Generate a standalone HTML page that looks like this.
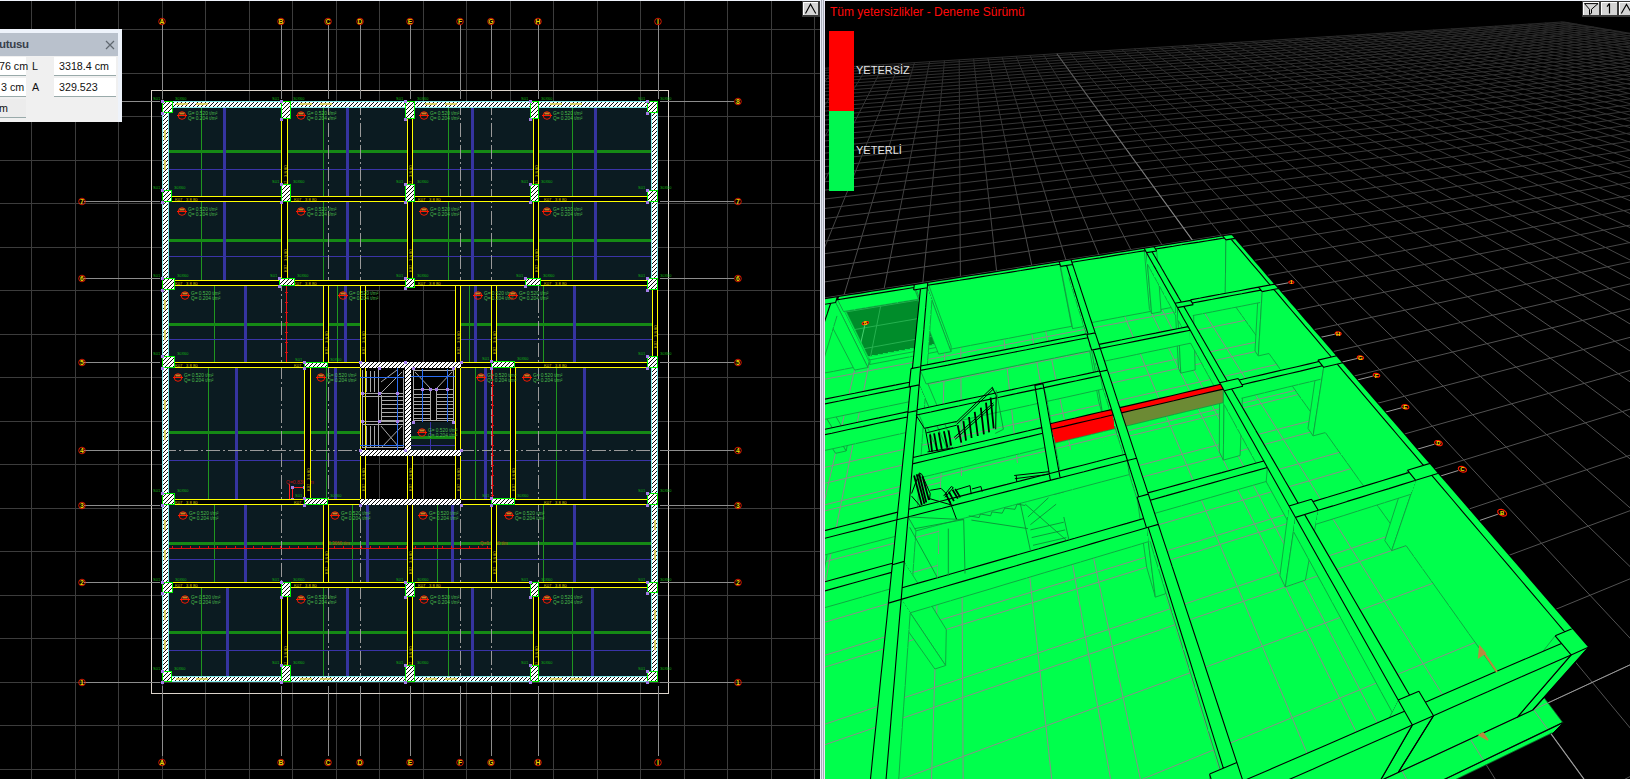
<!DOCTYPE html>
<html><head><meta charset="utf-8"><style>
html,body{margin:0;padding:0;width:1630px;height:779px;overflow:hidden;background:#000;font-family:"Liberation Sans",sans-serif}
#topline{position:absolute;left:0;top:0;width:1630px;height:1px;background:#eef2fa}
#sep{position:absolute;left:820px;top:0;width:5px;height:779px;background:linear-gradient(90deg,#e8ecf7 0,#e8ecf7 1px,#a8acb8 1px,#a8acb8 2px,#e4e8f2 2px,#e4e8f2 3px,#a8acb8 3px,#a8acb8 4px,#ece8f6 4px)}
</style></head><body>
<div id="topline"></div>
<svg width="820" height="778" viewBox="0 1 820 778" style="position:absolute;left:0;top:1px" shape-rendering="crispEdges"><defs>
<pattern id="hat" patternUnits="userSpaceOnUse" width="4" height="4">
<rect width="4" height="4" fill="#fff"/>
<path d="M-1,1 l2,-2 M0,4 l4,-4 M3,5 l2,-2" stroke="#000" stroke-width="0.95" shape-rendering="auto"/>
</pattern></defs><path d="M31.5,1V779M75.5,1V779M118.5,1V779M162.5,1V779M205.5,1V779M249.5,1V779M292.5,1V779M336.5,1V779M379.5,1V779M423.5,1V779M466.5,1V779M510.5,1V779M553.5,1V779M597.5,1V779M640.5,1V779M684.5,1V779M727.5,1V779M771.5,1V779M814.5,1V779M0,29.5H820M0,73.5H820M0,116.5H820M0,160.5H820M0,203.5H820M0,247.5H820M0,290.5H820M0,334.5H820M0,377.5H820M0,421.5H820M0,464.5H820M0,508.5H820M0,551.5H820M0,595.5H820M0,638.5H820M0,682.5H820M0,725.5H820M0,769.5H820" stroke="#3c3c3c" stroke-width="1" fill="none"/><rect x="151.5" y="90.5" width="517" height="603" fill="none" stroke="#dcd4cb" stroke-width="1"/><path d="M162.5,25V99M162.5,686V756M281.5,25V99M281.5,686V756M328.5,25V99M328.5,686V756M360.5,25V99M360.5,686V756M410.5,25V99M410.5,686V756M460.5,25V99M460.5,686V756M491.5,25V99M491.5,686V756M538.5,25V99M538.5,686V756M658.5,25V99M658.5,686V756M84,101.5H160M660,101.5H734M84,201.5H160M660,201.5H734M84,278.5H160M660,278.5H734M84,362.5H160M660,362.5H734M84,450.5H160M660,450.5H734M84,505.5H160M660,505.5H734M84,582.5H160M660,582.5H734M84,682.5H160M660,682.5H734" stroke="#8c8c8c" stroke-width="1" fill="none"/><rect x="162" y="101" width="496" height="581" fill="#0b1b21" /><g><rect x="365" y="286" width="90" height="76" fill="#000" /><rect x="365" y="456" width="42" height="43" fill="#000" /><rect x="413" y="456" width="42" height="43" fill="#000" /><path d="M379.5,286V362M379.5,456V499M423.5,286V362M423.5,456V499M365,290.5H455M365,334.5H455M365,464.5H455" stroke="#3c3c3c" stroke-width="1" fill="none"/></g><rect x="360" y="368" width="45" height="82" fill="#000" /><rect x="411" y="368" width="44" height="54" fill="#000" /><path d="M201.5,107V196M323.5,107V196M448.5,107V196M572.5,107V196M201.5,202V280M323.5,202V280M448.5,202V280M572.5,202V280M214.5,286V362M337.5,286V362M469.5,286V362M543.5,286V362M208.5,368V499M326.5,368V499M475.5,368V499M556.5,368V499M214.5,505V582M352.5,505V582M437.5,505V582M543.5,505V582M201.5,588V677M323.5,588V677M448.5,588V677M572.5,588V677" stroke="#1f961f" stroke-width="1" fill="none"/><path d="M168,169.5H281M288,169.5H407M413,169.5H533M539,169.5H652M168,256.5H281M288,256.5H407M413,256.5H533M539,256.5H652M168,339.5H323M329,339.5H360M461,339.5H491M497,339.5H652M168,460.5H304M311,460.5H360M461,460.5H510M516,460.5H652M168,559.5H323M329,559.5H407M413,559.5H491M497,559.5H652M168,650.5H281M288,650.5H407M413,650.5H533M539,650.5H652" stroke="#3a34a8" stroke-width="1" fill="none"/><path d="M168,151.5H281M288,151.5H407M413,151.5H533M539,151.5H652M168,240.5H281M288,240.5H407M413,240.5H533M539,240.5H652M168,324.5H323M329,324.5H360M461,324.5H491M497,324.5H652M168,432.5H304M311,432.5H360M461,432.5H510M516,432.5H652M168,543.5H323M329,543.5H407M413,543.5H491M497,543.5H652M168,632.5H281M288,632.5H407M413,632.5H533M539,632.5H652" stroke="#158a15" stroke-width="3" fill="none"/><path d="M224.5,107V196M347.5,107V196M472.5,107V196M595.5,107V196M224.5,202V280M347.5,202V280M472.5,202V280M595.5,202V280M245.5,286V362M345.5,286V362M475.5,286V362M574.5,286V362M236.5,368V499M335.5,368V499M485.5,368V499M584.5,368V499M245.5,505V582M367.5,505V582M452.5,505V582M574.5,505V582M227.5,588V677M347.5,588V677M472.5,588V677M592.5,588V677" stroke="#3634a0" stroke-width="3" fill="none"/><rect x="411" y="422" width="44" height="28" fill="#0b1b21" /><path d="M411,445.5H455M430.5,422V450" stroke="#3a34a8" stroke-width="1" fill="none"/><path d="M411,437.5H455" stroke="#158a15" stroke-width="3" fill="none"/><path d="M281.5,101V682M328.5,101V682M360.5,101V682M460.5,101V682M491.5,101V682M538.5,101V682" stroke="#9a9a9a" stroke-width="1" fill="none" stroke-dasharray="14,3,2,3"/><path d="M162,450.5H360M460,450.5H658" stroke="#9a9a9a" stroke-width="1" fill="none" stroke-dasharray="14,3,2,3"/><path d="M168,548.5H323M329,548.5H491" stroke="#e01010" stroke-width="1" fill="none"/><path d="M286.5,286V362M492.5,368V499" stroke="#ee1010" stroke-width="1.2" fill="none"/><path d="M172.5,546V548M181.5,546V548M190.5,546V548M199.5,546V548M208.5,546V548M217.5,546V548M226.5,546V548M235.5,546V548M244.5,546V548M253.5,546V548M262.5,546V548M271.5,546V548M280.5,546V548M289.5,546V548M298.5,546V548M307.5,546V548M316.5,546V548M325.5,546V548M334.5,546V548M343.5,546V548M352.5,546V548M361.5,546V548M370.5,546V548M379.5,546V548M388.5,546V548M397.5,546V548M406.5,546V548M415.5,546V548M424.5,546V548M433.5,546V548M442.5,546V548M451.5,546V548M460.5,546V548M469.5,546V548M478.5,546V548M487.5,546V548M285,292.5H288M285,302.5H288M285,312.5H288M285,322.5H288M285,332.5H288M285,342.5H288M285,352.5H288M491,375.5H494M491,385.5H494M491,395.5H494M491,405.5H494M491,415.5H494M491,425.5H494M491,435.5H494M491,445.5H494M491,455.5H494M491,465.5H494M491,475.5H494M491,485.5H494M491,495.5H494" stroke="#e01010" stroke-width="1" fill="none"/><path d="M292,487.5H304M292.5,487V500M289.5,484V503" stroke="#ff2020" stroke-width="1.2" fill="none"/><path d="M291,486h3v3h-3ZM303,486h3v3h-3ZM291,498h3v3h-3Z" fill="#a37ee8"/><text x="286" y="484" font-size="5" fill="#c01010" font-family="Liberation Sans">Q=0.830 t/m</text><text x="322" y="545" font-size="4.5" fill="#c04010" font-family="Liberation Sans">Q=0.3060 t/m</text><text x="480" y="545" font-size="4.5" fill="#c04010" font-family="Liberation Sans">Q=0.3060 t/m</text><path d="M168,196H652V202H168ZM168,280H652V286H168ZM168,362H360V368H168ZM460,362H652V368H460ZM168,499H360V505H168ZM460,499H652V505H460ZM168,582H652V588H168ZM281,107H288V196H281ZM281,202H288V280H281ZM281,588H288V677H281ZM407,107H413V196H407ZM407,202H413V280H407ZM407,588H413V677H407ZM533,107H539V196H533ZM533,202H539V280H533ZM533,588H539V677H533ZM407,505H413V582H407ZM407,456H413V499H407ZM652,290H658V356H652ZM323,286H329V362H323ZM323,505H329V582H323ZM491,286H497V362H491ZM491,505H497V582H491ZM360,286H366V362H360ZM455,286H461V362H455ZM304,368H311V499H304ZM360,368H366V499H360ZM455,368H461V499H455ZM510,368H516V499H510Z" fill="#000"/><path d="M168,196.5H652M168,201.5H652M168,280.5H652M168,285.5H652M168,362.5H360M168,367.5H360M460,362.5H652M460,367.5H652M168,499.5H360M168,504.5H360M460,499.5H652M460,504.5H652M168,582.5H652M168,587.5H652M281.5,107V196M287.5,107V196M281.5,202V280M287.5,202V280M281.5,588V677M287.5,588V677M407.5,107V196M412.5,107V196M407.5,202V280M412.5,202V280M407.5,588V677M412.5,588V677M533.5,107V196M538.5,107V196M533.5,202V280M538.5,202V280M533.5,588V677M538.5,588V677M407.5,505V582M412.5,505V582M407.5,456V499M412.5,456V499M652.5,290V356M657.5,290V356M323.5,286V362M328.5,286V362M323.5,505V582M328.5,505V582M491.5,286V362M496.5,286V362M491.5,505V582M496.5,505V582M360.5,286V362M365.5,286V362M455.5,286V362M460.5,286V362M304.5,368V499M310.5,368V499M360.5,368V499M365.5,368V499M455.5,368V499M460.5,368V499M510.5,368V499M515.5,368V499" stroke="#ffff00" stroke-width="1" fill="none"/><text x="175" y="201" font-size="4.2" fill="#d8c000" font-family="Liberation Sans">K07&#160;&#160;&#160;3 8 80</text><text x="294" y="201" font-size="4.2" fill="#d8c000" font-family="Liberation Sans">K07&#160;&#160;&#160;3 8 80</text><text x="418" y="201" font-size="4.2" fill="#d8c000" font-family="Liberation Sans">K07&#160;&#160;&#160;3 8 80</text><text x="544" y="201" font-size="4.2" fill="#d8c000" font-family="Liberation Sans">K07&#160;&#160;&#160;3 8 80</text><text x="175" y="285" font-size="4.2" fill="#d8c000" font-family="Liberation Sans">K07&#160;&#160;&#160;3 8 80</text><text x="294" y="285" font-size="4.2" fill="#d8c000" font-family="Liberation Sans">K07&#160;&#160;&#160;3 8 80</text><text x="418" y="285" font-size="4.2" fill="#d8c000" font-family="Liberation Sans">K07&#160;&#160;&#160;3 8 80</text><text x="544" y="285" font-size="4.2" fill="#d8c000" font-family="Liberation Sans">K07&#160;&#160;&#160;3 8 80</text><text x="175" y="367" font-size="4.2" fill="#d8c000" font-family="Liberation Sans">K07&#160;&#160;&#160;3 8 80</text><text x="294" y="367" font-size="4.2" fill="#d8c000" font-family="Liberation Sans">K07&#160;&#160;&#160;3 8 80</text><text x="544" y="367" font-size="4.2" fill="#d8c000" font-family="Liberation Sans">K07&#160;&#160;&#160;3 8 80</text><text x="175" y="504" font-size="4.2" fill="#d8c000" font-family="Liberation Sans">K07&#160;&#160;&#160;3 8 80</text><text x="294" y="504" font-size="4.2" fill="#d8c000" font-family="Liberation Sans">K07&#160;&#160;&#160;3 8 80</text><text x="544" y="504" font-size="4.2" fill="#d8c000" font-family="Liberation Sans">K07&#160;&#160;&#160;3 8 80</text><text x="175" y="587" font-size="4.2" fill="#d8c000" font-family="Liberation Sans">K07&#160;&#160;&#160;3 8 80</text><text x="294" y="587" font-size="4.2" fill="#d8c000" font-family="Liberation Sans">K07&#160;&#160;&#160;3 8 80</text><text x="418" y="587" font-size="4.2" fill="#d8c000" font-family="Liberation Sans">K07&#160;&#160;&#160;3 8 80</text><text x="544" y="587" font-size="4.2" fill="#d8c000" font-family="Liberation Sans">K07&#160;&#160;&#160;3 8 80</text><text transform="translate(287,188) rotate(-90)" font-size="4.2" fill="#d8c000" font-family="Liberation Sans">K07&#160;&#160;&#160;3 8 80</text><text transform="translate(287,272) rotate(-90)" font-size="4.2" fill="#d8c000" font-family="Liberation Sans">K07&#160;&#160;&#160;3 8 80</text><text transform="translate(287,669) rotate(-90)" font-size="4.2" fill="#d8c000" font-family="Liberation Sans">K07&#160;&#160;&#160;3 8 80</text><text transform="translate(412,188) rotate(-90)" font-size="4.2" fill="#d8c000" font-family="Liberation Sans">K07&#160;&#160;&#160;3 8 80</text><text transform="translate(412,272) rotate(-90)" font-size="4.2" fill="#d8c000" font-family="Liberation Sans">K07&#160;&#160;&#160;3 8 80</text><text transform="translate(412,669) rotate(-90)" font-size="4.2" fill="#d8c000" font-family="Liberation Sans">K07&#160;&#160;&#160;3 8 80</text><text transform="translate(538,188) rotate(-90)" font-size="4.2" fill="#d8c000" font-family="Liberation Sans">K07&#160;&#160;&#160;3 8 80</text><text transform="translate(538,272) rotate(-90)" font-size="4.2" fill="#d8c000" font-family="Liberation Sans">K07&#160;&#160;&#160;3 8 80</text><text transform="translate(538,669) rotate(-90)" font-size="4.2" fill="#d8c000" font-family="Liberation Sans">K07&#160;&#160;&#160;3 8 80</text><text transform="translate(412,574) rotate(-90)" font-size="4.2" fill="#d8c000" font-family="Liberation Sans">K07&#160;&#160;&#160;3 8 80</text><text transform="translate(412,491) rotate(-90)" font-size="4.2" fill="#d8c000" font-family="Liberation Sans">K07&#160;&#160;&#160;3 8 80</text><text transform="translate(657,348) rotate(-90)" font-size="4.2" fill="#d8c000" font-family="Liberation Sans">K07&#160;&#160;&#160;3 8 80</text><text transform="translate(328,354) rotate(-90)" font-size="4.2" fill="#d8c000" font-family="Liberation Sans">K07&#160;&#160;&#160;3 8 80</text><text transform="translate(328,574) rotate(-90)" font-size="4.2" fill="#d8c000" font-family="Liberation Sans">K07&#160;&#160;&#160;3 8 80</text><text transform="translate(496,354) rotate(-90)" font-size="4.2" fill="#d8c000" font-family="Liberation Sans">K07&#160;&#160;&#160;3 8 80</text><text transform="translate(496,574) rotate(-90)" font-size="4.2" fill="#d8c000" font-family="Liberation Sans">K07&#160;&#160;&#160;3 8 80</text><text transform="translate(365,354) rotate(-90)" font-size="4.2" fill="#d8c000" font-family="Liberation Sans">K07&#160;&#160;&#160;3 8 80</text><text transform="translate(460,354) rotate(-90)" font-size="4.2" fill="#d8c000" font-family="Liberation Sans">K07&#160;&#160;&#160;3 8 80</text><text transform="translate(310,491) rotate(-90)" font-size="4.2" fill="#d8c000" font-family="Liberation Sans">K07&#160;&#160;&#160;3 8 80</text><text transform="translate(365,491) rotate(-90)" font-size="4.2" fill="#d8c000" font-family="Liberation Sans">K07&#160;&#160;&#160;3 8 80</text><text transform="translate(460,491) rotate(-90)" font-size="4.2" fill="#d8c000" font-family="Liberation Sans">K07&#160;&#160;&#160;3 8 80</text><text transform="translate(515,491) rotate(-90)" font-size="4.2" fill="#d8c000" font-family="Liberation Sans">K07&#160;&#160;&#160;3 8 80</text><rect x="162" y="101" width="496" height="6" fill="url(#hat)"/><rect x="162" y="677" width="496" height="5" fill="url(#hat)"/><rect x="162" y="101" width="6" height="581" fill="url(#hat)"/><rect x="652" y="101" width="6" height="189" fill="url(#hat)"/><rect x="652" y="356" width="6" height="326" fill="url(#hat)"/><rect x="360" y="362" width="101" height="6" fill="url(#hat)"/><rect x="360" y="450" width="101" height="6" fill="url(#hat)"/><rect x="360" y="499" width="101" height="6" fill="url(#hat)"/><rect x="405" y="368" width="6" height="82" fill="url(#hat)"/><path d="M168.5,107V677M651.5,107V290M651.5,356V677M168,107.5H652M168,676.5H652M162.5,101V682M657.5,101V290M657.5,356V682M162,101.5H658M162,681.5H658" stroke="#7fe8e8" stroke-width="1" fill="none"/><path d="M176,104h12M196,104h12M300,104h12M320,104h12M425,104h12M445,104h12M550,104h12M570,104h12M176,679h12M196,679h12M300,679h12M320,679h12M425,679h12M445,679h12M550,679h12M570,679h12M165,130v10M165,160v10M165,300v10M165,330v10M165,400v10M165,430v10M165,520v10M165,550v10M165,610v10M165,640v10M655,520v10M655,550v10M655,610v10M655,640v10" stroke="#e0d040" stroke-width="1.5" fill="none" opacity="0.7"/><rect x="162.5" y="101.5" width="10" height="11" fill="url(#hat)" stroke="#00f000" stroke-width="1"/><rect x="281.5" y="101.5" width="9" height="17" fill="url(#hat)" stroke="#00f000" stroke-width="1"/><rect x="405.5" y="101.5" width="9" height="17" fill="url(#hat)" stroke="#00f000" stroke-width="1"/><rect x="530.5" y="101.5" width="8" height="17" fill="url(#hat)" stroke="#00f000" stroke-width="1"/><rect x="647.5" y="101.5" width="10" height="11" fill="url(#hat)" stroke="#00f000" stroke-width="1"/><rect x="162.5" y="190.5" width="9" height="11" fill="url(#hat)" stroke="#00f000" stroke-width="1"/><rect x="281.5" y="184.5" width="9" height="17" fill="url(#hat)" stroke="#00f000" stroke-width="1"/><rect x="405.5" y="184.5" width="9" height="17" fill="url(#hat)" stroke="#00f000" stroke-width="1"/><rect x="530.5" y="184.5" width="8" height="17" fill="url(#hat)" stroke="#00f000" stroke-width="1"/><rect x="647.5" y="190.5" width="10" height="11" fill="url(#hat)" stroke="#00f000" stroke-width="1"/><rect x="162.5" y="278.5" width="12" height="11" fill="url(#hat)" stroke="#00f000" stroke-width="1"/><rect x="279.5" y="278.5" width="15" height="7" fill="url(#hat)" stroke="#00f000" stroke-width="1"/><rect x="405.5" y="278.5" width="9" height="9" fill="url(#hat)" stroke="#00f000" stroke-width="1"/><rect x="525.5" y="278.5" width="15" height="7" fill="url(#hat)" stroke="#00f000" stroke-width="1"/><rect x="647.5" y="278.5" width="10" height="11" fill="url(#hat)" stroke="#00f000" stroke-width="1"/><rect x="162.5" y="356.5" width="12" height="11" fill="url(#hat)" stroke="#00f000" stroke-width="1"/><rect x="304.5" y="362.5" width="23" height="5" fill="url(#hat)" stroke="#00f000" stroke-width="1"/><rect x="491.5" y="361.5" width="23" height="6" fill="url(#hat)" stroke="#00f000" stroke-width="1"/><rect x="647.5" y="356.5" width="10" height="11" fill="url(#hat)" stroke="#00f000" stroke-width="1"/><rect x="162.5" y="493.5" width="12" height="11" fill="url(#hat)" stroke="#00f000" stroke-width="1"/><rect x="304.5" y="498.5" width="23" height="6" fill="url(#hat)" stroke="#00f000" stroke-width="1"/><rect x="491.5" y="498.5" width="23" height="6" fill="url(#hat)" stroke="#00f000" stroke-width="1"/><rect x="647.5" y="493.5" width="10" height="11" fill="url(#hat)" stroke="#00f000" stroke-width="1"/><rect x="162.5" y="582.5" width="10" height="10" fill="url(#hat)" stroke="#00f000" stroke-width="1"/><rect x="281.5" y="582.5" width="9" height="14" fill="url(#hat)" stroke="#00f000" stroke-width="1"/><rect x="405.5" y="582.5" width="9" height="14" fill="url(#hat)" stroke="#00f000" stroke-width="1"/><rect x="530.5" y="582.5" width="8" height="14" fill="url(#hat)" stroke="#00f000" stroke-width="1"/><rect x="647.5" y="582.5" width="10" height="10" fill="url(#hat)" stroke="#00f000" stroke-width="1"/><rect x="162.5" y="671.5" width="9" height="10" fill="url(#hat)" stroke="#00f000" stroke-width="1"/><rect x="281.5" y="665.5" width="9" height="16" fill="url(#hat)" stroke="#00f000" stroke-width="1"/><rect x="405.5" y="665.5" width="9" height="16" fill="url(#hat)" stroke="#00f000" stroke-width="1"/><rect x="530.5" y="665.5" width="8" height="16" fill="url(#hat)" stroke="#00f000" stroke-width="1"/><rect x="647.5" y="671.5" width="10" height="10" fill="url(#hat)" stroke="#00f000" stroke-width="1"/><path d="M362.5,370V448M378.5,370V448M381.5,395V421M403.5,370V448M362,393.5H404M362,396.5H404M362,421.5H404M362,424.5H404M362,447.5H404M381,400.5H404M381,404.5H404M381,408.5H404M381,412.5H404M381,416.5H404M381,420.5H404M366.5,371V392M370.5,371V392M374.5,371V392M366.5,426V447M370.5,426V447M374.5,426V447M381,393L402,372M381,382L397,370M381,448L402,426M381,426L398,446M413.5,370V421M453.5,370V421M430.5,389V421M436.5,389V421M413,370.5H454M413,389.5H454M413,420.5H454M414,394.5H430M437,394.5H453M414,397.5H430M437,397.5H453M414,401.5H430M437,401.5H453M414,404.5H430M437,404.5H453M414,408.5H430M437,408.5H453M414,411.5H430M437,411.5H453M414,414.5H430M437,414.5H453M414,418.5H430M437,418.5H453M415,372L430,388M452,372L437,388" stroke="#a8a8a8" stroke-width="1" fill="none" shape-rendering="auto"/><path d="M397.5,368V450M422.5,369V422M447.5,369V422M360,377.5H404M411,376.5H455M360,445.5H404" stroke="#2a6cf0" stroke-width="1" fill="none"/><path d="M161,100h3v3h-3ZM161,112h3v3h-3ZM280,100h3v3h-3ZM280,118h3v3h-3ZM404,100h3v3h-3ZM404,118h3v3h-3ZM529,100h3v3h-3ZM529,118h3v3h-3ZM646,100h3v3h-3ZM646,112h3v3h-3ZM161,189h3v3h-3ZM161,201h3v3h-3ZM280,183h3v3h-3ZM280,201h3v3h-3ZM404,183h3v3h-3ZM404,201h3v3h-3ZM529,183h3v3h-3ZM529,201h3v3h-3ZM646,189h3v3h-3ZM646,201h3v3h-3ZM161,277h3v3h-3ZM161,289h3v3h-3ZM278,277h3v3h-3ZM278,285h3v3h-3ZM404,277h3v3h-3ZM404,287h3v3h-3ZM524,277h3v3h-3ZM524,285h3v3h-3ZM646,277h3v3h-3ZM646,289h3v3h-3ZM161,355h3v3h-3ZM161,367h3v3h-3ZM303,361h3v3h-3ZM303,367h3v3h-3ZM490,360h3v3h-3ZM490,367h3v3h-3ZM646,355h3v3h-3ZM646,367h3v3h-3ZM161,492h3v3h-3ZM161,504h3v3h-3ZM303,497h3v3h-3ZM303,504h3v3h-3ZM490,497h3v3h-3ZM490,504h3v3h-3ZM646,492h3v3h-3ZM646,504h3v3h-3ZM161,581h3v3h-3ZM161,592h3v3h-3ZM280,581h3v3h-3ZM280,596h3v3h-3ZM404,581h3v3h-3ZM404,596h3v3h-3ZM529,581h3v3h-3ZM529,596h3v3h-3ZM646,581h3v3h-3ZM646,592h3v3h-3ZM161,670h3v3h-3ZM161,681h3v3h-3ZM280,664h3v3h-3ZM280,681h3v3h-3ZM404,664h3v3h-3ZM404,681h3v3h-3ZM529,664h3v3h-3ZM529,681h3v3h-3ZM646,670h3v3h-3ZM646,681h3v3h-3ZM359,361h3v3h-3ZM404,361h3v3h-3ZM460,361h3v3h-3ZM359,449h3v3h-3ZM404,449h3v3h-3ZM460,449h3v3h-3ZM359,504h3v3h-3ZM460,504h3v3h-3ZM378,367h3v3h-3ZM378,392h3v3h-3ZM378,420h3v3h-3ZM396,392h3v3h-3ZM396,420h3v3h-3ZM421,388h3v3h-3ZM446,388h3v3h-3ZM429,388h3v3h-3ZM435,388h3v3h-3ZM412,421h3v3h-3ZM452,421h3v3h-3ZM361,420h3v3h-3ZM361,392h3v3h-3ZM412,367h3v3h-3ZM452,367h3v3h-3Z" fill="#a37ee8"/><g shape-rendering="auto"><circle cx="182" cy="115.5" r="3.8" fill="none" stroke="#ff1a00" stroke-width="0.9"/><path d="M177,115.5h10" stroke="#ff1a00" stroke-width="1.1"/><rect x="179.5" y="112.5" width="5" height="2" fill="#d08020"/></g><text x="188" y="115" font-size="4.8" fill="#4cbc4c" font-family="Liberation Sans">G= 0.520 t/m²</text><text x="188" y="120" font-size="4.8" fill="#4cbc4c" font-family="Liberation Sans">Q= 0.204 t/m²</text><g shape-rendering="auto"><circle cx="301" cy="115.5" r="3.8" fill="none" stroke="#ff1a00" stroke-width="0.9"/><path d="M296,115.5h10" stroke="#ff1a00" stroke-width="1.1"/><rect x="298.5" y="112.5" width="5" height="2" fill="#d08020"/></g><text x="307" y="115" font-size="4.8" fill="#4cbc4c" font-family="Liberation Sans">G= 0.520 t/m²</text><text x="307" y="120" font-size="4.8" fill="#4cbc4c" font-family="Liberation Sans">Q= 0.204 t/m²</text><g shape-rendering="auto"><circle cx="424" cy="115.5" r="3.8" fill="none" stroke="#ff1a00" stroke-width="0.9"/><path d="M419,115.5h10" stroke="#ff1a00" stroke-width="1.1"/><rect x="421.5" y="112.5" width="5" height="2" fill="#d08020"/></g><text x="430" y="115" font-size="4.8" fill="#4cbc4c" font-family="Liberation Sans">G= 0.520 t/m²</text><text x="430" y="120" font-size="4.8" fill="#4cbc4c" font-family="Liberation Sans">Q= 0.204 t/m²</text><g shape-rendering="auto"><circle cx="547" cy="115.5" r="3.8" fill="none" stroke="#ff1a00" stroke-width="0.9"/><path d="M542,115.5h10" stroke="#ff1a00" stroke-width="1.1"/><rect x="544.5" y="112.5" width="5" height="2" fill="#d08020"/></g><text x="553" y="115" font-size="4.8" fill="#4cbc4c" font-family="Liberation Sans">G= 0.520 t/m²</text><text x="553" y="120" font-size="4.8" fill="#4cbc4c" font-family="Liberation Sans">Q= 0.204 t/m²</text><g shape-rendering="auto"><circle cx="182" cy="211.5" r="3.8" fill="none" stroke="#ff1a00" stroke-width="0.9"/><path d="M177,211.5h10" stroke="#ff1a00" stroke-width="1.1"/><rect x="179.5" y="208.5" width="5" height="2" fill="#d08020"/></g><text x="188" y="211" font-size="4.8" fill="#4cbc4c" font-family="Liberation Sans">G= 0.520 t/m²</text><text x="188" y="216" font-size="4.8" fill="#4cbc4c" font-family="Liberation Sans">Q= 0.204 t/m²</text><g shape-rendering="auto"><circle cx="301" cy="211.5" r="3.8" fill="none" stroke="#ff1a00" stroke-width="0.9"/><path d="M296,211.5h10" stroke="#ff1a00" stroke-width="1.1"/><rect x="298.5" y="208.5" width="5" height="2" fill="#d08020"/></g><text x="307" y="211" font-size="4.8" fill="#4cbc4c" font-family="Liberation Sans">G= 0.520 t/m²</text><text x="307" y="216" font-size="4.8" fill="#4cbc4c" font-family="Liberation Sans">Q= 0.204 t/m²</text><g shape-rendering="auto"><circle cx="424" cy="211.5" r="3.8" fill="none" stroke="#ff1a00" stroke-width="0.9"/><path d="M419,211.5h10" stroke="#ff1a00" stroke-width="1.1"/><rect x="421.5" y="208.5" width="5" height="2" fill="#d08020"/></g><text x="430" y="211" font-size="4.8" fill="#4cbc4c" font-family="Liberation Sans">G= 0.520 t/m²</text><text x="430" y="216" font-size="4.8" fill="#4cbc4c" font-family="Liberation Sans">Q= 0.204 t/m²</text><g shape-rendering="auto"><circle cx="547" cy="211.5" r="3.8" fill="none" stroke="#ff1a00" stroke-width="0.9"/><path d="M542,211.5h10" stroke="#ff1a00" stroke-width="1.1"/><rect x="544.5" y="208.5" width="5" height="2" fill="#d08020"/></g><text x="553" y="211" font-size="4.8" fill="#4cbc4c" font-family="Liberation Sans">G= 0.520 t/m²</text><text x="553" y="216" font-size="4.8" fill="#4cbc4c" font-family="Liberation Sans">Q= 0.204 t/m²</text><g shape-rendering="auto"><circle cx="185" cy="295.5" r="3.8" fill="none" stroke="#ff1a00" stroke-width="0.9"/><path d="M180,295.5h10" stroke="#ff1a00" stroke-width="1.1"/><rect x="182.5" y="292.5" width="5" height="2" fill="#d08020"/></g><text x="191" y="295" font-size="4.8" fill="#4cbc4c" font-family="Liberation Sans">G= 0.520 t/m²</text><text x="191" y="300" font-size="4.8" fill="#4cbc4c" font-family="Liberation Sans">Q= 0.204 t/m²</text><g shape-rendering="auto"><circle cx="343" cy="295.5" r="3.8" fill="none" stroke="#ff1a00" stroke-width="0.9"/><path d="M338,295.5h10" stroke="#ff1a00" stroke-width="1.1"/><rect x="340.5" y="292.5" width="5" height="2" fill="#d08020"/></g><text x="349" y="295" font-size="4.8" fill="#4cbc4c" font-family="Liberation Sans">G= 0.520 t/m²</text><text x="349" y="300" font-size="4.8" fill="#4cbc4c" font-family="Liberation Sans">Q= 0.204 t/m²</text><g shape-rendering="auto"><circle cx="478" cy="295.5" r="3.8" fill="none" stroke="#ff1a00" stroke-width="0.9"/><path d="M473,295.5h10" stroke="#ff1a00" stroke-width="1.1"/><rect x="475.5" y="292.5" width="5" height="2" fill="#d08020"/></g><text x="484" y="295" font-size="4.8" fill="#4cbc4c" font-family="Liberation Sans">G= 0.520 t/m²</text><text x="484" y="300" font-size="4.8" fill="#4cbc4c" font-family="Liberation Sans">Q= 0.204 t/m²</text><g shape-rendering="auto"><circle cx="513" cy="295.5" r="3.8" fill="none" stroke="#ff1a00" stroke-width="0.9"/><path d="M508,295.5h10" stroke="#ff1a00" stroke-width="1.1"/><rect x="510.5" y="292.5" width="5" height="2" fill="#d08020"/></g><text x="519" y="295" font-size="4.8" fill="#4cbc4c" font-family="Liberation Sans">G= 0.520 t/m²</text><text x="519" y="300" font-size="4.8" fill="#4cbc4c" font-family="Liberation Sans">Q= 0.204 t/m²</text><g shape-rendering="auto"><circle cx="178" cy="377.5" r="3.8" fill="none" stroke="#ff1a00" stroke-width="0.9"/><path d="M173,377.5h10" stroke="#ff1a00" stroke-width="1.1"/><rect x="175.5" y="374.5" width="5" height="2" fill="#d08020"/></g><text x="184" y="377" font-size="4.8" fill="#4cbc4c" font-family="Liberation Sans">G= 0.520 t/m²</text><text x="184" y="382" font-size="4.8" fill="#4cbc4c" font-family="Liberation Sans">Q= 0.204 t/m²</text><g shape-rendering="auto"><circle cx="321" cy="377.5" r="3.8" fill="none" stroke="#ff1a00" stroke-width="0.9"/><path d="M316,377.5h10" stroke="#ff1a00" stroke-width="1.1"/><rect x="318.5" y="374.5" width="5" height="2" fill="#d08020"/></g><text x="327" y="377" font-size="4.8" fill="#4cbc4c" font-family="Liberation Sans">G= 0.520 t/m²</text><text x="327" y="382" font-size="4.8" fill="#4cbc4c" font-family="Liberation Sans">Q= 0.204 t/m²</text><g shape-rendering="auto"><circle cx="481" cy="377.5" r="3.8" fill="none" stroke="#ff1a00" stroke-width="0.9"/><path d="M476,377.5h10" stroke="#ff1a00" stroke-width="1.1"/><rect x="478.5" y="374.5" width="5" height="2" fill="#d08020"/></g><text x="487" y="377" font-size="4.8" fill="#4cbc4c" font-family="Liberation Sans">G= 0.520 t/m²</text><text x="487" y="382" font-size="4.8" fill="#4cbc4c" font-family="Liberation Sans">Q= 0.204 t/m²</text><g shape-rendering="auto"><circle cx="527" cy="377.5" r="3.8" fill="none" stroke="#ff1a00" stroke-width="0.9"/><path d="M522,377.5h10" stroke="#ff1a00" stroke-width="1.1"/><rect x="524.5" y="374.5" width="5" height="2" fill="#d08020"/></g><text x="533" y="377" font-size="4.8" fill="#4cbc4c" font-family="Liberation Sans">G= 0.520 t/m²</text><text x="533" y="382" font-size="4.8" fill="#4cbc4c" font-family="Liberation Sans">Q= 0.204 t/m²</text><g shape-rendering="auto"><circle cx="422" cy="432.5" r="3.8" fill="none" stroke="#ff1a00" stroke-width="0.9"/><path d="M417,432.5h10" stroke="#ff1a00" stroke-width="1.1"/><rect x="419.5" y="429.5" width="5" height="2" fill="#d08020"/></g><text x="428" y="432" font-size="4.8" fill="#4cbc4c" font-family="Liberation Sans">G= 0.520 t/m²</text><text x="428" y="437" font-size="4.8" fill="#4cbc4c" font-family="Liberation Sans">Q= 0.204 t/m²</text><g shape-rendering="auto"><circle cx="183" cy="515.5" r="3.8" fill="none" stroke="#ff1a00" stroke-width="0.9"/><path d="M178,515.5h10" stroke="#ff1a00" stroke-width="1.1"/><rect x="180.5" y="512.5" width="5" height="2" fill="#d08020"/></g><text x="189" y="515" font-size="4.8" fill="#4cbc4c" font-family="Liberation Sans">G= 0.520 t/m²</text><text x="189" y="520" font-size="4.8" fill="#4cbc4c" font-family="Liberation Sans">Q= 0.204 t/m²</text><g shape-rendering="auto"><circle cx="335" cy="515.5" r="3.8" fill="none" stroke="#ff1a00" stroke-width="0.9"/><path d="M330,515.5h10" stroke="#ff1a00" stroke-width="1.1"/><rect x="332.5" y="512.5" width="5" height="2" fill="#d08020"/></g><text x="341" y="515" font-size="4.8" fill="#4cbc4c" font-family="Liberation Sans">G= 0.520 t/m²</text><text x="341" y="520" font-size="4.8" fill="#4cbc4c" font-family="Liberation Sans">Q= 0.204 t/m²</text><g shape-rendering="auto"><circle cx="423" cy="515.5" r="3.8" fill="none" stroke="#ff1a00" stroke-width="0.9"/><path d="M418,515.5h10" stroke="#ff1a00" stroke-width="1.1"/><rect x="420.5" y="512.5" width="5" height="2" fill="#d08020"/></g><text x="429" y="515" font-size="4.8" fill="#4cbc4c" font-family="Liberation Sans">G= 0.520 t/m²</text><text x="429" y="520" font-size="4.8" fill="#4cbc4c" font-family="Liberation Sans">Q= 0.204 t/m²</text><g shape-rendering="auto"><circle cx="509" cy="515.5" r="3.8" fill="none" stroke="#ff1a00" stroke-width="0.9"/><path d="M504,515.5h10" stroke="#ff1a00" stroke-width="1.1"/><rect x="506.5" y="512.5" width="5" height="2" fill="#d08020"/></g><text x="515" y="515" font-size="4.8" fill="#4cbc4c" font-family="Liberation Sans">G= 0.520 t/m²</text><text x="515" y="520" font-size="4.8" fill="#4cbc4c" font-family="Liberation Sans">Q= 0.204 t/m²</text><g shape-rendering="auto"><circle cx="185" cy="599.5" r="3.8" fill="none" stroke="#ff1a00" stroke-width="0.9"/><path d="M180,599.5h10" stroke="#ff1a00" stroke-width="1.1"/><rect x="182.5" y="596.5" width="5" height="2" fill="#d08020"/></g><text x="191" y="599" font-size="4.8" fill="#4cbc4c" font-family="Liberation Sans">G= 0.520 t/m²</text><text x="191" y="604" font-size="4.8" fill="#4cbc4c" font-family="Liberation Sans">Q= 0.204 t/m²</text><g shape-rendering="auto"><circle cx="301" cy="599.5" r="3.8" fill="none" stroke="#ff1a00" stroke-width="0.9"/><path d="M296,599.5h10" stroke="#ff1a00" stroke-width="1.1"/><rect x="298.5" y="596.5" width="5" height="2" fill="#d08020"/></g><text x="307" y="599" font-size="4.8" fill="#4cbc4c" font-family="Liberation Sans">G= 0.520 t/m²</text><text x="307" y="604" font-size="4.8" fill="#4cbc4c" font-family="Liberation Sans">Q= 0.204 t/m²</text><g shape-rendering="auto"><circle cx="424" cy="599.5" r="3.8" fill="none" stroke="#ff1a00" stroke-width="0.9"/><path d="M419,599.5h10" stroke="#ff1a00" stroke-width="1.1"/><rect x="421.5" y="596.5" width="5" height="2" fill="#d08020"/></g><text x="430" y="599" font-size="4.8" fill="#4cbc4c" font-family="Liberation Sans">G= 0.520 t/m²</text><text x="430" y="604" font-size="4.8" fill="#4cbc4c" font-family="Liberation Sans">Q= 0.204 t/m²</text><g shape-rendering="auto"><circle cx="547" cy="599.5" r="3.8" fill="none" stroke="#ff1a00" stroke-width="0.9"/><path d="M542,599.5h10" stroke="#ff1a00" stroke-width="1.1"/><rect x="544.5" y="596.5" width="5" height="2" fill="#d08020"/></g><text x="553" y="599" font-size="4.8" fill="#4cbc4c" font-family="Liberation Sans">G= 0.520 t/m²</text><text x="553" y="604" font-size="4.8" fill="#4cbc4c" font-family="Liberation Sans">Q= 0.204 t/m²</text><text x="153" y="100" font-size="4" fill="#10b010" font-family="Liberation Sans">S01</text><text x="175" y="100" font-size="4" fill="#10b010" font-family="Liberation Sans">30X60</text><text x="272" y="100" font-size="4" fill="#10b010" font-family="Liberation Sans">S01</text><text x="293" y="100" font-size="4" fill="#10b010" font-family="Liberation Sans">30X60</text><text x="396" y="100" font-size="4" fill="#10b010" font-family="Liberation Sans">S01</text><text x="417" y="100" font-size="4" fill="#10b010" font-family="Liberation Sans">30X60</text><text x="521" y="100" font-size="4" fill="#10b010" font-family="Liberation Sans">S01</text><text x="541" y="100" font-size="4" fill="#10b010" font-family="Liberation Sans">30X60</text><text x="638" y="100" font-size="4" fill="#10b010" font-family="Liberation Sans">S01</text><text x="660" y="100" font-size="4" fill="#10b010" font-family="Liberation Sans">30X60</text><text x="153" y="189" font-size="4" fill="#10b010" font-family="Liberation Sans">S01</text><text x="174" y="189" font-size="4" fill="#10b010" font-family="Liberation Sans">30X60</text><text x="272" y="183" font-size="4" fill="#10b010" font-family="Liberation Sans">S01</text><text x="293" y="183" font-size="4" fill="#10b010" font-family="Liberation Sans">30X60</text><text x="396" y="183" font-size="4" fill="#10b010" font-family="Liberation Sans">S01</text><text x="417" y="183" font-size="4" fill="#10b010" font-family="Liberation Sans">30X60</text><text x="521" y="183" font-size="4" fill="#10b010" font-family="Liberation Sans">S01</text><text x="541" y="183" font-size="4" fill="#10b010" font-family="Liberation Sans">30X60</text><text x="638" y="189" font-size="4" fill="#10b010" font-family="Liberation Sans">S01</text><text x="660" y="189" font-size="4" fill="#10b010" font-family="Liberation Sans">30X60</text><text x="153" y="277" font-size="4" fill="#10b010" font-family="Liberation Sans">S01</text><text x="177" y="277" font-size="4" fill="#10b010" font-family="Liberation Sans">30X60</text><text x="270" y="277" font-size="4" fill="#10b010" font-family="Liberation Sans">S01</text><text x="297" y="277" font-size="4" fill="#10b010" font-family="Liberation Sans">30X60</text><text x="396" y="277" font-size="4" fill="#10b010" font-family="Liberation Sans">S01</text><text x="417" y="277" font-size="4" fill="#10b010" font-family="Liberation Sans">30X60</text><text x="516" y="277" font-size="4" fill="#10b010" font-family="Liberation Sans">S01</text><text x="543" y="277" font-size="4" fill="#10b010" font-family="Liberation Sans">30X60</text><text x="638" y="277" font-size="4" fill="#10b010" font-family="Liberation Sans">S01</text><text x="660" y="277" font-size="4" fill="#10b010" font-family="Liberation Sans">30X60</text><text x="153" y="355" font-size="4" fill="#10b010" font-family="Liberation Sans">S01</text><text x="177" y="355" font-size="4" fill="#10b010" font-family="Liberation Sans">30X60</text><text x="295" y="361" font-size="4" fill="#10b010" font-family="Liberation Sans">S01</text><text x="330" y="361" font-size="4" fill="#10b010" font-family="Liberation Sans">30X60</text><text x="482" y="360" font-size="4" fill="#10b010" font-family="Liberation Sans">S01</text><text x="517" y="360" font-size="4" fill="#10b010" font-family="Liberation Sans">30X60</text><text x="638" y="355" font-size="4" fill="#10b010" font-family="Liberation Sans">S01</text><text x="660" y="355" font-size="4" fill="#10b010" font-family="Liberation Sans">30X60</text><text x="153" y="492" font-size="4" fill="#10b010" font-family="Liberation Sans">S01</text><text x="177" y="492" font-size="4" fill="#10b010" font-family="Liberation Sans">30X60</text><text x="295" y="497" font-size="4" fill="#10b010" font-family="Liberation Sans">S01</text><text x="330" y="497" font-size="4" fill="#10b010" font-family="Liberation Sans">30X60</text><text x="482" y="497" font-size="4" fill="#10b010" font-family="Liberation Sans">S01</text><text x="517" y="497" font-size="4" fill="#10b010" font-family="Liberation Sans">30X60</text><text x="638" y="492" font-size="4" fill="#10b010" font-family="Liberation Sans">S01</text><text x="660" y="492" font-size="4" fill="#10b010" font-family="Liberation Sans">30X60</text><text x="153" y="581" font-size="4" fill="#10b010" font-family="Liberation Sans">S01</text><text x="175" y="581" font-size="4" fill="#10b010" font-family="Liberation Sans">30X60</text><text x="272" y="581" font-size="4" fill="#10b010" font-family="Liberation Sans">S01</text><text x="293" y="581" font-size="4" fill="#10b010" font-family="Liberation Sans">30X60</text><text x="396" y="581" font-size="4" fill="#10b010" font-family="Liberation Sans">S01</text><text x="417" y="581" font-size="4" fill="#10b010" font-family="Liberation Sans">30X60</text><text x="521" y="581" font-size="4" fill="#10b010" font-family="Liberation Sans">S01</text><text x="541" y="581" font-size="4" fill="#10b010" font-family="Liberation Sans">30X60</text><text x="638" y="581" font-size="4" fill="#10b010" font-family="Liberation Sans">S01</text><text x="660" y="581" font-size="4" fill="#10b010" font-family="Liberation Sans">30X60</text><text x="153" y="670" font-size="4" fill="#10b010" font-family="Liberation Sans">S01</text><text x="174" y="670" font-size="4" fill="#10b010" font-family="Liberation Sans">30X60</text><text x="272" y="664" font-size="4" fill="#10b010" font-family="Liberation Sans">S01</text><text x="293" y="664" font-size="4" fill="#10b010" font-family="Liberation Sans">30X60</text><text x="396" y="664" font-size="4" fill="#10b010" font-family="Liberation Sans">S01</text><text x="417" y="664" font-size="4" fill="#10b010" font-family="Liberation Sans">30X60</text><text x="521" y="664" font-size="4" fill="#10b010" font-family="Liberation Sans">S01</text><text x="541" y="664" font-size="4" fill="#10b010" font-family="Liberation Sans">30X60</text><text x="638" y="670" font-size="4" fill="#10b010" font-family="Liberation Sans">S01</text><text x="660" y="670" font-size="4" fill="#10b010" font-family="Liberation Sans">30X60</text><circle cx="162" cy="21.5" r="3.3" fill="none" stroke="#ff2000" stroke-width="0.8" shape-rendering="auto"/><text x="162" y="23.9" font-size="6.8" fill="#f0d000" text-anchor="middle" font-family="Liberation Sans" font-weight="bold">A</text><circle cx="162" cy="762.5" r="3.3" fill="none" stroke="#ff2000" stroke-width="0.8" shape-rendering="auto"/><text x="162" y="764.9" font-size="6.8" fill="#f0d000" text-anchor="middle" font-family="Liberation Sans" font-weight="bold">A</text><circle cx="281" cy="21.5" r="3.3" fill="none" stroke="#ff2000" stroke-width="0.8" shape-rendering="auto"/><text x="281" y="23.9" font-size="6.8" fill="#f0d000" text-anchor="middle" font-family="Liberation Sans" font-weight="bold">B</text><circle cx="281" cy="762.5" r="3.3" fill="none" stroke="#ff2000" stroke-width="0.8" shape-rendering="auto"/><text x="281" y="764.9" font-size="6.8" fill="#f0d000" text-anchor="middle" font-family="Liberation Sans" font-weight="bold">B</text><circle cx="328" cy="21.5" r="3.3" fill="none" stroke="#ff2000" stroke-width="0.8" shape-rendering="auto"/><text x="328" y="23.9" font-size="6.8" fill="#f0d000" text-anchor="middle" font-family="Liberation Sans" font-weight="bold">C</text><circle cx="328" cy="762.5" r="3.3" fill="none" stroke="#ff2000" stroke-width="0.8" shape-rendering="auto"/><text x="328" y="764.9" font-size="6.8" fill="#f0d000" text-anchor="middle" font-family="Liberation Sans" font-weight="bold">C</text><circle cx="360" cy="21.5" r="3.3" fill="none" stroke="#ff2000" stroke-width="0.8" shape-rendering="auto"/><text x="360" y="23.9" font-size="6.8" fill="#f0d000" text-anchor="middle" font-family="Liberation Sans" font-weight="bold">D</text><circle cx="360" cy="762.5" r="3.3" fill="none" stroke="#ff2000" stroke-width="0.8" shape-rendering="auto"/><text x="360" y="764.9" font-size="6.8" fill="#f0d000" text-anchor="middle" font-family="Liberation Sans" font-weight="bold">D</text><circle cx="410" cy="21.5" r="3.3" fill="none" stroke="#ff2000" stroke-width="0.8" shape-rendering="auto"/><text x="410" y="23.9" font-size="6.8" fill="#f0d000" text-anchor="middle" font-family="Liberation Sans" font-weight="bold">E</text><circle cx="410" cy="762.5" r="3.3" fill="none" stroke="#ff2000" stroke-width="0.8" shape-rendering="auto"/><text x="410" y="764.9" font-size="6.8" fill="#f0d000" text-anchor="middle" font-family="Liberation Sans" font-weight="bold">E</text><circle cx="460" cy="21.5" r="3.3" fill="none" stroke="#ff2000" stroke-width="0.8" shape-rendering="auto"/><text x="460" y="23.9" font-size="6.8" fill="#f0d000" text-anchor="middle" font-family="Liberation Sans" font-weight="bold">F</text><circle cx="460" cy="762.5" r="3.3" fill="none" stroke="#ff2000" stroke-width="0.8" shape-rendering="auto"/><text x="460" y="764.9" font-size="6.8" fill="#f0d000" text-anchor="middle" font-family="Liberation Sans" font-weight="bold">F</text><circle cx="491" cy="21.5" r="3.3" fill="none" stroke="#ff2000" stroke-width="0.8" shape-rendering="auto"/><text x="491" y="23.9" font-size="6.8" fill="#f0d000" text-anchor="middle" font-family="Liberation Sans" font-weight="bold">G</text><circle cx="491" cy="762.5" r="3.3" fill="none" stroke="#ff2000" stroke-width="0.8" shape-rendering="auto"/><text x="491" y="764.9" font-size="6.8" fill="#f0d000" text-anchor="middle" font-family="Liberation Sans" font-weight="bold">G</text><circle cx="538" cy="21.5" r="3.3" fill="none" stroke="#ff2000" stroke-width="0.8" shape-rendering="auto"/><text x="538" y="23.9" font-size="6.8" fill="#f0d000" text-anchor="middle" font-family="Liberation Sans" font-weight="bold">H</text><circle cx="538" cy="762.5" r="3.3" fill="none" stroke="#ff2000" stroke-width="0.8" shape-rendering="auto"/><text x="538" y="764.9" font-size="6.8" fill="#f0d000" text-anchor="middle" font-family="Liberation Sans" font-weight="bold">H</text><circle cx="658" cy="21.5" r="3.3" fill="none" stroke="#ff2000" stroke-width="0.8" shape-rendering="auto"/><text x="658" y="23.9" font-size="6.8" fill="#f0d000" text-anchor="middle" font-family="Liberation Sans" font-weight="bold">I</text><circle cx="658" cy="762.5" r="3.3" fill="none" stroke="#ff2000" stroke-width="0.8" shape-rendering="auto"/><text x="658" y="764.9" font-size="6.8" fill="#f0d000" text-anchor="middle" font-family="Liberation Sans" font-weight="bold">I</text><circle cx="738" cy="101.5" r="3.3" fill="none" stroke="#ff2000" stroke-width="0.8" shape-rendering="auto"/><text x="738" y="103.9" font-size="6.8" fill="#f0d000" text-anchor="middle" font-family="Liberation Sans" font-weight="bold">8</text><circle cx="738" cy="201.5" r="3.3" fill="none" stroke="#ff2000" stroke-width="0.8" shape-rendering="auto"/><text x="738" y="203.9" font-size="6.8" fill="#f0d000" text-anchor="middle" font-family="Liberation Sans" font-weight="bold">7</text><circle cx="82" cy="201.5" r="3.3" fill="none" stroke="#ff2000" stroke-width="0.8" shape-rendering="auto"/><text x="82" y="203.9" font-size="6.8" fill="#f0d000" text-anchor="middle" font-family="Liberation Sans" font-weight="bold">7</text><circle cx="738" cy="278.5" r="3.3" fill="none" stroke="#ff2000" stroke-width="0.8" shape-rendering="auto"/><text x="738" y="280.9" font-size="6.8" fill="#f0d000" text-anchor="middle" font-family="Liberation Sans" font-weight="bold">6</text><circle cx="82" cy="278.5" r="3.3" fill="none" stroke="#ff2000" stroke-width="0.8" shape-rendering="auto"/><text x="82" y="280.9" font-size="6.8" fill="#f0d000" text-anchor="middle" font-family="Liberation Sans" font-weight="bold">6</text><circle cx="738" cy="362.5" r="3.3" fill="none" stroke="#ff2000" stroke-width="0.8" shape-rendering="auto"/><text x="738" y="364.9" font-size="6.8" fill="#f0d000" text-anchor="middle" font-family="Liberation Sans" font-weight="bold">5</text><circle cx="82" cy="362.5" r="3.3" fill="none" stroke="#ff2000" stroke-width="0.8" shape-rendering="auto"/><text x="82" y="364.9" font-size="6.8" fill="#f0d000" text-anchor="middle" font-family="Liberation Sans" font-weight="bold">5</text><circle cx="738" cy="450.5" r="3.3" fill="none" stroke="#ff2000" stroke-width="0.8" shape-rendering="auto"/><text x="738" y="452.9" font-size="6.8" fill="#f0d000" text-anchor="middle" font-family="Liberation Sans" font-weight="bold">4</text><circle cx="82" cy="450.5" r="3.3" fill="none" stroke="#ff2000" stroke-width="0.8" shape-rendering="auto"/><text x="82" y="452.9" font-size="6.8" fill="#f0d000" text-anchor="middle" font-family="Liberation Sans" font-weight="bold">4</text><circle cx="738" cy="505.5" r="3.3" fill="none" stroke="#ff2000" stroke-width="0.8" shape-rendering="auto"/><text x="738" y="507.9" font-size="6.8" fill="#f0d000" text-anchor="middle" font-family="Liberation Sans" font-weight="bold">3</text><circle cx="82" cy="505.5" r="3.3" fill="none" stroke="#ff2000" stroke-width="0.8" shape-rendering="auto"/><text x="82" y="507.9" font-size="6.8" fill="#f0d000" text-anchor="middle" font-family="Liberation Sans" font-weight="bold">3</text><circle cx="738" cy="582.5" r="3.3" fill="none" stroke="#ff2000" stroke-width="0.8" shape-rendering="auto"/><text x="738" y="584.9" font-size="6.8" fill="#f0d000" text-anchor="middle" font-family="Liberation Sans" font-weight="bold">2</text><circle cx="82" cy="582.5" r="3.3" fill="none" stroke="#ff2000" stroke-width="0.8" shape-rendering="auto"/><text x="82" y="584.9" font-size="6.8" fill="#f0d000" text-anchor="middle" font-family="Liberation Sans" font-weight="bold">2</text><circle cx="738" cy="682.5" r="3.3" fill="none" stroke="#ff2000" stroke-width="0.8" shape-rendering="auto"/><text x="738" y="684.9" font-size="6.8" fill="#f0d000" text-anchor="middle" font-family="Liberation Sans" font-weight="bold">1</text><circle cx="82" cy="682.5" r="3.3" fill="none" stroke="#ff2000" stroke-width="0.8" shape-rendering="auto"/><text x="82" y="684.9" font-size="6.8" fill="#f0d000" text-anchor="middle" font-family="Liberation Sans" font-weight="bold">1</text></svg><svg width="805" height="779" style="position:absolute;left:825px;top:0"><defs><clipPath id="raftclip"><polygon points="-955.9,1535.3 -191,399.6 411.3,288.1 737.8,722.6"/></clipPath></defs><rect x="0" y="1" width="805" height="778" fill="#000"/><path d="M37431.6,6352.1L34234.4,5764.4M35618.2,6353.4L19944.3,3314.5M33804.8,6354.8L14094.1,2311.5M31991.4,6356.2L10911.3,1765.9M30178.0,6357.6L8910.3,1422.8M28364.6,6359.0L7536.0,1187.2M26551.2,6360.3L6533.8,1015.4M24737.8,6361.7L5770.6,884.6M22924.4,6363.1L5170.0,781.6M21111.0,6364.5L4685.1,698.5M19297.6,6365.9L4285.3,629.9M17484.2,6367.2L3950.1,572.5M15670.8,6368.6L3665.0,523.6M13857.4,6370.0L3419.5,481.5M12044.0,6371.4L3206.0,444.9M10230.6,6372.8L3018.4,412.7M8417.3,6374.2L2852.5,384.3M6603.9,6375.5L2704.6,358.9M4790.5,6376.9L2572.0,336.2M2977.1,6378.3L2452.4,315.7M1163.7,6379.7L2343.9,297.1M-649.7,6381.1L2245.2,280.2M-2463.1,6382.4L2154.9,264.7M-4276.5,6383.8L2072.0,250.5M-6089.9,6385.2L1995.6,237.4M-7903.3,6386.6L1925.1,225.3M-9716.7,6388.0L1859.6,214.1M-11530.1,6389.3L1798.8,203.6M-13343.5,6390.7L1742.1,193.9M-15156.9,6392.1L1689.2,184.9M-16970.3,6393.5L1639.6,176.4M-18783.7,6394.9L1593.1,168.4M-20597.0,6396.3L1549.4,160.9M-22410.4,6397.6L1508.2,153.8M-24223.8,6399.0L1469.4,147.2M-26037.2,6400.4L1432.6,140.9M-27850.6,6401.8L1397.9,134.9M-29664.0,6403.2L1365.0,129.3M-31477.4,6404.5L1333.7,123.9M-23533.2,4632.6L1304.0,118.8M-14875.0,2907.9L1275.7,114.0M-10855.0,2107.1L1248.7,109.3M-8533.5,1644.6L1223.0,104.9M-7021.9,1343.5L1198.5,100.7M-5959.2,1131.8L1175.0,96.7M-5171.4,974.9L1152.5,92.9M-4564.0,853.9L1131.0,89.2M-4081.4,757.7L1110.4,85.6M-3688.7,679.5L1090.6,82.2M-3363.0,614.6L1071.6,79.0M-3088.4,559.9L1053.4,75.9M-2853.8,513.2L1035.8,72.8M-2651.1,472.8L1018.9,69.9M-2474.1,437.5L1002.6,67.2M-2318.3,406.5L986.9,64.5M-2180.0,379.0L971.8,61.9M-2056.5,354.4L957.2,59.4M-1945.5,332.3L943.1,56.9M-1845.3,312.3L929.4,54.6M-1754.2,294.1L916.3,52.3M-1671.2,277.6L903.5,50.2M-1595.2,262.5L891.2,48.0M-1525.3,248.5L879.2,46.0M-1460.8,235.7L867.6,44.0M-1401.2,223.8L856.4,42.1M-1345.9,212.8L845.5,40.2M-1294.4,202.5L834.9,38.4M-1246.4,193.0L824.7,36.6M-1201.5,184.0L814.7,34.9M-1159.4,175.7L805.0,33.3M-1119.9,167.8L795.6,31.7M-1082.8,160.4L786.5,30.1M-1047.7,153.4L777.6,28.6M-1014.7,146.8L768.9,27.1M-983.4,140.6L760.5,25.6M-953.8,134.7L752.3,24.2M-925.8,129.1L744.3,22.9M-905.9,125.1L738.5,21.9M-32431.9,6405.3L-905.9,125.1M-31766.5,6404.8L-875.2,123.2M-31101.2,6404.3L-845.2,121.3M-30435.9,6403.7L-815.7,119.5M-29770.6,6403.2L-786.7,117.7M-29105.3,6402.7L-758.3,115.9M-28439.9,6402.2L-730.3,114.1M-27774.6,6401.7L-702.8,112.4M-27109.3,6401.2L-675.8,110.7M-26444.0,6400.7L-649.3,109.0M-25778.7,6400.2L-623.2,107.4M-25113.3,6399.7L-597.6,105.8M-24448.0,6399.2L-572.4,104.2M-23782.7,6398.7L-547.6,102.6M-23117.4,6398.2L-523.2,101.1M-22452.1,6397.7L-499.2,99.6M-21786.7,6397.2L-475.6,98.1M-21121.4,6396.7L-452.4,96.7M-20456.1,6396.1L-429.5,95.2M-19790.8,6395.6L-407.0,93.8M-19125.5,6395.1L-384.9,92.4M-18460.1,6394.6L-363.1,91.1M-17794.8,6394.1L-341.6,89.7M-17129.5,6393.6L-320.5,88.4M-16464.2,6393.1L-299.7,87.1M-15798.9,6392.6L-279.2,85.8M-15133.5,6392.1L-259.0,84.5M-14468.2,6391.6L-239.1,83.3M-13802.9,6391.1L-219.5,82.0M-13137.6,6390.6L-200.2,80.8M-12472.3,6390.1L-181.2,79.6M-11806.9,6389.6L-162.4,78.5M-11141.6,6389.1L-144.0,77.3M-10476.3,6388.5L-125.7,76.1M-9811.0,6388.0L-107.8,75.0M-9145.7,6387.5L-90.1,73.9M-8480.3,6387.0L-72.6,72.8M-7815.0,6386.5L-55.4,71.7M-7149.7,6386.0L-38.4,70.7M-6484.4,6385.5L-21.6,69.6M-5819.1,6385.0L-5.1,68.6M-5153.7,6384.5L11.2,67.5M-4488.4,6384.0L27.3,66.5M-3823.1,6383.5L43.2,65.5M-3157.8,6383.0L58.8,64.6M-2492.5,6382.5L74.3,63.6M-1827.1,6382.0L89.5,62.6M-1161.8,6381.4L104.6,61.7M-496.5,6380.9L119.5,60.7M168.8,6380.4L134.2,59.8M834.1,6379.9L148.6,58.9M1499.5,6379.4L162.9,58.0M2164.8,6378.9L177.1,57.1M2830.1,6378.4L191.0,56.2M3495.4,6377.9L204.8,55.4M4160.7,6377.4L218.4,54.5M4826.1,6376.9L231.9,53.7M5491.4,6376.4L245.1,52.9M6156.7,6375.9L258.3,52.0M6822.0,6375.4L271.2,51.2M7487.3,6374.9L284.0,50.4M8152.7,6374.4L296.7,49.6M8818.0,6373.8L309.2,48.8M9483.3,6373.3L321.6,48.1M10148.6,6372.8L333.8,47.3M10813.9,6372.3L345.9,46.5M11479.3,6371.8L357.8,45.8M12144.6,6371.3L369.6,45.0M12809.9,6370.8L381.3,44.3M13475.2,6370.3L392.8,43.6M14140.5,6369.8L404.2,42.9M14805.9,6369.3L415.5,42.2M15471.2,6368.8L426.6,41.5M16136.5,6368.3L437.6,40.8M16801.8,6367.8L448.5,40.1M17467.1,6367.3L459.3,39.4M18132.4,6366.8L470.0,38.7M18797.8,6366.2L480.5,38.1M19463.1,6365.7L491.0,37.4M20128.4,6365.2L501.3,36.8M20793.7,6364.7L511.5,36.1M21459.0,6364.2L521.6,35.5M22124.4,6363.7L531.6,34.9M22789.7,6363.2L541.5,34.2M23455.0,6362.7L551.3,33.6M24120.3,6362.2L561.0,33.0M24785.6,6361.7L570.6,32.4M25451.0,6361.2L580.1,31.8M26116.3,6360.7L589.5,31.2M26781.6,6360.2L598.8,30.6M27446.9,6359.7L608.0,30.1M28112.2,6359.2L617.1,29.5M28777.6,6358.6L626.1,28.9M29442.9,6358.1L635.1,28.4M30108.2,6357.6L643.9,27.8M30773.5,6357.1L652.7,27.3M31438.8,6356.6L661.3,26.7M32104.2,6356.1L669.9,26.2M32769.5,6355.6L678.4,25.6M33434.8,6355.1L686.8,25.1M34100.1,6354.6L695.2,24.6M34765.4,6354.1L703.4,24.1M35430.8,6353.6L711.6,23.6M36096.1,6353.1L719.7,23.0M36761.4,6352.6L727.7,22.5M37426.7,6352.1L735.7,22.0M37661.1,6351.9L738.5,21.9" stroke="#525252" stroke-width="1" fill="none"/><line x1="4826.1" y1="6376.9" x2="231.9" y2="53.7" stroke="#a0a0a0" stroke-width="1.1"/><defs><linearGradient id="fade" x1="0" y1="0" x2="0" y2="1"><stop offset="0" stop-color="#000" stop-opacity="0.55"/><stop offset="1" stop-color="#000" stop-opacity="0"/></linearGradient></defs><rect x="0" y="1" width="805" height="320" fill="url(#fade)"/><line x1="707.8" y1="710" x2="808" y2="663.5" stroke="#9a9a9a" stroke-width="1"/><line x1="587" y1="543.6" x2="672.9" y2="514.2" stroke="#9a9a9a" stroke-width="1"/><line x1="552.3" y1="495.6" x2="633.3" y2="470.5" stroke="#9a9a9a" stroke-width="1"/><line x1="531.5" y1="467" x2="609.5" y2="444.2" stroke="#9a9a9a" stroke-width="1"/><line x1="502.8" y1="427.5" x2="576.6" y2="407.8" stroke="#9a9a9a" stroke-width="1"/><line x1="478.1" y1="393.3" x2="547.9" y2="376.1" stroke="#9a9a9a" stroke-width="1"/><line x1="464.3" y1="374.4" x2="532" y2="358.5" stroke="#9a9a9a" stroke-width="1"/><line x1="445.4" y1="348.3" x2="509.9" y2="334.2" stroke="#9a9a9a" stroke-width="1"/><line x1="405.7" y1="293.6" x2="463.4" y2="282.8" stroke="#9a9a9a" stroke-width="1"/><line x1="-181" y1="403.5" x2="-151.4" y2="357.8" stroke="#9a9a9a" stroke-width="1"/><line x1="-56.8" y1="380.3" x2="-39.7" y2="338.6" stroke="#9a9a9a" stroke-width="1"/><line x1="31" y1="363.8" x2="39.9" y2="324.9" stroke="#9a9a9a" stroke-width="1"/><line x1="120" y1="347.1" x2="121.1" y2="311" stroke="#9a9a9a" stroke-width="1"/><line x1="206.3" y1="330.9" x2="200.4" y2="297.4" stroke="#9a9a9a" stroke-width="1"/><line x1="257.1" y1="321.4" x2="247.2" y2="289.3" stroke="#9a9a9a" stroke-width="1"/><line x1="324.4" y1="308.8" x2="309.6" y2="278.6" stroke="#9a9a9a" stroke-width="1"/><line x1="405.7" y1="293.6" x2="385.4" y2="265.6" stroke="#9a9a9a" stroke-width="1"/><polygon points="808.5,656.2 811.0,656.0 814.1,657.1 816.9,659.4 818.7,662.1 818.9,664.6 817.6,666.2 815.0,666.5 811.8,665.3 809.0,663.0 807.3,660.3 807.1,657.8 808.5,656.2" fill="#000" stroke="#ff1a00" stroke-width="1.1"/><text x="813.0" y="663.4" font-size="6" fill="#ffe000" text-anchor="middle" font-family="Liberation Sans" font-weight="bold">A</text><polygon points="674.3,509.5 676.4,509.4 678.7,510.1 680.6,511.5 681.6,513.3 681.4,514.9 680.1,515.9 678.0,516.1 675.7,515.3 673.7,513.9 672.7,512.1 672.9,510.5 674.3,509.5" fill="#000" stroke="#ff1a00" stroke-width="1.1"/><text x="677.2" y="514.9" font-size="6" fill="#ffe000" text-anchor="middle" font-family="Liberation Sans" font-weight="bold">B</text><polygon points="634.9,466.5 636.8,466.3 638.9,467.0 640.6,468.2 641.5,469.7 641.2,471.1 639.9,472.0 637.9,472.1 635.8,471.5 634.1,470.2 633.3,468.7 633.6,467.3 634.9,466.5" fill="#000" stroke="#ff1a00" stroke-width="1.1"/><text x="637.4" y="471.4" font-size="6" fill="#ffe000" text-anchor="middle" font-family="Liberation Sans" font-weight="bold">C</text><polygon points="611.2,440.6 613.1,440.5 615.0,441.0 616.6,442.1 617.3,443.5 617.0,444.8 615.8,445.6 613.9,445.7 611.9,445.1 610.3,444.0 609.6,442.6 609.9,441.4 611.2,440.6" fill="#000" stroke="#ff1a00" stroke-width="1.1"/><text x="613.5" y="445.3" font-size="6" fill="#ffe000" text-anchor="middle" font-family="Liberation Sans" font-weight="bold">D</text><polygon points="578.4,404.7 580.1,404.6 581.9,405.1 583.3,406.0 583.9,407.2 583.5,408.3 582.3,409.0 580.6,409.1 578.7,408.6 577.4,407.6 576.8,406.4 577.2,405.4 578.4,404.7" fill="#000" stroke="#ff1a00" stroke-width="1.1"/><text x="580.3" y="409.0" font-size="6" fill="#ffe000" text-anchor="middle" font-family="Liberation Sans" font-weight="bold">E</text><polygon points="549.8,373.4 551.4,373.3 553.1,373.7 554.3,374.6 554.8,375.6 554.4,376.6 553.2,377.2 551.6,377.3 549.9,376.8 548.7,376.0 548.2,374.9 548.6,374.0 549.8,373.4" fill="#000" stroke="#ff1a00" stroke-width="1.1"/><text x="551.5" y="377.5" font-size="6" fill="#ffe000" text-anchor="middle" font-family="Liberation Sans" font-weight="bold">F</text><polygon points="533.8,355.9 535.4,355.9 537.0,356.3 538.1,357.0 538.6,358.0 538.2,358.9 537.0,359.4 535.4,359.5 533.8,359.1 532.6,358.3 532.2,357.4 532.6,356.5 533.8,355.9" fill="#000" stroke="#ff1a00" stroke-width="1.1"/><text x="535.4" y="359.9" font-size="6" fill="#ffe000" text-anchor="middle" font-family="Liberation Sans" font-weight="bold">G</text><polygon points="511.8,331.9 513.3,331.8 514.8,332.2 515.8,332.9 516.2,333.7 515.8,334.5 514.7,335.0 513.2,335.1 511.7,334.7 510.6,334.0 510.2,333.2 510.7,332.4 511.8,331.9" fill="#000" stroke="#ff1a00" stroke-width="1.1"/><text x="513.2" y="335.6" font-size="6" fill="#ffe000" text-anchor="middle" font-family="Liberation Sans" font-weight="bold">H</text><polygon points="465.3,281.0 466.6,280.9 467.8,281.2 468.7,281.8 468.9,282.4 468.5,283.0 467.5,283.4 466.1,283.5 464.9,283.2 464.0,282.6 463.8,282.0 464.2,281.4 465.3,281.0" fill="#000" stroke="#ff1a00" stroke-width="1.1"/><text x="466.4" y="284.4" font-size="6" fill="#ffe000" text-anchor="middle" font-family="Liberation Sans" font-weight="bold">I</text><polygon points="-148.8,353.9 -147.1,353.8 -146.2,354.2 -146.2,355.0 -147.3,355.9 -149.1,356.8 -151.1,357.4 -152.8,357.4 -153.7,357.0 -153.7,356.3 -152.6,355.3 -150.8,354.4 -148.8,353.9" fill="#000" stroke="#ff1a00" stroke-width="1.1"/><text x="-150.0" y="357.8" font-size="6" fill="#ffe000" text-anchor="middle" font-family="Liberation Sans" font-weight="bold">8</text><polygon points="-38.2,335.0 -36.6,335.0 -35.6,335.3 -35.4,336.0 -36.2,336.9 -37.7,337.7 -39.5,338.2 -41.1,338.3 -42.1,337.9 -42.2,337.2 -41.5,336.3 -40.0,335.5 -38.2,335.0" fill="#000" stroke="#ff1a00" stroke-width="1.1"/><text x="-38.8" y="338.8" font-size="6" fill="#ffe000" text-anchor="middle" font-family="Liberation Sans" font-weight="bold">7</text><polygon points="40.7,321.6 42.3,321.5 43.3,321.9 43.6,322.5 43.0,323.3 41.7,324.1 40.0,324.5 38.5,324.6 37.4,324.3 37.2,323.6 37.8,322.8 39.1,322.1 40.7,321.6" fill="#000" stroke="#ff1a00" stroke-width="1.1"/><text x="40.4" y="325.3" font-size="6" fill="#ffe000" text-anchor="middle" font-family="Liberation Sans" font-weight="bold">6</text><polygon points="121.2,307.9 122.7,307.8 123.8,308.1 124.1,308.7 123.7,309.5 122.6,310.2 121.1,310.6 119.6,310.7 118.6,310.4 118.2,309.8 118.6,309.0 119.7,308.3 121.2,307.9" fill="#000" stroke="#ff1a00" stroke-width="1.1"/><text x="121.2" y="311.4" font-size="6" fill="#ffe000" text-anchor="middle" font-family="Liberation Sans" font-weight="bold">5</text><polygon points="199.9,294.5 201.3,294.4 202.4,294.7 202.9,295.3 202.6,296.0 201.7,296.6 200.3,297.0 198.9,297.1 197.8,296.8 197.3,296.2 197.6,295.5 198.5,294.9 199.9,294.5" fill="#000" stroke="#ff1a00" stroke-width="1.1"/><text x="200.1" y="297.9" font-size="6" fill="#ffe000" text-anchor="middle" font-family="Liberation Sans" font-weight="bold">4</text><polygon points="246.4,286.5 247.8,286.5 248.9,286.8 249.4,287.3 249.3,288.0 248.4,288.6 247.1,289.0 245.8,289.1 244.6,288.8 244.1,288.2 244.3,287.5 245.1,286.9 246.4,286.5" fill="#000" stroke="#ff1a00" stroke-width="1.1"/><text x="246.8" y="290.0" font-size="6" fill="#ffe000" text-anchor="middle" font-family="Liberation Sans" font-weight="bold">3</text><polygon points="308.3,276.0 309.6,275.9 310.7,276.2 311.4,276.7 311.3,277.3 310.6,277.9 309.4,278.3 308.1,278.4 307.0,278.1 306.4,277.6 306.4,276.9 307.1,276.3 308.3,276.0" fill="#000" stroke="#ff1a00" stroke-width="1.1"/><text x="308.9" y="279.3" font-size="6" fill="#ffe000" text-anchor="middle" font-family="Liberation Sans" font-weight="bold">2</text><polygon points="383.6,263.1 384.9,263.1 386.0,263.3 386.7,263.8 386.8,264.4 386.3,265.0 385.2,265.3 383.9,265.4 382.8,265.1 382.1,264.6 382.0,264.0 382.6,263.5 383.6,263.1" fill="#000" stroke="#ff1a00" stroke-width="1.1"/><text x="384.4" y="266.4" font-size="6" fill="#ffe000" text-anchor="middle" font-family="Liberation Sans" font-weight="bold">1</text><polygon points="-878.2,1508.2 727.5,732.7 737.8,722.6 -955.9,1535.3" fill="#00ff4c" shape-rendering="crispEdges"/><line x1="-878.2" y1="1508.2" x2="727.5" y2="732.7" stroke="#0a6a2a" stroke-width="1"/><polygon points="-955.9,1535.3 -191,399.6 411.3,288.1 737.8,722.6" fill="#00ff4c" shape-rendering="crispEdges"/><path d="M37431.6,6352.1L34234.4,5764.4M35618.2,6353.4L19944.3,3314.5M33804.8,6354.8L14094.1,2311.5M31991.4,6356.2L10911.3,1765.9M30178.0,6357.6L8910.3,1422.8M28364.6,6359.0L7536.0,1187.2M26551.2,6360.3L6533.8,1015.4M24737.8,6361.7L5770.6,884.6M22924.4,6363.1L5170.0,781.6M21111.0,6364.5L4685.1,698.5M19297.6,6365.9L4285.3,629.9M17484.2,6367.2L3950.1,572.5M15670.8,6368.6L3665.0,523.6M13857.4,6370.0L3419.5,481.5M12044.0,6371.4L3206.0,444.9M10230.6,6372.8L3018.4,412.7M8417.3,6374.2L2852.5,384.3M6603.9,6375.5L2704.6,358.9M4790.5,6376.9L2572.0,336.2M2977.1,6378.3L2452.4,315.7M1163.7,6379.7L2343.9,297.1M-649.7,6381.1L2245.2,280.2M-2463.1,6382.4L2154.9,264.7M-4276.5,6383.8L2072.0,250.5M-6089.9,6385.2L1995.6,237.4M-7903.3,6386.6L1925.1,225.3M-9716.7,6388.0L1859.6,214.1M-11530.1,6389.3L1798.8,203.6M-13343.5,6390.7L1742.1,193.9M-15156.9,6392.1L1689.2,184.9M-16970.3,6393.5L1639.6,176.4M-18783.7,6394.9L1593.1,168.4M-20597.0,6396.3L1549.4,160.9M-22410.4,6397.6L1508.2,153.8M-24223.8,6399.0L1469.4,147.2M-26037.2,6400.4L1432.6,140.9M-27850.6,6401.8L1397.9,134.9M-29664.0,6403.2L1365.0,129.3M-31477.4,6404.5L1333.7,123.9M-23533.2,4632.6L1304.0,118.8M-14875.0,2907.9L1275.7,114.0M-10855.0,2107.1L1248.7,109.3M-8533.5,1644.6L1223.0,104.9M-7021.9,1343.5L1198.5,100.7M-5959.2,1131.8L1175.0,96.7M-5171.4,974.9L1152.5,92.9M-4564.0,853.9L1131.0,89.2M-4081.4,757.7L1110.4,85.6M-3688.7,679.5L1090.6,82.2M-3363.0,614.6L1071.6,79.0M-3088.4,559.9L1053.4,75.9M-2853.8,513.2L1035.8,72.8M-2651.1,472.8L1018.9,69.9M-2474.1,437.5L1002.6,67.2M-2318.3,406.5L986.9,64.5M-2180.0,379.0L971.8,61.9M-2056.5,354.4L957.2,59.4M-1945.5,332.3L943.1,56.9M-1845.3,312.3L929.4,54.6M-1754.2,294.1L916.3,52.3M-1671.2,277.6L903.5,50.2M-1595.2,262.5L891.2,48.0M-1525.3,248.5L879.2,46.0M-1460.8,235.7L867.6,44.0M-1401.2,223.8L856.4,42.1M-1345.9,212.8L845.5,40.2M-1294.4,202.5L834.9,38.4M-1246.4,193.0L824.7,36.6M-1201.5,184.0L814.7,34.9M-1159.4,175.7L805.0,33.3M-1119.9,167.8L795.6,31.7M-1082.8,160.4L786.5,30.1M-1047.7,153.4L777.6,28.6M-1014.7,146.8L768.9,27.1M-983.4,140.6L760.5,25.6M-953.8,134.7L752.3,24.2M-925.8,129.1L744.3,22.9M-905.9,125.1L738.5,21.9M-32431.9,6405.3L-905.9,125.1M-31766.5,6404.8L-875.2,123.2M-31101.2,6404.3L-845.2,121.3M-30435.9,6403.7L-815.7,119.5M-29770.6,6403.2L-786.7,117.7M-29105.3,6402.7L-758.3,115.9M-28439.9,6402.2L-730.3,114.1M-27774.6,6401.7L-702.8,112.4M-27109.3,6401.2L-675.8,110.7M-26444.0,6400.7L-649.3,109.0M-25778.7,6400.2L-623.2,107.4M-25113.3,6399.7L-597.6,105.8M-24448.0,6399.2L-572.4,104.2M-23782.7,6398.7L-547.6,102.6M-23117.4,6398.2L-523.2,101.1M-22452.1,6397.7L-499.2,99.6M-21786.7,6397.2L-475.6,98.1M-21121.4,6396.7L-452.4,96.7M-20456.1,6396.1L-429.5,95.2M-19790.8,6395.6L-407.0,93.8M-19125.5,6395.1L-384.9,92.4M-18460.1,6394.6L-363.1,91.1M-17794.8,6394.1L-341.6,89.7M-17129.5,6393.6L-320.5,88.4M-16464.2,6393.1L-299.7,87.1M-15798.9,6392.6L-279.2,85.8M-15133.5,6392.1L-259.0,84.5M-14468.2,6391.6L-239.1,83.3M-13802.9,6391.1L-219.5,82.0M-13137.6,6390.6L-200.2,80.8M-12472.3,6390.1L-181.2,79.6M-11806.9,6389.6L-162.4,78.5M-11141.6,6389.1L-144.0,77.3M-10476.3,6388.5L-125.7,76.1M-9811.0,6388.0L-107.8,75.0M-9145.7,6387.5L-90.1,73.9M-8480.3,6387.0L-72.6,72.8M-7815.0,6386.5L-55.4,71.7M-7149.7,6386.0L-38.4,70.7M-6484.4,6385.5L-21.6,69.6M-5819.1,6385.0L-5.1,68.6M-5153.7,6384.5L11.2,67.5M-4488.4,6384.0L27.3,66.5M-3823.1,6383.5L43.2,65.5M-3157.8,6383.0L58.8,64.6M-2492.5,6382.5L74.3,63.6M-1827.1,6382.0L89.5,62.6M-1161.8,6381.4L104.6,61.7M-496.5,6380.9L119.5,60.7M168.8,6380.4L134.2,59.8M834.1,6379.9L148.6,58.9M1499.5,6379.4L162.9,58.0M2164.8,6378.9L177.1,57.1M2830.1,6378.4L191.0,56.2M3495.4,6377.9L204.8,55.4M4160.7,6377.4L218.4,54.5M4826.1,6376.9L231.9,53.7M5491.4,6376.4L245.1,52.9M6156.7,6375.9L258.3,52.0M6822.0,6375.4L271.2,51.2M7487.3,6374.9L284.0,50.4M8152.7,6374.4L296.7,49.6M8818.0,6373.8L309.2,48.8M9483.3,6373.3L321.6,48.1M10148.6,6372.8L333.8,47.3M10813.9,6372.3L345.9,46.5M11479.3,6371.8L357.8,45.8M12144.6,6371.3L369.6,45.0M12809.9,6370.8L381.3,44.3M13475.2,6370.3L392.8,43.6M14140.5,6369.8L404.2,42.9M14805.9,6369.3L415.5,42.2M15471.2,6368.8L426.6,41.5M16136.5,6368.3L437.6,40.8M16801.8,6367.8L448.5,40.1M17467.1,6367.3L459.3,39.4M18132.4,6366.8L470.0,38.7M18797.8,6366.2L480.5,38.1M19463.1,6365.7L491.0,37.4M20128.4,6365.2L501.3,36.8M20793.7,6364.7L511.5,36.1M21459.0,6364.2L521.6,35.5M22124.4,6363.7L531.6,34.9M22789.7,6363.2L541.5,34.2M23455.0,6362.7L551.3,33.6M24120.3,6362.2L561.0,33.0M24785.6,6361.7L570.6,32.4M25451.0,6361.2L580.1,31.8M26116.3,6360.7L589.5,31.2M26781.6,6360.2L598.8,30.6M27446.9,6359.7L608.0,30.1M28112.2,6359.2L617.1,29.5M28777.6,6358.6L626.1,28.9M29442.9,6358.1L635.1,28.4M30108.2,6357.6L643.9,27.8M30773.5,6357.1L652.7,27.3M31438.8,6356.6L661.3,26.7M32104.2,6356.1L669.9,26.2M32769.5,6355.6L678.4,25.6M33434.8,6355.1L686.8,25.1M34100.1,6354.6L695.2,24.6M34765.4,6354.1L703.4,24.1M35430.8,6353.6L711.6,23.6M36096.1,6353.1L719.7,23.0M36761.4,6352.6L727.7,22.5M37426.7,6352.1L735.7,22.0M37661.1,6351.9L738.5,21.9" stroke="#8c8c8c" stroke-width="1" fill="none" clip-path="url(#raftclip)"/><g clip-path="url(#raftclip)"><line x1="-846.7" y1="1431.5" x2="707.8" y2="710" stroke="#8c8c8c" stroke-width="1"/><line x1="-516.5" y1="921.6" x2="587" y2="543.6" stroke="#8c8c8c" stroke-width="1"/><line x1="-440.2" y1="803.8" x2="552.3" y2="495.6" stroke="#8c8c8c" stroke-width="1"/><line x1="-397.7" y1="738.2" x2="531.5" y2="467" stroke="#8c8c8c" stroke-width="1"/><line x1="-342.7" y1="653.2" x2="502.8" y2="427.5" stroke="#8c8c8c" stroke-width="1"/><line x1="-297.9" y1="584.1" x2="478.1" y2="393.3" stroke="#8c8c8c" stroke-width="1"/><line x1="-274.2" y1="547.5" x2="464.3" y2="374.4" stroke="#8c8c8c" stroke-width="1"/><line x1="-242.8" y1="499" x2="445.4" y2="348.3" stroke="#8c8c8c" stroke-width="1"/><line x1="-181" y1="403.5" x2="405.7" y2="293.6" stroke="#8c8c8c" stroke-width="1"/><line x1="-846.7" y1="1431.5" x2="-181" y2="403.5" stroke="#8c8c8c" stroke-width="1"/><line x1="-405" y1="1226.5" x2="-56.8" y2="380.3" stroke="#8c8c8c" stroke-width="1"/><line x1="-138.7" y1="1102.9" x2="31" y2="363.8" stroke="#8c8c8c" stroke-width="1"/><line x1="99.9" y1="992.2" x2="120" y2="347.1" stroke="#8c8c8c" stroke-width="1"/><line x1="306.3" y1="896.4" x2="206.3" y2="330.9" stroke="#8c8c8c" stroke-width="1"/><line x1="417.6" y1="844.7" x2="257.1" y2="321.4" stroke="#8c8c8c" stroke-width="1"/><line x1="555.1" y1="780.9" x2="324.4" y2="308.8" stroke="#8c8c8c" stroke-width="1"/><line x1="707.8" y1="710" x2="405.7" y2="293.6" stroke="#8c8c8c" stroke-width="1"/></g><line x1="737.8" y1="722.6" x2="411.3" y2="288.1" stroke="#0a6a2a" stroke-width="1"/><line x1="-955.9" y1="1535.3" x2="737.8" y2="722.6" stroke="#0a6a2a" stroke-width="1"/><path class="k0" d="M112.4,589.3L115.8,481.5L292.9,438L320.6,528.5Z"/><path class="k0" d="M44.6,364.5L54.7,362.6L52.7,358.4L42.5,360.3Z"/><path class="k1" d="M44.6,364.5L54.7,362.6M42.5,360.3L44.6,364.5"/><path class="k0" d="M42.5,360.3L43.2,357L53.3,355.1L52.7,358.4Z"/><path class="k1" d="M42.5,360.3L43.2,357M43.2,357L53.3,355.1M52.7,358.4L42.5,360.3"/><path class="k0" d="M54.7,362.6L64.7,360.7L62.8,356.5L52.7,358.4Z"/><path class="k1" d="M54.7,362.6L64.7,360.7"/><path class="k0" d="M52.7,358.4L53.3,355.1L63.3,353.2L62.8,356.5Z"/><path class="k1" d="M53.3,355.1L63.3,353.2M62.8,356.5L52.7,358.4"/><path class="k0" d="M-13.2,375.4L-2.2,373.3L-39.3,307.9L-51.5,309.9Z"/><path class="k1" d="M-13.2,375.4L-2.2,373.3"/><path class="k0" d="M64.7,360.7L74.7,358.8L72.8,354.6L62.8,356.5Z"/><path class="k1" d="M64.7,360.7L74.7,358.8"/><path class="k0" d="M62.8,356.5L63.3,353.2L73.3,351.4L72.8,354.6Z"/><path class="k1" d="M63.3,353.2L73.3,351.4M72.8,354.6L62.8,356.5"/><path class="k0" d="M-2.2,373.3L8.7,371.3L-27.1,306L-39.3,307.9Z"/><path class="k1" d="M-2.2,373.3L8.7,371.3"/><path class="k0" d="M74.7,358.8L84.6,356.9L82.8,352.8L72.8,354.6Z"/><path class="k1" d="M74.7,358.8L84.6,356.9"/><path class="k0" d="M72.8,354.6L73.3,351.4L83.2,349.6L82.8,352.8Z"/><path class="k1" d="M73.3,351.4L83.2,349.6M82.8,352.8L72.8,354.6"/><path class="k0" d="M84.6,356.9L94.4,355.1L92.6,350.9L82.8,352.8Z"/><path class="k1" d="M84.6,356.9L94.4,355.1"/><path class="k0" d="M82.8,352.8L83.2,349.6L92.9,347.7L92.6,350.9Z"/><path class="k1" d="M83.2,349.6L92.9,347.7M92.6,350.9L82.8,352.8"/><path class="k0" d="M8.7,371.3L19.5,369.2L-15.1,304.1L-27.1,306Z"/><path class="k1" d="M8.7,371.3L19.5,369.2"/><path class="k0" d="M94.4,355.1L104.1,353.3L102.4,349.1L92.6,350.9Z"/><path class="k1" d="M94.4,355.1L104.1,353.3"/><path class="k0" d="M92.6,350.9L92.9,347.7L102.6,345.9L102.4,349.1Z"/><path class="k1" d="M92.9,347.7L102.6,345.9M102.4,349.1L92.6,350.9"/><path class="k0" d="M400.2,299.7L397.1,295.2L397.6,235.8L400.9,239.9Z"/><path class="k1" d="M400.2,299.7L397.1,295.2M397.1,295.2L397.6,235.8M400.9,239.9L400.2,299.7"/><path class="k0" d="M400.2,299.7L408.9,298L410.3,238.4L400.9,239.9Z"/><path class="k1" d="M400.2,299.7L408.9,298M408.9,298L410.3,238.4M400.9,239.9L400.2,299.7"/><path class="k0" d="M19.5,369.2L30.2,367.2L-3.2,302.2L-15.1,304.1Z"/><path class="k1" d="M19.5,369.2L30.2,367.2"/><path class="k0" d="M391,299.1L398.8,297.6L399.4,238L391,239.4Z"/><path class="k1" d="M391,299.1L398.8,297.6"/><path class="k0" d="M113.7,351.4L113.8,348.3L112.3,344.2L112.1,347.3Z"/><path class="k1" d="M113.7,351.4L113.8,348.3M113.8,348.3L112.3,344.2M112.1,347.3L113.7,351.4"/><path class="k0" d="M104.1,353.3L113.7,351.4L112.1,347.3L102.4,349.1Z"/><path class="k1" d="M104.1,353.3L113.7,351.4M113.7,351.4L112.1,347.3"/><path class="k0" d="M102.4,349.1L102.6,345.9L112.3,344.2L112.1,347.3Z"/><path class="k1" d="M102.6,345.9L112.3,344.2M112.3,344.2L112.1,347.3M112.1,347.3L102.4,349.1"/><path class="k0" d="M383.2,300.6L391,299.1L391,239.4L382.6,240.7Z"/><path class="k1" d="M383.2,300.6L391,299.1"/><path class="k0" d="M44.6,364.5L45.2,361.1L13.6,296.5L12.6,299.7Z"/><path class="k1" d="M44.6,364.5L45.2,361.1M45.2,361.1L13.6,296.5M12.6,299.7L44.6,364.5"/><path class="k0" d="M43.5,364.7L44.6,364.5L12.6,299.7L11.4,299.9Z"/><path class="k1" d="M43.5,364.7L44.6,364.5M44.6,364.5L12.6,299.7"/><path class="k0" d="M42.9,367.5L44.1,361.3L12.4,296.7L10.6,302.5Z"/><path class="k1" d="M42.9,367.5L44.1,361.3M44.1,361.3L12.4,296.7M10.6,302.5L42.9,367.5"/><path class="k0" d="M29.6,370.1L42.9,367.5L10.6,302.5L-4.2,304.9Z"/><path class="k1" d="M29.6,370.1L42.9,367.5M42.9,367.5L10.6,302.5M-4.2,304.9L29.6,370.1"/><path class="k0" d="M375.3,302L383.2,300.6L382.6,240.7L374.1,242.1Z"/><path class="k1" d="M375.3,302L383.2,300.6"/><path class="k0" d="M407.8,302.8L405,298.8L406.1,239.1L409.2,242.8Z"/><path class="k1" d="M407.8,302.8L405,298.8"/><path class="k0" d="M367.3,303.5L375.3,302L374.1,242.1L365.5,243.4Z"/><path class="k1" d="M367.3,303.5L375.3,302"/><path class="k0" d="M359.3,305.1L367.3,303.5L365.5,243.4L356.9,244.8Z"/><path class="k1" d="M359.3,305.1L367.3,303.5"/><polygon points="42.9,358.6 112.2,345.7 93.6,297.7 18.9,309.9" fill="#00ff4c" fill-opacity="0.55"/><polygon points="40.7,321.6 42.3,321.5 43.3,321.9 43.6,322.5 43.0,323.3 41.7,324.1 40.0,324.5 38.5,324.6 37.4,324.3 37.2,323.6 37.8,322.8 39.1,322.1 40.7,321.6" fill="#000" stroke="#ff1a00" stroke-width="1.1"/><text x="40.4" y="325.3" font-size="6" fill="#ffe000" text-anchor="middle" font-family="Liberation Sans" font-weight="bold">6</text><path class="k0" d="M351.3,306.6L359.3,305.1L356.9,244.8L348.2,246.2Z"/><path class="k1" d="M351.3,306.6L359.3,305.1"/><path class="k0" d="M410.8,307L407.8,302.8L409.2,242.8L412.4,246.5Z"/><path class="k1" d="M410.8,307L407.8,302.8"/><path class="k0" d="M343.1,308.1L351.3,306.6L348.2,246.2L339.4,247.6Z"/><path class="k1" d="M343.1,308.1L351.3,306.6"/><path class="k0" d="M334.9,309.7L343.1,308.1L339.4,247.6L330.5,249Z"/><path class="k1" d="M334.9,309.7L343.1,308.1"/><path class="k0" d="M317.4,313L325.6,311.4L320.4,250.6L311.5,252Z"/><path class="k1" d="M317.4,313L325.6,311.4"/><path class="k0" d="M326.7,313.6L324.4,308.8L319.1,248.3L321.5,252.6Z"/><path class="k1" d="M326.7,313.6L324.4,308.8M324.4,308.8L319.1,248.3M321.5,252.6L326.7,313.6"/><path class="k0" d="M326.7,313.6L336.1,311.8L331.7,251L321.5,252.6Z"/><path class="k1" d="M326.7,313.6L336.1,311.8M336.1,311.8L331.7,251M321.5,252.6L326.7,313.6"/><path class="k0" d="M18.5,311.5L29.5,309.7L23.8,297.9L12.6,299.7Z"/><path class="k1" d="M18.5,311.5L29.5,309.7M12.6,299.7L18.5,311.5"/><path class="k0" d="M309.1,314.5L317.4,313L311.5,252L302.5,253.5Z"/><path class="k1" d="M309.1,314.5L317.4,313"/><path class="k0" d="M126,349.1L135.8,347.3L113.3,283.6L102.5,285.3Z"/><path class="k1" d="M126,349.1L135.8,347.3"/><path class="k0" d="M413.8,311.2L410.8,307L412.4,246.5L415.7,250.4Z"/><path class="k1" d="M413.8,311.2L410.8,307"/><path class="k0" d="M126,351.7L126.1,346L102.8,282.5L102.3,287.8Z"/><path class="k1" d="M126,351.7L126.1,346M126.1,346L102.8,282.5M102.3,287.8L126,351.7"/><path class="k0" d="M113.6,354.1L126,351.7L102.3,287.8L88.7,290Z"/><path class="k1" d="M113.6,354.1L126,351.7M126,351.7L102.3,287.8M88.7,290L113.6,354.1"/><path class="k0" d="M29.5,309.7L40.4,307.9L34.9,296.1L23.8,297.9Z"/><path class="k1" d="M29.5,309.7L40.4,307.9"/><path class="k0" d="M300.7,316.1L309.1,314.5L302.5,253.5L293.4,254.9Z"/><path class="k1" d="M300.7,316.1L309.1,314.5"/><path class="k0" d="M135.8,347.3L145.5,345.4L123.9,281.9L113.3,283.6Z"/><path class="k1" d="M135.8,347.3L145.5,345.4"/><path class="k0" d="M292.3,317.7L300.7,316.1L293.4,254.9L284.3,256.4Z"/><path class="k1" d="M292.3,317.7L300.7,316.1"/><path class="k0" d="M145.5,345.4L155.1,343.6L134.5,280.3L123.9,281.9Z"/><path class="k1" d="M145.5,345.4L155.1,343.6"/><path class="k0" d="M40.4,307.9L51.2,306.1L45.9,294.4L34.9,296.1Z"/><path class="k1" d="M40.4,307.9L51.2,306.1"/><path class="k0" d="M283.8,319.3L292.3,317.7L284.3,256.4L275.1,257.9Z"/><path class="k1" d="M283.8,319.3L292.3,317.7"/><path class="k0" d="M155.1,343.6L164.7,341.8L145,278.6L134.5,280.3Z"/><path class="k1" d="M155.1,343.6L164.7,341.8"/><path class="k0" d="M275.3,320.9L283.8,319.3L275.1,257.9L265.8,259.3Z"/><path class="k1" d="M275.3,320.9L283.8,319.3"/><path class="k0" d="M164.7,341.8L174.1,340L155.3,276.9L145,278.6Z"/><path class="k1" d="M164.7,341.8L174.1,340"/><path class="k0" d="M266.6,322.6L275.3,320.9L265.8,259.3L256.4,260.8Z"/><path class="k1" d="M266.6,322.6L275.3,320.9"/><path class="k0" d="M174.1,340L183.5,338.3L165.6,275.3L155.3,276.9Z"/><path class="k1" d="M174.1,340L183.5,338.3"/><path class="k0" d="M51.2,306.1L61.9,304.4L56.9,292.6L45.9,294.4Z"/><path class="k1" d="M51.2,306.1L61.9,304.4"/><path class="k0" d="M10.4,321.2L12,315.9L5.7,303.3L3.9,308.5Z"/><path class="k1" d="M10.4,321.2L12,315.9"/><path class="k0" d="M257.9,324.2L266.6,322.6L256.4,260.8L246.9,262.3Z"/><path class="k1" d="M257.9,324.2L266.6,322.6"/><path class="k0" d="M183.5,338.3L192.8,336.5L175.8,273.7L165.6,275.3Z"/><path class="k1" d="M183.5,338.3L192.8,336.5"/><path class="k0" d="M192.8,336.5L202,334.8L185.9,272.1L175.8,273.7Z"/><path class="k1" d="M192.8,336.5L202,334.8"/><path class="k0" d="M202,334.8L211.2,333L195.9,270.5L185.9,272.1Z"/><path class="k1" d="M202,334.8L211.2,333"/><path class="k0" d="M238.1,327.9L247,326.3L235,264.2L225.3,265.8Z"/><path class="k1" d="M238.1,327.9L247,326.3"/><path class="k0" d="M211.2,333L220.2,331.3L205.8,268.9L195.9,270.5Z"/><path class="k1" d="M211.2,333L220.2,331.3"/><path class="k0" d="M229.2,329.6L238.1,327.9L225.3,265.8L215.6,267.3Z"/><path class="k1" d="M229.2,329.6L238.1,327.9"/><path class="k0" d="M220.2,331.3L229.2,329.6L215.6,267.3L205.8,268.9Z"/><path class="k1" d="M220.2,331.3L229.2,329.6"/><path class="k0" d="M61.9,304.4L72.5,302.6L67.7,290.9L56.9,292.6Z"/><path class="k1" d="M61.9,304.4L72.5,302.6"/><path class="k0" d="M416.9,315.5L413.8,311.2L415.7,250.4L419.1,254.4Z"/><path class="k1" d="M416.9,315.5L413.8,311.2"/><path class="k0" d="M247.7,328.6L246.2,323.5L234.2,261.7L235.6,266.4Z"/><path class="k1" d="M247.7,328.6L246.2,323.5M246.2,323.5L234.2,261.7M235.6,266.4L247.7,328.6"/><path class="k0" d="M247.7,328.6L258.7,326.5L247.6,264.5L235.6,266.4Z"/><path class="k1" d="M247.7,328.6L258.7,326.5M258.7,326.5L247.6,264.5M235.6,266.4L247.7,328.6"/><path class="k0" d="M72.5,302.6L83.1,300.9L78.4,289.2L67.7,290.9Z"/><path class="k1" d="M72.5,302.6L83.1,300.9"/><path class="k0" d="M93.5,299.2L93.8,296.2L89.3,284.6L89,287.5Z"/><path class="k1" d="M93.5,299.2L93.8,296.2M93.8,296.2L89.3,284.6M89,287.5L93.5,299.2"/><path class="k0" d="M83.1,300.9L93.5,299.2L89,287.5L78.4,289.2Z"/><path class="k1" d="M83.1,300.9L93.5,299.2M93.5,299.2L89,287.5"/><path class="k0" d="M8.7,326.6L10.4,321.2L3.9,308.5L2.2,313.9Z"/><path class="k1" d="M8.7,326.6L10.4,321.2"/><path class="k0" d="M420.1,320L416.9,315.5L419.1,254.4L422.5,258.4Z"/><path class="k1" d="M420.1,320L416.9,315.5"/><path class="k0" d="M7,332.2L8.7,326.6L2.2,313.9L0.3,319.4Z"/><path class="k1" d="M7,332.2L8.7,326.6"/><path class="k0" d="M324.8,268.5L322.5,264.3L321.5,252.6L323.8,256.7Z"/><path class="k1" d="M324.8,268.5L322.5,264.3"/><path class="k0" d="M423.3,324.5L420.1,320L422.5,258.4L426,262.6Z"/><path class="k1" d="M423.3,324.5L420.1,320"/><path class="k0" d="M106.6,304.9L106.9,300.1L102.3,287.8L101.9,292.5Z"/><path class="k1" d="M106.6,304.9L106.9,300.1"/><path class="k0" d="M5.3,338L7,332.2L0.3,319.4L-1.6,325.1Z"/><path class="k1" d="M5.3,338L7,332.2"/><path class="k0" d="M426.6,329.1L423.3,324.5L426,262.6L429.7,266.8Z"/><path class="k1" d="M426.6,329.1L423.3,324.5"/><path class="k0" d="M327.1,272.7L324.8,268.5L323.8,256.7L326.1,260.8Z"/><path class="k1" d="M327.1,272.7L324.8,268.5"/><path class="k0" d="M245.1,281.6L243.8,277.4L241.6,265.5L242.9,269.6Z"/><path class="k1" d="M245.1,281.6L243.8,277.4"/><path class="k0" d="M106.2,309.8L106.6,304.9L101.9,292.5L101.5,297.3Z"/><path class="k1" d="M106.2,309.8L106.6,304.9"/><path class="k0" d="M3.5,343.9L5.3,338L-1.6,325.1L-3.5,330.9Z"/><path class="k1" d="M3.5,343.9L5.3,338"/><path class="k0" d="M430,333.9L426.6,329.1L429.7,266.8L433.4,271.2Z"/><path class="k1" d="M430,333.9L426.6,329.1"/><path class="k0" d="M329.5,277L327.1,272.7L326.1,260.8L328.5,265.1Z"/><path class="k1" d="M329.5,277L327.1,272.7"/><path class="k0" d="M105.9,314.9L106.2,309.8L101.5,297.3L101.1,302.3Z"/><path class="k1" d="M105.9,314.9L106.2,309.8"/><path class="k0" d="M246.5,286L245.1,281.6L242.9,269.6L244.2,273.9Z"/><path class="k1" d="M246.5,286L245.1,281.6"/><path class="k0" d="M1.6,350L3.5,343.9L-3.5,330.9L-5.5,336.9Z"/><path class="k1" d="M1.6,350L3.5,343.9"/><path class="k0" d="M433.5,338.7L430,333.9L433.4,271.2L437.2,275.7Z"/><path class="k1" d="M433.5,338.7L430,333.9"/><path class="k0" d="M331.9,281.5L329.5,277L328.5,265.1L331,269.4Z"/><path class="k1" d="M331.9,281.5L329.5,277"/><path class="k0" d="M105.5,320L105.9,314.9L101.1,302.3L100.7,307.4Z"/><path class="k1" d="M105.5,320L105.9,314.9"/><path class="k0" d="M247.8,290.4L246.5,286L244.2,273.9L245.6,278.2Z"/><path class="k1" d="M247.8,290.4L246.5,286"/><path class="k0" d="M-0.3,356.3L1.6,350L-5.5,336.9L-7.5,343.1Z"/><path class="k1" d="M-0.3,356.3L1.6,350"/><path class="k0" d="M437,343.7L433.5,338.7L437.2,275.7L441.1,280.3Z"/><path class="k1" d="M437,343.7L433.5,338.7"/><path class="k0" d="M334.4,286L331.9,281.5L331,269.4L333.5,273.9Z"/><path class="k1" d="M334.4,286L331.9,281.5"/><path class="k0" d="M105.1,325.3L105.5,320L100.7,307.4L100.2,312.6Z"/><path class="k1" d="M105.1,325.3L105.5,320"/><path class="k0" d="M249.2,294.9L247.8,290.4L245.6,278.2L247,282.7Z"/><path class="k1" d="M249.2,294.9L247.8,290.4"/><path class="k0" d="M-2.3,362.7L-0.3,356.3L-7.5,343.1L-9.6,349.5Z"/><path class="k1" d="M-2.3,362.7L-0.3,356.3"/><path class="k0" d="M440.6,348.7L437,343.7L441.1,280.3L445.1,285Z"/><path class="k1" d="M440.6,348.7L437,343.7"/><path class="k0" d="M104.8,330.8L105.1,325.3L100.2,312.6L99.8,318Z"/><path class="k1" d="M104.8,330.8L105.1,325.3"/><path class="k0" d="M336.9,290.7L334.4,286L333.5,273.9L336.1,278.5Z"/><path class="k1" d="M336.9,290.7L334.4,286"/><path class="k0" d="M250.7,299.6L249.2,294.9L247,282.7L248.4,287.3Z"/><path class="k1" d="M250.7,299.6L249.2,294.9"/><path class="k0" d="M-4.3,369.4L-2.3,362.7L-9.6,349.5L-11.8,356.1Z"/><path class="k1" d="M-4.3,369.4L-2.3,362.7"/><path class="k0" d="M433.3,355.9L430,351.1L433.5,287.1L437.2,291.6Z"/><path class="k1" d="M433.3,355.9L430,351.1M430,351.1L433.5,287.1M437.2,291.6L433.3,355.9"/><path class="k0" d="M433.3,355.9L448.5,352.5L453.7,288.5L437.2,291.6Z"/><path class="k1" d="M433.3,355.9L448.5,352.5M448.5,352.5L453.7,288.5M437.2,291.6L433.3,355.9"/><path class="k0" d="M104.4,336.4L104.8,330.8L99.8,318L99.3,323.5Z"/><path class="k1" d="M104.4,336.4L104.8,330.8"/><path class="k0" d="M252.1,304.4L250.7,299.6L248.4,287.3L249.9,292Z"/><path class="k1" d="M252.1,304.4L250.7,299.6"/><path class="k0" d="M339.5,295.5L336.9,290.7L336.1,278.5L338.7,283.2Z"/><path class="k1" d="M339.5,295.5L336.9,290.7"/><path class="k0" d="M447.7,358.7L444,353.5L448.8,289.4L452.9,294.2Z"/><path class="k1" d="M447.7,358.7L444,353.5"/><path class="k0" d="M-6.4,376.2L-4.3,369.4L-11.8,356.1L-14.1,362.8Z"/><path class="k1" d="M-6.4,376.2L-4.3,369.4"/><path class="k0" d="M21.1,451L23.7,438.4L-16.4,369.8L-20.4,381.9Z"/><path class="k1" d="M21.1,451L23.7,438.4M23.7,438.4L-16.4,369.8M-20.4,381.9L21.1,451"/><path class="k0" d="M10.5,453.3L21.1,451L-20.4,381.9L-32.4,384.2Z"/><path class="k1" d="M10.5,453.3L21.1,451M21.1,451L-20.4,381.9M-32.4,384.2L10.5,453.3"/><path class="k0" d="M104,342.1L104.4,336.4L99.3,323.5L98.9,329.1Z"/><path class="k1" d="M104,342.1L104.4,336.4"/><path class="k0" d="M253.6,309.3L252.1,304.4L249.9,292L251.4,296.8Z"/><path class="k1" d="M253.6,309.3L252.1,304.4"/><path class="k0" d="M342.2,300.4L339.5,295.5L338.7,283.2L341.4,288Z"/><path class="k1" d="M342.2,300.4L339.5,295.5"/><path class="k0" d="M451.5,364L447.7,358.7L452.9,294.2L457.1,299.2Z"/><path class="k1" d="M451.5,364L447.7,358.7"/><path class="k0" d="M103.6,348L104,342.1L98.9,329.1L98.4,335Z"/><path class="k1" d="M103.6,348L104,342.1"/><path class="k0" d="M455.4,369.5L451.5,364L457.1,299.2L461.5,304.3Z"/><path class="k1" d="M455.4,369.5L451.5,364"/><path class="k0" d="M255.2,314.3L253.6,309.3L251.4,296.8L252.9,301.7Z"/><path class="k1" d="M255.2,314.3L253.6,309.3"/><path class="k0" d="M345,305.4L342.2,300.4L341.4,288L344.2,293Z"/><path class="k1" d="M345,305.4L342.2,300.4"/><path class="k0" d="M425.8,304.3L435.2,302.5L435.9,290.1L426.4,291.9Z"/><path class="k1" d="M425.8,304.3L435.2,302.5"/><path class="k0" d="M416.4,306.2L425.8,304.3L426.4,291.9L416.8,293.7Z"/><path class="k1" d="M416.4,306.2L425.8,304.3"/><path class="k0" d="M355.8,373.1L353.5,368.4L350,303.3L352.5,307.6Z"/><path class="k1" d="M355.8,373.1L353.5,368.4M353.5,368.4L350,303.3M352.5,307.6L355.8,373.1"/><path class="k0" d="M355.8,373.1L370.2,369.9L368.3,304.6L352.5,307.6Z"/><path class="k1" d="M355.8,373.1L370.2,369.9M370.2,369.9L368.3,304.6M352.5,307.6L355.8,373.1"/><path class="k0" d="M459.4,375L455.4,369.5L461.5,304.3L465.9,309.5Z"/><path class="k1" d="M459.4,375L455.4,369.5"/><path class="k0" d="M103.2,354.1L103.6,348L98.4,335L97.9,341Z"/><path class="k1" d="M103.2,354.1L103.6,348"/><path class="k0" d="M406.8,308L416.4,306.2L416.8,293.7L407.1,295.5Z"/><path class="k1" d="M406.8,308L416.4,306.2"/><path class="k0" d="M256.8,319.4L255.2,314.3L252.9,301.7L254.5,306.8Z"/><path class="k1" d="M256.8,319.4L255.2,314.3"/><path class="k0" d="M347.8,310.6L345,305.4L344.2,293L347.1,298.1Z"/><path class="k1" d="M347.8,310.6L345,305.4"/><path class="k0" d="M397.2,309.9L406.8,308L407.1,295.5L397.3,297.4Z"/><path class="k1" d="M397.2,309.9L406.8,308"/><path class="k0" d="M387.5,311.8L397.2,309.9L397.3,297.4L387.4,299.3Z"/><path class="k1" d="M387.5,311.8L397.2,309.9"/><path class="k0" d="M463.5,380.8L459.4,375L465.9,309.5L470.5,314.9Z"/><path class="k1" d="M463.5,380.8L459.4,375"/><path class="k0" d="M102.7,360.3L103.2,354.1L97.9,341L97.3,347.1Z"/><path class="k1" d="M102.7,360.3L103.2,354.1"/><path class="k0" d="M258.4,324.7L256.8,319.4L254.5,306.8L256.1,312Z"/><path class="k1" d="M258.4,324.7L256.8,319.4"/><path class="k0" d="M377.6,313.7L387.5,311.8L387.4,299.3L377.4,301.1Z"/><path class="k1" d="M377.6,313.7L387.5,311.8"/><path class="k0" d="M350.7,315.9L347.8,310.6L347.1,298.1L350,303.3Z"/><path class="k1" d="M350.7,315.9L347.8,310.6"/><path class="k0" d="M367.7,315.6L377.6,313.7L377.4,301.1L367.3,303Z"/><path class="k1" d="M367.7,315.6L377.6,313.7"/><path class="k0" d="M467.7,386.6L463.5,380.8L470.5,314.9L475.2,320.4Z"/><path class="k1" d="M467.7,386.6L463.5,380.8"/><path class="k0" d="M102.3,366.7L102.7,360.3L97.3,347.1L96.8,353.5Z"/><path class="k1" d="M102.3,366.7L102.7,360.3"/><path class="k0" d="M260.1,330.1L258.4,324.7L256.1,312L257.8,317.3Z"/><path class="k1" d="M260.1,330.1L258.4,324.7"/><path class="k0" d="M471.9,392.6L467.7,386.6L475.2,320.4L480,326.1Z"/><path class="k1" d="M471.9,392.6L467.7,386.6"/><path class="k0" d="M101.8,373.4L102.3,366.7L96.8,353.5L96.3,360Z"/><path class="k1" d="M101.8,373.4L102.3,366.7"/><path class="k0" d="M356.1,325.7L353.1,320.3L352.5,307.6L355.5,313Z"/><path class="k1" d="M356.1,325.7L353.1,320.3"/><path class="k0" d="M261.8,335.7L260.1,330.1L257.8,317.3L259.5,322.8Z"/><path class="k1" d="M261.8,335.7L260.1,330.1"/><path class="k0" d="M124.2,454.1L124.6,435.3L95.7,366.8L94.2,384.9Z"/><path class="k1" d="M124.2,454.1L124.6,435.3M124.6,435.3L95.7,366.8M94.2,384.9L124.2,454.1"/><path class="k0" d="M115.3,456.2L124.2,454.1L94.2,384.9L84.1,386.9Z"/><path class="k1" d="M115.3,456.2L124.2,454.1M124.2,454.1L94.2,384.9M84.1,386.9L115.3,456.2"/><path class="k0" d="M476.3,398.8L471.9,392.6L480,326.1L485,331.9Z"/><path class="k1" d="M476.3,398.8L471.9,392.6"/><path class="k0" d="M-20.8,423.6L-6.4,420.6L-14.8,406.9L-29.7,409.8Z"/><path class="k1" d="M-20.8,423.6L-6.4,420.6M-29.7,409.8L-20.8,423.6"/><path class="k0" d="M101.3,380.2L101.8,373.4L96.3,360L95.7,366.8Z"/><path class="k1" d="M101.3,380.2L101.8,373.4"/><path class="k0" d="M359.1,331.3L356.1,325.7L355.5,313L358.5,318.4Z"/><path class="k1" d="M359.1,331.3L356.1,325.7"/><path class="k0" d="M263.5,341.4L261.8,335.7L259.5,322.8L261.3,328.5Z"/><path class="k1" d="M263.5,341.4L261.8,335.7"/><path class="k0" d="M480.9,405.2L476.3,398.8L485,331.9L490.1,337.9Z"/><path class="k1" d="M480.9,405.2L476.3,398.8"/><path class="k0" d="M-6.4,420.6L7.9,417.6L-0.2,403.9L-14.8,406.9Z"/><path class="k1" d="M-6.4,420.6L7.9,417.6"/><path class="k0" d="M278.4,417.9L273.7,401.6L261.9,334.5L266.7,350.1Z"/><path class="k1" d="M278.4,417.9L273.7,401.6M273.7,401.6L261.9,334.5M266.7,350.1L278.4,417.9"/><path class="k0" d="M278.4,417.9L286.1,416.1L275.3,348.4L266.7,350.1Z"/><path class="k1" d="M278.4,417.9L286.1,416.1M286.1,416.1L275.3,348.4M266.7,350.1L278.4,417.9"/><path class="k0" d="M7.9,417.6L22,414.7L14.3,401L-0.2,403.9Z"/><path class="k1" d="M7.9,417.6L22,414.7"/><path class="k0" d="M101.1,383.9L114.6,381.1L109.2,367.7L95.4,370.4Z"/><path class="k1" d="M101.1,383.9L114.6,381.1M95.4,370.4L101.1,383.9"/><path class="k0" d="M114.6,381.1L127.9,378.4L122.8,365.1L109.2,367.7Z"/><path class="k1" d="M114.6,381.1L127.9,378.4"/><path class="k0" d="M485.5,411.7L480.9,405.2L490.1,337.9L495.3,344.1Z"/><path class="k1" d="M485.5,411.7L480.9,405.2"/><path class="k0" d="M362.2,337L359.1,331.3L358.5,318.4L361.7,324.1Z"/><path class="k1" d="M362.2,337L359.1,331.3"/><path class="k0" d="M22,414.7L36,411.8L28.6,398.1L14.3,401Z"/><path class="k1" d="M22,414.7L36,411.8"/><path class="k0" d="M265.4,347.3L263.5,341.4L261.3,328.5L263.1,334.3Z"/><path class="k1" d="M265.4,347.3L263.5,341.4"/><path class="k0" d="M127.9,378.4L141.1,375.8L136.3,362.4L122.8,365.1Z"/><path class="k1" d="M127.9,378.4L141.1,375.8"/><path class="k0" d="M36,411.8L49.8,408.9L42.7,395.3L28.6,398.1Z"/><path class="k1" d="M36,411.8L49.8,408.9"/><path class="k0" d="M141.1,375.8L154.2,373.2L149.6,359.8L136.3,362.4Z"/><path class="k1" d="M141.1,375.8L154.2,373.2"/><path class="k0" d="M154.2,373.2L167.1,370.6L162.8,357.2L149.6,359.8Z"/><path class="k1" d="M154.2,373.2L167.1,370.6"/><path class="k0" d="M49.8,408.9L63.4,406.1L56.7,392.4L42.7,395.3Z"/><path class="k1" d="M49.8,408.9L63.4,406.1"/><path class="k0" d="M167.1,370.6L179.8,368L175.8,354.7L162.8,357.2Z"/><path class="k1" d="M167.1,370.6L179.8,368"/><path class="k0" d="M179.8,368L192.4,365.4L188.7,352.2L175.8,354.7Z"/><path class="k1" d="M179.8,368L192.4,365.4"/><path class="k0" d="M490.3,418.3L485.5,411.7L495.3,344.1L500.7,350.5Z"/><path class="k1" d="M490.3,418.3L485.5,411.7"/><path class="k0" d="M192.4,365.4L204.9,362.9L201.4,349.7L188.7,352.2Z"/><path class="k1" d="M192.4,365.4L204.9,362.9"/><path class="k0" d="M253.4,353.1L265.2,350.8L262.9,337.7L250.8,340Z"/><path class="k1" d="M253.4,353.1L265.2,350.8"/><path class="k0" d="M204.9,362.9L217.2,360.4L214,347.2L201.4,349.7Z"/><path class="k1" d="M204.9,362.9L217.2,360.4"/><path class="k0" d="M241.4,355.5L253.4,353.1L250.8,340L238.7,342.4Z"/><path class="k1" d="M241.4,355.5L253.4,353.1"/><path class="k0" d="M217.2,360.4L229.4,358L226.4,344.8L214,347.2Z"/><path class="k1" d="M217.2,360.4L229.4,358"/><path class="k0" d="M229.4,358L241.4,355.5L238.7,342.4L226.4,344.8Z"/><path class="k1" d="M229.4,358L241.4,355.5"/><path class="k0" d="M365.4,342.8L362.2,337L361.7,324.1L365,329.8Z"/><path class="k1" d="M365.4,342.8L362.2,337"/><path class="k0" d="M63.4,406.1L76.9,403.3L70.5,389.7L56.7,392.4Z"/><path class="k1" d="M63.4,406.1L76.9,403.3"/><path class="k0" d="M76.9,403.3L90.2,400.5L84.1,386.9L70.5,389.7Z"/><path class="k1" d="M76.9,403.3L90.2,400.5"/><path class="k0" d="M355,345.4L365.6,343.2L365.2,330.2L354.4,332.4Z"/><path class="k1" d="M355,345.4L365.6,343.2M365.6,343.2L365.2,330.2"/><path class="k0" d="M495.2,425.2L490.3,418.3L500.7,350.5L506.3,357Z"/><path class="k1" d="M495.2,425.2L490.3,418.3"/><path class="k0" d="M344.3,347.7L355,345.4L354.4,332.4L343.4,334.6Z"/><path class="k1" d="M344.3,347.7L355,345.4"/><path class="k0" d="M333.4,349.9L344.3,347.7L343.4,334.6L332.4,336.9Z"/><path class="k1" d="M333.4,349.9L344.3,347.7"/><path class="k0" d="M368.7,348.8L365.4,342.8L365,329.8L368.3,335.8Z"/><path class="k1" d="M368.7,348.8L365.4,342.8"/><path class="k0" d="M322.4,352.2L333.4,349.9L332.4,336.9L321.2,339.1Z"/><path class="k1" d="M322.4,352.2L333.4,349.9"/><path class="k0" d="M99.6,404.7L100.1,398.5L94.2,384.9L93.6,391.1Z"/><path class="k1" d="M99.6,404.7L100.1,398.5"/><path class="k0" d="M311.4,354.5L322.4,352.2L321.2,339.1L309.9,341.4Z"/><path class="k1" d="M311.4,354.5L322.4,352.2"/><path class="k0" d="M300.2,356.9L311.4,354.5L309.9,341.4L298.5,343.7Z"/><path class="k1" d="M300.2,356.9L311.4,354.5"/><path class="k0" d="M288.8,359.2L300.2,356.9L298.5,343.7L286.9,346Z"/><path class="k1" d="M288.8,359.2L300.2,356.9"/><path class="k0" d="M-15.4,453.9L0,450.4L-8.8,436.5L-24.7,439.9Z"/><path class="k1" d="M-15.4,453.9L0,450.4"/><path class="k0" d="M488.1,435.9L483,428.4L492.9,360.1L498.7,367.3Z"/><path class="k1" d="M488.1,435.9L483,428.4M483,428.4L492.9,360.1M498.7,367.3L488.1,435.9"/><path class="k0" d="M488.1,435.9L505.5,431.2L517.9,362.8L498.7,367.3Z"/><path class="k1" d="M488.1,435.9L505.5,431.2M505.5,431.2L517.9,362.8M498.7,367.3L488.1,435.9"/><path class="k0" d="M277.4,361.6L276.1,357.6L274,344.4L275.3,348.4Z"/><path class="k1" d="M277.4,361.6L276.1,357.6M276.1,357.6L274,344.4M275.3,348.4L277.4,361.6"/><path class="k0" d="M277.4,361.6L288.8,359.2L286.9,346L275.3,348.4Z"/><path class="k1" d="M277.4,361.6L288.8,359.2M275.3,348.4L277.4,361.6"/><path class="k0" d="M372.1,355L368.7,348.8L368.3,335.8L371.7,341.9Z"/><path class="k1" d="M372.1,355L368.7,348.8"/><path class="k0" d="M99.2,411.1L99.6,404.7L93.6,391.1L93.1,397.4Z"/><path class="k1" d="M99.2,411.1L99.6,404.7"/><path class="k0" d="M0,450.4L15.3,447.1L6.9,433.2L-8.8,436.5Z"/><path class="k1" d="M0,450.4L15.3,447.1"/><path class="k0" d="M505.6,439.8L500.4,432.6L512.3,364.1L518.2,371.1Z"/><path class="k1" d="M505.6,439.8L500.4,432.6"/><path class="k0" d="M15.3,447.1L30.4,443.7L22.4,429.8L6.9,433.2Z"/><path class="k1" d="M15.3,447.1L30.4,443.7"/><path class="k0" d="M271.8,368.4L270.2,363.1L267.9,349.8L269.6,355.1Z"/><path class="k1" d="M271.8,368.4L270.2,363.1"/><path class="k0" d="M-0.4,567.4L2,555.7L-51.3,485.6L-55.2,497.4Z"/><path class="k1" d="M-0.4,567.4L2,555.7M2,555.7L-51.3,485.6M-55.2,497.4L-0.4,567.4"/><path class="k0" d="M-16.8,571.8L-0.4,567.4L-55.2,497.4L-74.3,501.9Z"/><path class="k1" d="M-16.8,571.8L-0.4,567.4M-0.4,567.4L-55.2,497.4M-74.3,501.9L-16.8,571.8"/><path class="k0" d="M98.7,417.6L99.2,411.1L93.1,397.4L92.6,403.9Z"/><path class="k1" d="M98.7,417.6L99.2,411.1"/><path class="k0" d="M375.6,361.4L372.1,355L371.7,341.9L375.3,348.2Z"/><path class="k1" d="M375.6,361.4L372.1,355"/><path class="k0" d="M30.4,443.7L45.4,440.4L37.7,426.6L22.4,429.8Z"/><path class="k1" d="M30.4,443.7L45.4,440.4"/><path class="k0" d="M510.9,447.3L505.6,439.8L518.2,371.1L524.4,378.3Z"/><path class="k1" d="M510.9,447.3L505.6,439.8"/><path class="k0" d="M45.4,440.4L60.1,437.2L52.8,423.3L37.7,426.6Z"/><path class="k1" d="M45.4,440.4L60.1,437.2"/><path class="k0" d="M273.5,373.9L271.8,368.4L269.6,355.1L271.3,360.5Z"/><path class="k1" d="M273.5,373.9L271.8,368.4"/><path class="k0" d="M98.3,424.4L98.7,417.6L92.6,403.9L92,410.6Z"/><path class="k1" d="M98.3,424.4L98.7,417.6M92,410.6L98.3,424.4"/><path class="k0" d="M89.4,426.3L98.3,424.4L92,410.6L82.9,412.5Z"/><path class="k1" d="M89.4,426.3L98.3,424.4M98.3,424.4L92,410.6M82.9,412.5L89.4,426.3"/><path class="k0" d="M60.1,437.2L74.6,434L67.7,420.1L52.8,423.3Z"/><path class="k1" d="M60.1,437.2L74.6,434"/><path class="k0" d="M516.4,455L510.9,447.3L524.4,378.3L530.7,385.7Z"/><path class="k1" d="M516.4,455L510.9,447.3"/><path class="k0" d="M379.2,368L375.6,361.4L375.3,348.2L378.9,354.7Z"/><path class="k1" d="M379.2,368L375.6,361.4"/><path class="k0" d="M89,430.8L89.5,425.4L83,411.6L82.4,417Z"/><path class="k1" d="M89,430.8L89.5,425.4M89.5,425.4L83,411.6M82.4,417L89,430.8"/><path class="k0" d="M74.6,434L89,430.8L82.4,417L67.7,420.1Z"/><path class="k1" d="M74.6,434L89,430.8M89,430.8L82.4,417"/><path class="k0" d="M275.2,379.5L273.5,373.9L271.3,360.5L273,366.1Z"/><path class="k1" d="M275.2,379.5L273.5,373.9"/><path class="k0" d="M98,428.8L111.8,425.7L105.8,412L91.6,415Z"/><path class="k1" d="M98,428.8L111.8,425.7M91.6,415L98,428.8"/><path class="k0" d="M97.7,433.3L98.3,424.4L92,410.6L91.3,419.5Z"/><path class="k1" d="M97.7,433.3L98.3,424.4M98.3,424.4L92,410.6"/><path class="k0" d="M522.1,462.9L516.4,455L530.7,385.7L537.2,393.4Z"/><path class="k1" d="M522.1,462.9L516.4,455"/><path class="k0" d="M111.8,425.7L125.5,422.7L119.9,408.9L105.8,412Z"/><path class="k1" d="M111.8,425.7L125.5,422.7"/><path class="k0" d="M382.9,374.8L379.2,368L378.9,354.7L382.7,361.4Z"/><path class="k1" d="M382.9,374.8L379.2,368"/><path class="k0" d="M125.5,422.7L139.1,419.7L133.7,406L119.9,408.9Z"/><path class="k1" d="M125.5,422.7L139.1,419.7"/><path class="k0" d="M277,385.2L275.2,379.5L273,366.1L274.8,371.8Z"/><path class="k1" d="M277,385.2L275.2,379.5M274.8,371.8L277,385.2"/><path class="k0" d="M277,385.2L284.5,383.6L282.4,370.1L274.8,371.8Z"/><path class="k1" d="M277,385.2L284.5,383.6M284.5,383.6L282.4,370.1M274.8,371.8L277,385.2"/><path class="k0" d="M139.1,419.7L152.5,416.8L147.4,403L133.7,406Z"/><path class="k1" d="M139.1,419.7L152.5,416.8"/><path class="k0" d="M484.6,381.9L495.5,379.3L497.5,365.8L486.4,368.4Z"/><path class="k1" d="M484.6,381.9L495.5,379.3"/><path class="k0" d="M527.9,471.1L522.1,462.9L537.2,393.4L544,401.4Z"/><path class="k1" d="M527.9,471.1L522.1,462.9"/><path class="k0" d="M152.5,416.8L165.7,413.8L161,400.1L147.4,403Z"/><path class="k1" d="M152.5,416.8L165.7,413.8"/><path class="k0" d="M165.7,413.8L178.8,411L174.4,397.3L161,400.1Z"/><path class="k1" d="M165.7,413.8L178.8,411"/><path class="k0" d="M97,442.6L97.7,433.3L91.3,419.5L90.5,428.7Z"/><path class="k1" d="M97,442.6L97.7,433.3"/><path class="k0" d="M178.8,411L191.7,408.1L187.6,394.4L174.4,397.3Z"/><path class="k1" d="M178.8,411L191.7,408.1"/><path class="k0" d="M398.3,460.1L394.3,451.9L394.7,382.8L399.2,390.7Z"/><path class="k1" d="M398.3,460.1L394.3,451.9M394.3,451.9L394.7,382.8M399.2,390.7L398.3,460.1"/><path class="k0" d="M398.3,460.1L415.1,455.5L417.9,386.3L399.2,390.7Z"/><path class="k1" d="M398.3,460.1L415.1,455.5M415.1,455.5L417.9,386.3M399.2,390.7L398.3,460.1"/><path class="k0" d="M191.7,408.1L204.5,405.3L200.6,391.6L187.6,394.4Z"/><path class="k1" d="M191.7,408.1L204.5,405.3"/><path class="k0" d="M473.6,384.5L484.6,381.9L486.4,368.4L475.2,371.1Z"/><path class="k1" d="M473.6,384.5L484.6,381.9"/><path class="k0" d="M266.2,391.6L278.2,389L275.9,375.5L263.7,378.1Z"/><path class="k1" d="M266.2,391.6L278.2,389M278.2,389L275.9,375.5"/><path class="k0" d="M204.5,405.3L217.1,402.5L213.6,388.9L200.6,391.6Z"/><path class="k1" d="M204.5,405.3L217.1,402.5"/><path class="k0" d="M254.2,394.3L266.2,391.6L263.7,378.1L251.4,380.8Z"/><path class="k1" d="M254.2,394.3L266.2,391.6"/><path class="k0" d="M217.1,402.5L229.6,399.7L226.3,386.1L213.6,388.9Z"/><path class="k1" d="M217.1,402.5L229.6,399.7"/><path class="k0" d="M241.9,397L254.2,394.3L251.4,380.8L238.9,383.4Z"/><path class="k1" d="M241.9,397L254.2,394.3"/><path class="k0" d="M229.6,399.7L241.9,397L238.9,383.4L226.3,386.1Z"/><path class="k1" d="M229.6,399.7L241.9,397"/><path class="k0" d="M386.7,381.7L382.9,374.8L382.7,361.4L386.6,368.3Z"/><path class="k1" d="M386.7,381.7L382.9,374.8"/><path class="k0" d="M279.3,392.8L277,385.2L274.8,371.8L277.1,379.3Z"/><path class="k1" d="M279.3,392.8L277,385.2M277,385.2L274.8,371.8"/><path class="k0" d="M533.9,479.5L527.9,471.1L544,401.4L551,409.6Z"/><path class="k1" d="M533.9,479.5L527.9,471.1"/><path class="k0" d="M222.9,405.4L221.5,397.4L218,383.8L219.5,391.8Z"/><path class="k1" d="M222.9,405.4L221.5,397.4M221.5,397.4L218,383.8"/><path class="k0" d="M462.4,387.2L473.6,384.5L475.2,371.1L463.8,373.7Z"/><path class="k1" d="M462.4,387.2L473.6,384.5"/><path class="k0" d="M96.3,452.2L97,442.6L90.5,428.7L89.7,438.3Z"/><path class="k1" d="M96.3,452.2L97,442.6"/><path class="k0" d="M540.1,488.1L533.9,479.5L551,409.6L558.2,418.1Z"/><path class="k1" d="M540.1,488.1L533.9,479.5"/><path class="k0" d="M451.1,389.9L462.4,387.2L463.8,373.7L452.3,376.4Z"/><path class="k1" d="M451.1,389.9L462.4,387.2"/><path class="k0" d="M390.6,388.9L386.7,381.7L386.6,368.3L390.6,375.4Z"/><path class="k1" d="M390.6,388.9L386.7,381.7"/><path class="k0" d="M281.8,400.7L279.3,392.8L277.1,379.3L279.5,387.1Z"/><path class="k1" d="M281.8,400.7L279.3,392.8"/><path class="k0" d="M224.5,413.7L222.9,405.4L219.5,391.8L221,400Z"/><path class="k1" d="M224.5,413.7L222.9,405.4"/><path class="k0" d="M439.7,392.7L451.1,389.9L452.3,376.4L440.7,379.2Z"/><path class="k1" d="M439.7,392.7L451.1,389.9"/><path class="k0" d="M546.4,497.1L540.1,488.1L558.2,418.1L565.7,426.9Z"/><path class="k1" d="M546.4,497.1L540.1,488.1"/><path class="k0" d="M95.7,462.2L96.3,452.2L89.7,438.3L88.8,448.3Z"/><path class="k1" d="M95.7,462.2L96.3,452.2"/><path class="k0" d="M428.1,395.5L439.7,392.7L440.7,379.2L428.9,381.9Z"/><path class="k1" d="M428.1,395.5L439.7,392.7"/><path class="k0" d="M394.6,396.3L390.6,388.9L390.6,375.4L394.7,382.8Z"/><path class="k1" d="M394.6,396.3L390.6,388.9"/><path class="k0" d="M416.4,398.3L428.1,395.5L428.9,381.9L417,384.7Z"/><path class="k1" d="M416.4,398.3L428.1,395.5"/><path class="k0" d="M553,506.3L546.4,497.1L565.7,426.9L573.4,436Z"/><path class="k1" d="M553,506.3L546.4,497.1"/><path class="k0" d="M284.3,408.9L281.8,400.7L279.5,387.1L282.1,395.2Z"/><path class="k1" d="M284.3,408.9L281.8,400.7"/><path class="k0" d="M226,422.3L224.5,413.7L221,400L222.5,408.5Z"/><path class="k1" d="M226,422.3L224.5,413.7"/><path class="k0" d="M94.9,472.6L95.7,462.2L88.8,448.3L88,458.6Z"/><path class="k1" d="M94.9,472.6L95.7,462.2"/><path class="k0" d="M559.8,515.8L553,506.3L573.4,436L581.4,445.4Z"/><path class="k1" d="M559.8,515.8L553,506.3"/><path class="k2" d="M386.2,405.6L398.1,402.7L398.3,389.1L386.1,391.9Z"/><path class="k1" d="M386.2,405.6L398.1,402.7M398.1,402.7L398.3,389.1"/><path class="k0" d="M286.9,417.3L284.3,408.9L282.1,395.2L284.7,403.5Z"/><path class="k1" d="M286.9,417.3L284.3,408.9"/><path class="k0" d="M227.7,431.2L226,422.3L222.5,408.5L224.1,417.4Z"/><path class="k1" d="M227.7,431.2L226,422.3"/><path class="k2" d="M374.1,408.5L386.2,405.6L386.1,391.9L373.8,394.8Z"/><path class="k1" d="M374.1,408.5L386.2,405.6"/><path class="k0" d="M566.8,525.6L559.8,515.8L581.4,445.4L589.8,455.2Z"/><path class="k1" d="M566.8,525.6L559.8,515.8"/><path class="k0" d="M94.6,477.9L109.4,474.3L102.7,460.3L87.5,463.9Z"/><path class="k1" d="M94.6,477.9L109.4,474.3M87.5,463.9L94.6,477.9"/><path class="k0" d="M94.2,483.3L94.9,472.6L88,458.6L87.1,469.3Z"/><path class="k1" d="M94.2,483.3L94.9,472.6"/><path class="k2" d="M361.9,411.4L374.1,408.5L373.8,394.8L361.3,397.7Z"/><path class="k1" d="M361.9,411.4L374.1,408.5"/><path class="k0" d="M403.3,412.2L399,404.3L399.2,390.7L403.6,398.5Z"/><path class="k1" d="M403.3,412.2L399,404.3"/><path class="k0" d="M109.4,474.3L124,470.8L117.8,456.8L102.7,460.3Z"/><path class="k1" d="M109.4,474.3L124,470.8"/><path class="k2" d="M349.5,414.4L361.9,411.4L361.3,397.7L348.7,400.7Z"/><path class="k1" d="M349.5,414.4L361.9,411.4"/><path class="k0" d="M574.1,535.8L566.8,525.6L589.8,455.2L598.4,465.4Z"/><path class="k1" d="M574.1,535.8L566.8,525.6"/><path class="k0" d="M124,470.8L138.5,467.3L132.6,453.3L117.8,456.8Z"/><path class="k1" d="M124,470.8L138.5,467.3"/><path class="k2" d="M337,417.4L349.5,414.4L348.7,400.7L335.9,403.7Z"/><path class="k1" d="M337,417.4L349.5,414.4"/><path class="k0" d="M289.5,426L286.9,417.3L284.7,403.5L287.4,412.2Z"/><path class="k1" d="M289.5,426L286.9,417.3"/><path class="k0" d="M138.5,467.3L152.7,463.8L147.2,449.9L132.6,453.3Z"/><path class="k1" d="M138.5,467.3L152.7,463.8"/><path class="k2" d="M324.3,420.5L337,417.4L335.9,403.7L322.9,406.7Z"/><path class="k1" d="M324.3,420.5L337,417.4"/><path class="k0" d="M229.4,440.4L227.7,431.2L224.1,417.4L225.8,426.5Z"/><path class="k1" d="M229.4,440.4L227.7,431.2"/><path class="k0" d="M152.7,463.8L166.8,460.4L161.7,446.5L147.2,449.9Z"/><path class="k1" d="M152.7,463.8L166.8,460.4"/><path class="k2" d="M311.5,423.6L324.3,420.5L322.9,406.7L309.8,409.8Z"/><path class="k1" d="M311.5,423.6L324.3,420.5"/><path class="k0" d="M93.4,494.5L94.2,483.3L87.1,469.3L86.1,480.5Z"/><path class="k1" d="M93.4,494.5L94.2,483.3"/><path class="k0" d="M407.8,420.4L403.3,412.2L403.6,398.5L408.2,406.6Z"/><path class="k1" d="M407.8,420.4L403.3,412.2"/><path class="k2" d="M298.5,426.7L296.8,421.4L294.8,407.6L296.5,412.9Z"/><path class="k1" d="M298.5,426.7L296.8,421.4M296.8,421.4L294.8,407.6M296.5,412.9L298.5,426.7"/><path class="k2" d="M298.5,426.7L311.5,423.6L309.8,409.8L296.5,412.9Z"/><path class="k1" d="M298.5,426.7L311.5,423.6M296.5,412.9L298.5,426.7"/><path class="k0" d="M166.8,460.4L180.7,457.1L175.9,443.1L161.7,446.5Z"/><path class="k1" d="M166.8,460.4L180.7,457.1"/><path class="k3" d="M278.5,431.5L290.4,428.6L288.2,414.8L276.1,417.7Z"/><path class="k1" d="M278.5,431.5L290.4,428.6M290.4,428.6L288.2,414.8"/><path class="k0" d="M180.7,457.1L194.5,453.8L190,439.8L175.9,443.1Z"/><path class="k1" d="M180.7,457.1L194.5,453.8"/><path class="k3" d="M266.6,434.4L278.5,431.5L276.1,417.7L263.9,420.5Z"/><path class="k1" d="M266.6,434.4L278.5,431.5"/><path class="k3" d="M229.9,443.2L242.2,440.2L239,426.4L226.3,429.3Z"/><path class="k1" d="M229.9,443.2L242.2,440.2M226.3,429.3L229.9,443.2"/><path class="k3" d="M254.5,437.3L266.6,434.4L263.9,420.5L251.5,423.4Z"/><path class="k1" d="M254.5,437.3L266.6,434.4"/><path class="k3" d="M242.2,440.2L254.5,437.3L251.5,423.4L239,426.4Z"/><path class="k1" d="M242.2,440.2L254.5,437.3"/><path class="k0" d="M194.5,453.8L208.1,450.5L203.9,436.6L190,439.8Z"/><path class="k1" d="M194.5,453.8L208.1,450.5"/><path class="k0" d="M221.5,447.2L220.5,441.5L216.8,427.6L217.7,433.3Z"/><path class="k1" d="M221.5,447.2L220.5,441.5M220.5,441.5L216.8,427.6M217.7,433.3L221.5,447.2"/><path class="k0" d="M208.1,450.5L221.5,447.2L217.7,433.3L203.9,436.6Z"/><path class="k1" d="M208.1,450.5L221.5,447.2M221.5,447.2L217.7,433.3"/><path class="k0" d="M566.7,550.6L559.8,540.6L582.4,470.2L590.7,480.3Z"/><path class="k1" d="M566.7,550.6L559.8,540.6M559.8,540.6L582.4,470.2M590.7,480.3L566.7,550.6"/><path class="k0" d="M566.7,550.6L587,543.6L613.5,473.3L590.7,480.3Z"/><path class="k1" d="M566.7,550.6L587,543.6M587,543.6L613.5,473.3M590.7,480.3L566.7,550.6"/><path class="k0" d="M589.1,556.8L581.1,545.6L606.8,475.3L616.4,486.7Z"/><path class="k1" d="M589.1,556.8L581.1,545.6"/><path class="k0" d="M292.3,435L289.5,426L287.4,412.2L290.2,421.2Z"/><path class="k1" d="M292.3,435L289.5,426"/><path class="k0" d="M231.1,449.9L229.4,440.4L225.8,426.5L227.5,436Z"/><path class="k1" d="M231.1,449.9L229.4,440.4"/><path class="k0" d="M92.6,506.2L93.4,494.5L86.1,480.5L85.2,492.2Z"/><path class="k1" d="M92.6,506.2L93.4,494.5"/><path class="k0" d="M412.4,428.9L407.8,420.4L408.2,406.6L412.9,415Z"/><path class="k1" d="M412.4,428.9L407.8,420.4"/><path class="k0" d="M-9.3,557.4L9.1,552.5L-1.2,538.6L-20.2,543.5Z"/><path class="k1" d="M-9.3,557.4L9.1,552.5"/><path class="k0" d="M597.4,568.5L589.1,556.8L616.4,486.7L626.5,498.5Z"/><path class="k1" d="M597.4,568.5L589.1,556.8"/><path class="k0" d="M9.1,552.5L27.3,547.7L17.5,533.8L-1.2,538.6Z"/><path class="k1" d="M9.1,552.5L27.3,547.7"/><path class="k0" d="M295.2,444.3L292.3,435L290.2,421.2L293.1,430.5Z"/><path class="k1" d="M295.2,444.3L292.3,435"/><path class="k0" d="M606,580.5L597.4,568.5L626.5,498.5L636.9,510.8Z"/><path class="k1" d="M606,580.5L597.4,568.5"/><path class="k0" d="M232.9,459.8L231.1,449.9L227.5,436L229.3,445.9Z"/><path class="k1" d="M232.9,459.8L231.1,449.9"/><path class="k0" d="M417.2,437.6L412.4,428.9L412.9,415L417.8,423.7Z"/><path class="k1" d="M417.2,437.6L412.4,428.9"/><path class="k0" d="M91.8,518.3L92.6,506.2L85.2,492.2L84.1,504.3Z"/><path class="k1" d="M91.8,518.3L92.6,506.2"/><path class="k0" d="M27.3,547.7L45.1,543L35.9,529.1L17.5,533.8Z"/><path class="k1" d="M27.3,547.7L45.1,543"/><path class="k0" d="M614.9,593L606,580.5L636.9,510.8L647.8,523.6Z"/><path class="k1" d="M614.9,593L606,580.5"/><path class="k0" d="M45.1,543L62.7,538.4L54.1,524.4L35.9,529.1Z"/><path class="k1" d="M45.1,543L62.7,538.4"/><path class="k0" d="M298.2,454L295.2,444.3L293.1,430.5L296.1,440.1Z"/><path class="k1" d="M298.2,454L295.2,444.3"/><path class="k0" d="M624.2,606L614.9,593L647.8,523.6L659.2,537Z"/><path class="k1" d="M624.2,606L614.9,593"/><path class="k0" d="M80.1,533.8L80.7,526.1L72.7,512.1L71.9,519.8Z"/><path class="k1" d="M80.1,533.8L80.7,526.1M80.7,526.1L72.7,512.1M71.9,519.8L80.1,533.8"/><path class="k0" d="M62.7,538.4L80.1,533.8L71.9,519.8L54.1,524.4Z"/><path class="k1" d="M62.7,538.4L80.1,533.8M80.1,533.8L71.9,519.8"/><path class="k0" d="M422.1,446.6L417.2,437.6L417.8,423.7L422.8,432.7Z"/><path class="k1" d="M422.1,446.6L417.2,437.6"/><path class="k0" d="M234.8,470.1L232.9,459.8L229.3,445.9L231.2,456.1Z"/><path class="k1" d="M234.8,470.1L232.9,459.8"/><path class="k0" d="M90.9,530.9L91.8,518.3L84.1,504.3L83.1,517Z"/><path class="k1" d="M90.9,530.9L91.8,518.3M83.1,517L90.9,530.9"/><path class="k0" d="M80.1,533.8L90.9,530.9L83.1,517L71.9,519.8Z"/><path class="k1" d="M80.1,533.8L90.9,530.9M90.9,530.9L83.1,517M71.9,519.8L80.1,533.8"/><path class="k0" d="M633.8,619.5L624.2,606L659.2,537L671.1,551Z"/><path class="k1" d="M633.8,619.5L624.2,606"/><path class="k0" d="M90.9,530.9L107.6,526.5L100.2,512.5L83.1,517Z"/><path class="k1" d="M90.9,530.9L107.6,526.5M83.1,517L90.9,530.9"/><path class="k0" d="M643.8,633.6L633.8,619.5L671.1,551L683.6,565.7Z"/><path class="k1" d="M643.8,633.6L633.8,619.5"/><path class="k0" d="M120.6,665.5L121.3,629.5L79.3,561.4L76.2,599.4Z"/><path class="k1" d="M120.6,665.5L121.3,629.5M121.3,629.5L79.3,561.4M76.2,599.4L120.6,665.5"/><path class="k0" d="M109.9,669L120.6,665.5L76.2,599.4L63.4,603.1Z"/><path class="k1" d="M109.9,669L120.6,665.5M120.6,665.5L76.2,599.4M63.4,603.1L109.9,669"/><path class="k0" d="M427.2,456L422.1,446.6L422.8,432.7L428.1,442.1Z"/><path class="k1" d="M427.2,456L422.1,446.6"/><path class="k0" d="M107.6,526.5L124,522.2L117.2,508.2L100.2,512.5Z"/><path class="k1" d="M107.6,526.5L124,522.2"/><path class="k0" d="M301.2,464.1L298.2,454L296.1,440.1L299.2,450.1Z"/><path class="k1" d="M301.2,464.1L298.2,454"/><path class="k0" d="M90.2,541.4L90.9,530.9L83.1,517L82.2,527.5Z"/><path class="k1" d="M90.2,541.4L90.9,530.9M90.9,530.9L83.1,517"/><path class="k0" d="M236.8,480.8L234.8,470.1L231.2,456.1L233.1,466.8Z"/><path class="k1" d="M236.8,480.8L234.8,470.1"/><path class="k0" d="M124,522.2L140.2,517.9L133.8,503.9L117.2,508.2Z"/><path class="k1" d="M124,522.2L140.2,517.9"/><path class="k0" d="M654.3,648.2L643.8,633.6L683.6,565.7L696.6,581Z"/><path class="k1" d="M654.3,648.2L643.8,633.6"/><path class="k0" d="M140.2,517.9L156.2,513.7L150.3,499.7L133.8,503.9Z"/><path class="k1" d="M140.2,517.9L156.2,513.7"/><path class="k0" d="M-21.9,613.9L-1.8,608.1L-13.3,594.6L-34.1,600.5Z"/><path class="k1" d="M-21.9,613.9L-1.8,608.1"/><path class="k0" d="M665.1,663.4L654.3,648.2L696.6,581L710.3,597.1Z"/><path class="k1" d="M665.1,663.4L654.3,648.2"/><path class="k0" d="M156.2,513.7L171.9,509.5L166.4,495.5L150.3,499.7Z"/><path class="k1" d="M156.2,513.7L171.9,509.5"/><path class="k0" d="M89.4,552.3L90.2,541.4L82.2,527.5L81.3,538.4Z"/><path class="k1" d="M89.4,552.3L90.2,541.4"/><path class="k0" d="M432.5,465.7L427.2,456L428.1,442.1L433.5,451.7Z"/><path class="k1" d="M432.5,465.7L427.2,456"/><path class="k0" d="M171.9,509.5L187.5,505.4L182.4,491.4L166.4,495.5Z"/><path class="k1" d="M171.9,509.5L187.5,505.4"/><path class="k0" d="M304.5,474.5L301.2,464.1L299.2,450.1L302.4,460.5Z"/><path class="k1" d="M304.5,474.5L301.2,464.1M302.4,460.5L304.5,474.5"/><path class="k0" d="M304.5,474.5L313.3,472.2L311.5,458.2L302.4,460.5Z"/><path class="k1" d="M304.5,474.5L313.3,472.2M313.3,472.2L311.5,458.2M302.4,460.5L304.5,474.5"/><path class="k0" d="M-1.8,608.1L18,602.5L7.2,588.9L-13.3,594.6Z"/><path class="k1" d="M-1.8,608.1L18,602.5"/><path class="k0" d="M676.5,679.3L665.1,663.4L710.3,597.1L724.6,614Z"/><path class="k1" d="M676.5,679.3L665.1,663.4"/><path class="k0" d="M187.5,505.4L202.8,501.4L198.2,487.4L182.4,491.4Z"/><path class="k1" d="M187.5,505.4L202.8,501.4"/><path class="k0" d="M238.8,491.9L236.8,480.8L233.1,466.8L235.1,477.8Z"/><path class="k1" d="M238.8,491.9L236.8,480.8M235.1,477.8L238.8,491.9"/><path class="k0" d="M229.3,494.4L238.8,491.9L235.1,477.8L225.4,480.3Z"/><path class="k1" d="M229.3,494.4L238.8,491.9M238.8,491.9L235.1,477.8M225.4,480.3L229.3,494.4"/><path class="k0" d="M572.9,498.4L585.9,494.3L590.7,480.3L577.4,484.4Z"/><path class="k1" d="M572.9,498.4L585.9,494.3"/><path class="k0" d="M202.8,501.4L217.9,497.4L213.7,483.4L198.2,487.4Z"/><path class="k1" d="M202.8,501.4L217.9,497.4"/><path class="k0" d="M290.5,478.2L304.5,474.5L302.4,460.5L288.1,464.2Z"/><path class="k1" d="M290.5,478.2L304.5,474.5M304.5,474.5L302.4,460.5"/><path class="k0" d="M217.9,497.4L232.8,493.4L229,479.4L213.7,483.4Z"/><path class="k1" d="M217.9,497.4L232.8,493.4"/><path class="k0" d="M276.4,481.9L290.5,478.2L288.1,464.2L273.6,467.9Z"/><path class="k1" d="M276.4,481.9L290.5,478.2"/><path class="k0" d="M688.3,695.8L676.5,679.3L724.6,614L739.7,631.8Z"/><path class="k1" d="M688.3,695.8L676.5,679.3"/><path class="k0" d="M232.8,493.4L247.5,489.6L244.1,475.5L229,479.4Z"/><path class="k1" d="M232.8,493.4L247.5,489.6"/><path class="k0" d="M262.1,485.7L276.4,481.9L273.6,467.9L259,471.7Z"/><path class="k1" d="M262.1,485.7L276.4,481.9"/><path class="k0" d="M247.5,489.6L262.1,485.7L259,471.7L244.1,475.5Z"/><path class="k1" d="M247.5,489.6L262.1,485.7"/><path class="k0" d="M88.6,563.5L89.4,552.3L81.3,538.4L80.3,549.7Z"/><path class="k1" d="M88.6,563.5L89.4,552.3"/><path class="k0" d="M18,602.5L37.5,596.9L27.3,583.3L7.2,588.9Z"/><path class="k1" d="M18,602.5L37.5,596.9"/><path class="k0" d="M460.3,587L454.9,575.8L464,506L470.5,517.4Z"/><path class="k1" d="M460.3,587L454.9,575.8M454.9,575.8L464,506M470.5,517.4L460.3,587"/><path class="k0" d="M460.3,587L480.4,580.1L493.3,510.3L470.5,517.4Z"/><path class="k1" d="M460.3,587L480.4,580.1M480.4,580.1L493.3,510.3M470.5,517.4L460.3,587"/><path class="k0" d="M438,475.8L432.5,465.7L433.5,451.7L439.2,461.8Z"/><path class="k1" d="M438,475.8L432.5,465.7"/><path class="k0" d="M330.4,597.1L321.7,567.2L312.1,497.2L321.5,527.8Z"/><path class="k1" d="M330.4,597.1L321.7,567.2M321.7,567.2L312.1,497.2M321.5,527.8L330.4,597.1"/><path class="k0" d="M330.4,597.1L340.6,593.7L333.3,524.4L321.5,527.8Z"/><path class="k1" d="M330.4,597.1L340.6,593.7M340.6,593.7L333.3,524.4M321.5,527.8L330.4,597.1"/><path class="k0" d="M559.7,502.6L572.9,498.4L577.4,484.4L563.9,488.6Z"/><path class="k1" d="M559.7,502.6L572.9,498.4"/><path class="k0" d="M692.2,717.3L679.9,699.6L730.2,635.8L746.1,654.9Z"/><path class="k1" d="M692.2,717.3L679.9,699.6M679.9,699.6L730.2,635.8"/><path class="k4" d="M746.1,654.9L692.2,717.3"/><path class="k0" d="M692.2,717.3L707.8,710L763.8,647.1L746.1,654.9Z"/><path class="k1" d="M692.2,717.3L707.8,710"/><path class="k4" d="M707.8,710L763.8,647.1M746.1,654.9L692.2,717.3"/><path class="k0" d="M307.1,483.2L304.5,474.5L302.4,460.5L305.1,469.2Z"/><path class="k1" d="M307.1,483.2L304.5,474.5M304.5,474.5L302.4,460.5"/><path class="k0" d="M37.5,596.9L56.7,591.4L47.1,577.8L27.3,583.3Z"/><path class="k1" d="M37.5,596.9L56.7,591.4"/><path class="k0" d="M87.8,575.2L88.6,563.5L80.3,549.7L79.3,561.4Z"/><path class="k1" d="M87.8,575.2L88.6,563.5"/><path class="k0" d="M75.5,586L76.3,577L67.5,563.2L66.6,572.4Z"/><path class="k1" d="M75.5,586L76.3,577M76.3,577L67.5,563.2M66.6,572.4L75.5,586"/><path class="k0" d="M56.7,591.4L75.5,586L66.6,572.4L47.1,577.8Z"/><path class="k1" d="M56.7,591.4L75.5,586M75.5,586L66.6,572.4"/><path class="k0" d="M546.3,506.8L559.7,502.6L563.9,488.6L550.2,492.8Z"/><path class="k1" d="M546.3,506.8L559.7,502.6"/><path class="k0" d="M443.7,486.2L438,475.8L439.2,461.8L445,472.2Z"/><path class="k1" d="M443.7,486.2L438,475.8"/><path class="k0" d="M427.6,485.4L441.2,481.5L442.4,467.5L428.5,471.4Z"/><path class="k1" d="M427.6,485.4L441.2,481.5M441.2,481.5L442.4,467.5"/><path class="k0" d="M309.9,492.1L307.1,483.2L305.1,469.2L307.9,478.1Z"/><path class="k1" d="M309.9,492.1L307.1,483.2"/><path class="k0" d="M678.2,723.8L692.2,717.3L746.1,654.9L730,662Z"/><path class="k1" d="M678.2,723.8L692.2,717.3"/><path class="k0" d="M413.8,489.3L427.6,485.4L428.5,471.4L414.4,475.3Z"/><path class="k1" d="M413.8,489.3L427.6,485.4"/><path class="k0" d="M532.7,511.1L546.3,506.8L550.2,492.8L536.3,497.1Z"/><path class="k1" d="M532.7,511.1L546.3,506.8"/><path class="k0" d="M449.6,497L443.7,486.2L445,472.2L451.1,483Z"/><path class="k1" d="M449.6,497L443.7,486.2"/><path class="k0" d="M399.8,493.3L413.8,489.3L414.4,475.3L400.1,479.3Z"/><path class="k1" d="M399.8,493.3L413.8,489.3"/><path class="k0" d="M312.7,501.3L309.9,492.1L307.9,478.1L310.8,487.3Z"/><path class="k1" d="M312.7,501.3L309.9,492.1"/><path class="k0" d="M663.9,730.4L678.2,723.8L730,662L713.7,669.2Z"/><path class="k1" d="M663.9,730.4L678.2,723.8"/><path class="k0" d="M385.7,497.4L399.8,493.3L400.1,479.3L385.5,483.4Z"/><path class="k1" d="M385.7,497.4L399.8,493.3"/><path class="k0" d="M518.9,515.5L532.7,511.1L536.3,497.1L522.2,501.4Z"/><path class="k1" d="M518.9,515.5L532.7,511.1"/><path class="k0" d="M371.3,501.5L385.7,497.4L385.5,483.4L370.8,487.5Z"/><path class="k1" d="M371.3,501.5L385.7,497.4"/><path class="k0" d="M455.8,508.3L449.6,497L451.1,483L457.4,494.3Z"/><path class="k1" d="M455.8,508.3L449.6,497"/><path class="k0" d="M649.4,737.1L663.9,730.4L713.7,669.2L697,676.6Z"/><path class="k1" d="M649.4,737.1L663.9,730.4"/><path class="k0" d="M315.6,510.8L312.7,501.3L310.8,487.3L313.7,496.8Z"/><path class="k1" d="M315.6,510.8L312.7,501.3"/><path class="k0" d="M356.7,505.7L371.3,501.5L370.8,487.5L355.9,491.6Z"/><path class="k1" d="M356.7,505.7L371.3,501.5"/><path class="k0" d="M504.9,519.9L518.9,515.5L522.2,501.4L507.9,505.9Z"/><path class="k1" d="M504.9,519.9L518.9,515.5"/><path class="k0" d="M341.9,509.9L356.7,505.7L355.9,491.6L340.7,495.9Z"/><path class="k1" d="M341.9,509.9L356.7,505.7"/><path class="k0" d="M326.9,514.2L324.6,506.9L322.9,492.9L325.3,500.2Z"/><path class="k1" d="M326.9,514.2L324.6,506.9M324.6,506.9L322.9,492.9M325.3,500.2L326.9,514.2"/><path class="k0" d="M326.9,514.2L341.9,509.9L340.7,495.9L325.3,500.2Z"/><path class="k1" d="M326.9,514.2L341.9,509.9M325.3,500.2L326.9,514.2"/><path class="k0" d="M85.2,612.8L105.4,606.8L97.1,593.3L76.2,599.4Z"/><path class="k1" d="M85.2,612.8L105.4,606.8M76.2,599.4L85.2,612.8"/><path class="k0" d="M634.7,743.9L649.4,737.1L697,676.6L680,684.1Z"/><path class="k1" d="M634.7,743.9L649.4,737.1"/><path class="k0" d="M490.7,524.3L504.9,519.9L507.9,505.9L493.3,510.3Z"/><path class="k1" d="M490.7,524.3L504.9,519.9"/><path class="k0" d="M462.2,520L455.8,508.3L457.4,494.3L464,506Z"/><path class="k1" d="M462.2,520L455.8,508.3"/><path class="k0" d="M84,629.7L85.2,612.8L76.2,599.4L74.7,616.4Z"/><path class="k1" d="M84,629.7L85.2,612.8"/><path class="k0" d="M105.4,606.8L125.3,600.8L117.6,587.3L97.1,593.3Z"/><path class="k1" d="M105.4,606.8L125.3,600.8"/><path class="k0" d="M125.3,600.8L144.8,595L137.7,581.4L117.6,587.3Z"/><path class="k1" d="M125.3,600.8L144.8,595"/><path class="k0" d="M619.7,750.9L634.7,743.9L680,684.1L662.7,691.8Z"/><path class="k1" d="M619.7,750.9L634.7,743.9"/><path class="k0" d="M144.8,595L164.1,589.3L157.6,575.6L137.7,581.4Z"/><path class="k1" d="M144.8,595L164.1,589.3"/><path class="k0" d="M82.8,647.4L84,629.7L74.7,616.4L73.2,634.3Z"/><path class="k1" d="M82.8,647.4L84,629.7"/><path class="k0" d="M164.1,589.3L182.9,583.6L177,569.9L157.6,575.6Z"/><path class="k1" d="M164.1,589.3L182.9,583.6"/><path class="k0" d="M604.5,758L619.7,750.9L662.7,691.8L645,699.6Z"/><path class="k1" d="M604.5,758L619.7,750.9"/><path class="k0" d="M182.9,583.6L201.5,578.1L196.2,564.3L177,569.9Z"/><path class="k1" d="M182.9,583.6L201.5,578.1"/><path class="k0" d="M201.5,578.1L219.8,572.6L215,558.9L196.2,564.3Z"/><path class="k1" d="M201.5,578.1L219.8,572.6"/><path class="k0" d="M475.5,544.3L468.4,531.4L470.5,517.4L477.8,530.4Z"/><path class="k1" d="M475.5,544.3L468.4,531.4"/><path class="k0" d="M219.8,572.6L237.7,567.3L233.5,553.5L215,558.9Z"/><path class="k1" d="M219.8,572.6L237.7,567.3"/><path class="k0" d="M306.8,546.7L323.3,541.7L321.5,527.8L304.5,532.8Z"/><path class="k1" d="M306.8,546.7L323.3,541.7"/><path class="k0" d="M237.7,567.3L255.4,562L251.7,548.2L233.5,553.5Z"/><path class="k1" d="M237.7,567.3L255.4,562"/><path class="k0" d="M289.9,551.7L306.8,546.7L304.5,532.8L287.2,537.8Z"/><path class="k1" d="M289.9,551.7L306.8,546.7"/><path class="k0" d="M81.5,665.9L82.8,647.4L73.2,634.3L71.6,653.1Z"/><path class="k1" d="M81.5,665.9L82.8,647.4"/><path class="k0" d="M255.4,562L272.8,556.8L269.6,542.9L251.7,548.2Z"/><path class="k1" d="M255.4,562L272.8,556.8"/><path class="k0" d="M272.8,556.8L289.9,551.7L287.2,537.8L269.6,542.9Z"/><path class="k1" d="M272.8,556.8L289.9,551.7"/><path class="k0" d="M589,765.2L604.5,758L645,699.6L626.9,707.6Z"/><path class="k1" d="M589,765.2L604.5,758"/><path class="k0" d="M482.9,557.9L475.5,544.3L477.8,530.4L485.4,544Z"/><path class="k1" d="M482.9,557.9L475.5,544.3"/><path class="k0" d="M329.1,554.8L325,541.2L323.2,527.3L327.5,540.9Z"/><path class="k1" d="M329.1,554.8L325,541.2"/><path class="k0" d="M573.2,772.5L589,765.2L626.9,707.6L608.5,715.7Z"/><path class="k1" d="M573.2,772.5L589,765.2"/><path class="k0" d="M80.2,685.5L81.5,665.9L71.6,653.1L70,673Z"/><path class="k1" d="M80.2,685.5L81.5,665.9"/><path class="k0" d="M555.1,780.9L544.1,758.4L573.2,700L587.3,725.1Z"/><path class="k1" d="M555.1,780.9L544.1,758.4M544.1,758.4L573.2,700"/><path class="k4" d="M587.3,725.1L555.1,780.9"/><path class="k0" d="M555.1,780.9L573.2,772.5L608.5,715.7L587.3,725.1Z"/><path class="k1" d="M555.1,780.9L573.2,772.5"/><path class="k4" d="M573.2,772.5L608.5,715.7M587.3,725.1L555.1,780.9"/><path class="k0" d="M490.6,572L482.9,557.9L485.4,544L493.4,558.2Z"/><path class="k1" d="M490.6,572L482.9,557.9"/><path class="k0" d="M333.5,568.9L329.1,554.8L327.5,540.9L331.9,555.1Z"/><path class="k1" d="M333.5,568.9L329.1,554.8"/><path class="k0" d="M78.7,706.1L80.2,685.5L70,673L68.2,693.9Z"/><path class="k1" d="M78.7,706.1L80.2,685.5"/><path class="k0" d="M539,788.4L555.1,780.9L587.3,725.1L568.3,733.5Z"/><path class="k1" d="M539,788.4L555.1,780.9"/><path class="k0" d="M498.7,586.7L490.6,572L493.4,558.2L501.7,573Z"/><path class="k1" d="M498.7,586.7L490.6,572"/><path class="k0" d="M77.2,727.9L78.7,706.1L68.2,693.9L66.3,716.1Z"/><path class="k1" d="M77.2,727.9L78.7,706.1"/><path class="k0" d="M522.5,796L539,788.4L568.3,733.5L548.9,742Z"/><path class="k1" d="M522.5,796L539,788.4"/><path class="k0" d="M338,583.7L333.5,568.9L331.9,555.1L336.5,569.9Z"/><path class="k1" d="M338,583.7L333.5,568.9"/><path class="k0" d="M507.1,602.2L498.7,586.7L501.7,573L510.5,588.6Z"/><path class="k1" d="M507.1,602.2L498.7,586.7"/><path class="k0" d="M505.8,803.8L522.5,796L548.9,742L529.1,750.8Z"/><path class="k1" d="M505.8,803.8L522.5,796"/><path class="k0" d="M75.6,750.8L77.2,727.9L66.3,716.1L64.4,739.6Z"/><path class="k1" d="M75.6,750.8L77.2,727.9"/><path class="k0" d="M488.8,811.7L505.8,803.8L529.1,750.8L508.8,759.7Z"/><path class="k1" d="M488.8,811.7L505.8,803.8"/><path class="k0" d="M342.8,599.1L338,583.7L336.5,569.9L341.4,585.5Z"/><path class="k1" d="M342.8,599.1L338,583.7"/><path class="k0" d="M515.9,618.3L507.1,602.2L510.5,588.6L519.7,604.9Z"/><path class="k1" d="M515.9,618.3L507.1,602.2"/><path class="k0" d="M471.5,819.7L488.8,811.7L508.8,759.7L488.2,768.9Z"/><path class="k1" d="M471.5,819.7L488.8,811.7"/><path class="k0" d="M74,775.2L75.6,750.8L64.4,739.6L62.3,764.4Z"/><path class="k1" d="M74,775.2L75.6,750.8"/><path class="k0" d="M453.9,827.9L471.5,819.7L488.2,768.9L467,778.2Z"/><path class="k1" d="M453.9,827.9L471.5,819.7"/><path class="k0" d="M525.2,635.3L515.9,618.3L519.7,604.9L529.3,622Z"/><path class="k1" d="M525.2,635.3L515.9,618.3"/><path class="k0" d="M347.7,615.3L342.8,599.1L341.4,585.5L346.5,601.8Z"/><path class="k1" d="M347.7,615.3L342.8,599.1"/><path class="k0" d="M435.9,836.2L453.9,827.9L467,778.2L445.5,787.7Z"/><path class="k1" d="M435.9,836.2L453.9,827.9"/><path class="k0" d="M72.2,801L74,775.2L62.3,764.4L60.1,790.9Z"/><path class="k1" d="M72.2,801L74,775.2"/><path class="k0" d="M417.6,844.7L435.9,836.2L445.5,787.7L423.4,797.5Z"/><path class="k1" d="M417.6,844.7L435.9,836.2"/><path class="k0" d="M394.3,855.5L385.7,824.3L384.6,774.1L395.2,809.9Z"/><path class="k1" d="M394.3,855.5L385.7,824.3M385.7,824.3L384.6,774.1"/><path class="k4" d="M395.2,809.9L394.3,855.5"/><path class="k0" d="M394.3,855.5L417.6,844.7L423.4,797.5L395.2,809.9Z"/><path class="k1" d="M394.3,855.5L417.6,844.7"/><path class="k4" d="M417.6,844.7L423.4,797.5M395.2,809.9L394.3,855.5"/><path class="k0" d="M534.9,653L525.2,635.3L529.3,622L539.4,640Z"/><path class="k1" d="M534.9,653L525.2,635.3"/><path class="k0" d="M353,632.3L347.7,615.3L346.5,601.8L351.8,619Z"/><path class="k1" d="M353,632.3L347.7,615.3"/><path class="k0" d="M545.1,671.7L534.9,653L539.4,640L550.1,659Z"/><path class="k1" d="M545.1,671.7L534.9,653"/><path class="k0" d="M555.8,691.4L545.1,671.7L550.1,659L561.3,678.9Z"/><path class="k1" d="M555.8,691.4L545.1,671.7"/><path class="k0" d="M358.4,650.1L353,632.3L351.8,619L357.4,637Z"/><path class="k1" d="M358.4,650.1L353,632.3"/><path class="k0" d="M567.2,712.1L555.8,691.4L561.3,678.9L573.2,700Z"/><path class="k1" d="M567.2,712.1L555.8,691.4"/><path class="k0" d="M364.2,668.8L358.4,650.1L357.4,637L363.4,656Z"/><path class="k1" d="M364.2,668.8L358.4,650.1"/><path class="k0" d="M370.3,688.5L364.2,668.8L363.4,656L369.6,676.1Z"/><path class="k1" d="M370.3,688.5L364.2,668.8"/><path class="k0" d="M376.7,709.3L370.3,688.5L369.6,676.1L376.2,697.2Z"/><path class="k1" d="M376.7,709.3L370.3,688.5"/><path class="k0" d="M383.4,731.3L376.7,709.3L376.2,697.2L383.2,719.6Z"/><path class="k1" d="M383.4,731.3L376.7,709.3"/><path class="k0" d="M390.5,754.5L383.4,731.3L383.2,719.6L390.5,743.2Z"/><path class="k1" d="M390.5,754.5L383.4,731.3"/><path class="k0" d="M398.1,779L390.5,754.5L390.5,743.2L398.4,768.4Z"/><path class="k1" d="M398.1,779L390.5,754.5"/><path class="k5" d="M746.1,654.9L692.2,717.3M707.8,710L763.8,647.1M746.1,654.9L692.2,717.3M587.3,725.1L555.1,780.9M573.2,772.5L608.5,715.7M587.3,725.1L555.1,780.9M395.2,809.9L394.3,855.5M417.6,844.7L423.4,797.5M395.2,809.9L394.3,855.5M193.7,948.6L707.8,710M195.7,982.7L737.8,722.6"/><path class="k0" d="M-51.5,309.9L-49.9,306.6L-37.8,304.7L-39.3,307.9ZM-39.3,307.9L-37.8,304.7L-25.8,302.8L-27.1,306ZM-27.1,306L-25.8,302.8L-13.9,300.9L-15.1,304.1ZM400.9,239.9L397.6,235.8L406.9,234.4L410.3,238.4ZM-15.1,304.1L-13.9,300.9L-2.1,299L-3.2,302.2ZM391,239.4L389.3,237.2L397.6,235.8L399.4,238ZM382.6,240.7L380.9,238.5L389.3,237.2L391,239.4ZM11.4,299.9L12.4,296.7L13.6,296.5L12.6,299.7ZM-4.2,304.9L-2.1,299L12.4,296.7L10.6,302.5ZM374.1,242.1L372.4,239.8L380.9,238.5L382.6,240.7ZM409.2,242.8L406.1,239.1L410.3,238.4L413.5,242.1ZM365.5,243.4L363.9,241.2L372.4,239.8L374.1,242.1ZM356.9,244.8L355.3,242.5L363.9,241.2L365.5,243.4ZM348.2,246.2L346.6,243.9L355.3,242.5L356.9,244.8ZM412.4,246.5L409.2,242.8L413.5,242.1L416.8,245.8ZM339.4,247.6L337.9,245.3L346.6,243.9L348.2,246.2ZM330.5,249L329.1,246.7L337.9,245.3L339.4,247.6ZM311.5,252L310.2,249.7L319.1,248.3L320.4,250.6ZM321.5,252.6L319.1,248.3L329.1,246.7L331.7,251ZM12.6,299.7L13.6,296.5L24.7,294.8L23.8,297.9ZM302.5,253.5L301.3,251.1L310.2,249.7L311.5,252ZM102.5,285.3L102.8,282.5L113.4,280.8L113.3,283.6ZM415.7,250.4L412.4,246.5L416.8,245.8L420.1,249.7ZM88.7,290L89.3,284.6L102.8,282.5L102.3,287.8ZM23.8,297.9L24.7,294.8L35.7,293.1L34.9,296.1ZM293.4,254.9L292.3,252.5L301.3,251.1L302.5,253.5ZM113.3,283.6L113.4,280.8L124,279.1L123.9,281.9ZM284.3,256.4L283.2,253.9L292.3,252.5L293.4,254.9ZM123.9,281.9L124,279.1L134.5,277.4L134.5,280.3ZM34.9,296.1L35.7,293.1L46.7,291.3L45.9,294.4ZM275.1,257.9L274,255.4L283.2,253.9L284.3,256.4ZM134.5,280.3L134.5,277.4L144.9,275.8L145,278.6ZM265.8,259.3L264.8,256.8L274,255.4L275.1,257.9ZM145,278.6L144.9,275.8L155.2,274.2L155.3,276.9ZM256.4,260.8L255.5,258.3L264.8,256.8L265.8,259.3ZM155.3,276.9L155.2,274.2L165.4,272.6L165.6,275.3ZM45.9,294.4L46.7,291.3L57.5,289.6L56.9,292.6ZM-3.6,309.7L-1.7,304.5L5.7,303.3L3.9,308.5ZM246.9,262.3L246.1,259.8L255.5,258.3L256.4,260.8ZM165.6,275.3L165.4,272.6L175.5,271L175.8,273.7ZM175.8,273.7L175.5,271L185.5,269.4L185.9,272.1ZM185.9,272.1L185.5,269.4L195.4,267.8L195.9,270.5ZM225.3,265.8L224.6,263.2L234.2,261.7L235,264.2ZM195.9,270.5L195.4,267.8L205.2,266.3L205.8,268.9ZM215.6,267.3L215,264.7L224.6,263.2L225.3,265.8ZM205.8,268.9L205.2,266.3L215,264.7L215.6,267.3ZM56.9,292.6L57.5,289.6L68.2,287.9L67.7,290.9ZM419.1,254.4L415.7,250.4L420.1,249.7L423.5,253.6ZM235.6,266.4L234.2,261.7L246.1,259.8L247.6,264.5ZM67.7,290.9L68.2,287.9L78.8,286.2L78.4,289.2ZM78.4,289.2L78.8,286.2L89.3,284.6L89,287.5ZM-5.4,315.1L-3.6,309.7L3.9,308.5L2.2,313.9ZM422.5,258.4L419.1,254.4L423.5,253.6L427,257.7ZM-7.4,320.7L-5.4,315.1L2.2,313.9L0.3,319.4ZM323.8,256.7L321.5,252.6L327.1,251.7L329.4,255.8ZM426,262.6L422.5,258.4L427,257.7L430.6,261.8ZM95,293.6L95.5,288.9L102.3,287.8L101.9,292.5ZM-9.4,326.4L-7.4,320.7L0.3,319.4L-1.6,325.1ZM429.7,266.8L426,262.6L430.6,261.8L434.2,266ZM326.1,260.8L323.8,256.7L329.4,255.8L331.8,259.9ZM242.9,269.6L241.6,265.5L247.6,264.5L249,268.6ZM94.5,298.5L95,293.6L101.9,292.5L101.5,297.3ZM-11.4,332.3L-9.4,326.4L-1.6,325.1L-3.5,330.9ZM433.4,271.2L429.7,266.8L434.2,266L438,270.4ZM328.5,265.1L326.1,260.8L331.8,259.9L334.3,264.1ZM94,303.5L94.5,298.5L101.5,297.3L101.1,302.3ZM244.2,273.9L242.9,269.6L249,268.6L250.4,272.9ZM-13.6,338.3L-11.4,332.3L-3.5,330.9L-5.5,336.9ZM437.2,275.7L433.4,271.2L438,270.4L441.8,274.8ZM331,269.4L328.5,265.1L334.3,264.1L336.8,268.5ZM93.5,308.6L94,303.5L101.1,302.3L100.7,307.4ZM245.6,278.2L244.2,273.9L250.4,272.9L251.8,277.2ZM-15.7,344.6L-13.6,338.3L-5.5,336.9L-7.5,343.1ZM441.1,280.3L437.2,275.7L441.8,274.8L445.8,279.4ZM333.5,273.9L331,269.4L336.8,268.5L339.4,272.9ZM93,313.8L93.5,308.6L100.7,307.4L100.2,312.6ZM247,282.7L245.6,278.2L251.8,277.2L253.3,281.6ZM-18,351L-15.7,344.6L-7.5,343.1L-9.6,349.5ZM445.1,285L441.1,280.3L445.8,279.4L449.8,284.1ZM92.4,319.2L93,313.8L100.2,312.6L99.8,318ZM336.1,278.5L333.5,273.9L339.4,272.9L342,277.5ZM248.4,287.3L247,282.7L253.3,281.6L254.8,286.2ZM-20.3,357.6L-18,351L-9.6,349.5L-11.8,356.1ZM437.2,291.6L433.5,287.1L449.8,284.1L453.7,288.5ZM91.8,324.8L92.4,319.2L99.8,318L99.3,323.5ZM249.9,292L248.4,287.3L254.8,286.2L256.3,290.8ZM338.7,283.2L336.1,278.5L342,277.5L344.7,282.1ZM452.9,294.2L448.8,289.4L453.7,288.5L457.8,293.3ZM-22.7,364.4L-20.3,357.6L-11.8,356.1L-14.1,362.8ZM-32.4,384.2L-28.1,372L-16.4,369.8L-20.4,381.9ZM91.3,330.5L91.8,324.8L99.3,323.5L98.9,329.1ZM251.4,296.8L249.9,292L256.3,290.8L257.9,295.6ZM341.4,288L338.7,283.2L344.7,282.1L347.5,286.9ZM457.1,299.2L452.9,294.2L457.8,293.3L462.1,298.2ZM90.7,336.3L91.3,330.5L98.9,329.1L98.4,335ZM461.5,304.3L457.1,299.2L462.1,298.2L466.5,303.3ZM252.9,301.7L251.4,296.8L257.9,295.6L259.5,300.5ZM344.2,293L341.4,288L347.5,286.9L350.4,291.9ZM426.4,291.9L424.1,288.9L433.5,287.1L435.9,290.1ZM416.8,293.7L414.5,290.7L424.1,288.9L426.4,291.9ZM352.5,307.6L350,303.3L365.7,300.4L368.3,304.6ZM465.9,309.5L461.5,304.3L466.5,303.3L471,308.5ZM90.1,342.4L90.7,336.3L98.4,335L97.9,341ZM407.1,295.5L404.9,292.5L414.5,290.7L416.8,293.7ZM254.5,306.8L252.9,301.7L259.5,300.5L261.2,305.6ZM347.1,298.1L344.2,293L350.4,291.9L353.3,296.9ZM397.3,297.4L395.2,294.3L404.9,292.5L407.1,295.5ZM387.4,299.3L385.3,296.1L395.2,294.3L397.3,297.4ZM470.5,314.9L465.9,309.5L471,308.5L475.6,313.8ZM89.4,348.6L90.1,342.4L97.9,341L97.3,347.1ZM256.1,312L254.5,306.8L261.2,305.6L262.9,310.8ZM377.4,301.1L375.4,298L385.3,296.1L387.4,299.3ZM350,303.3L347.1,298.1L353.3,296.9L356.3,302.1ZM367.3,303L365.4,299.9L375.4,298L377.4,301.1ZM475.2,320.4L470.5,314.9L475.6,313.8L480.3,319.3ZM88.8,355L89.4,348.6L97.3,347.1L96.8,353.5ZM257.8,317.3L256.1,312L262.9,310.8L264.6,316.1ZM480,326.1L475.2,320.4L480.3,319.3L485.2,325ZM88.1,361.6L88.8,355L96.8,353.5L96.3,360ZM355.5,313L352.5,307.6L358.8,306.4L361.9,311.7ZM259.5,322.8L257.8,317.3L264.6,316.1L266.4,321.5ZM84.1,386.9L86,368.6L95.7,366.8L94.2,384.9ZM485,331.9L480,326.1L485.2,325L490.2,330.8ZM-29.7,409.8L-27.9,404.7L-13.3,401.7L-14.8,406.9ZM87.4,368.4L88.1,361.6L96.3,360L95.7,366.8ZM358.5,318.4L355.5,313L361.9,311.7L365.1,317.2ZM261.3,328.5L259.5,322.8L266.4,321.5L268.3,327.1ZM490.1,337.9L485,331.9L490.2,330.8L495.4,336.7ZM-14.8,406.9L-13.3,401.7L1.2,398.9L-0.2,403.9ZM266.7,350.1L261.9,334.5L270.2,332.9L275.3,348.4ZM-0.2,403.9L1.2,398.9L15.5,396L14.3,401ZM95.4,370.4L95.8,366L109.4,363.4L109.2,367.7ZM109.2,367.7L109.4,363.4L122.9,360.8L122.8,365.1ZM495.3,344.1L490.1,337.9L495.4,336.7L500.7,342.9ZM361.7,324.1L358.5,318.4L365.1,317.2L368.3,322.7ZM14.3,401L15.5,396L29.6,393.2L28.6,398.1ZM263.1,334.3L261.3,328.5L268.3,327.1L270.2,332.9ZM122.8,365.1L122.9,360.8L136.3,358.2L136.3,362.4ZM28.6,398.1L29.6,393.2L43.6,390.4L42.7,395.3ZM136.3,362.4L136.3,358.2L149.5,355.6L149.6,359.8ZM149.6,359.8L149.5,355.6L162.5,353.1L162.8,357.2ZM42.7,395.3L43.6,390.4L57.4,387.6L56.7,392.4ZM162.8,357.2L162.5,353.1L175.4,350.6L175.8,354.7ZM175.8,354.7L175.4,350.6L188.2,348.1L188.7,352.2ZM500.7,350.5L495.3,344.1L500.7,342.9L506.2,349.2ZM188.7,352.2L188.2,348.1L200.8,345.7L201.4,349.7ZM250.8,340L249.8,336.2L261.7,333.9L262.9,337.7ZM201.4,349.7L200.8,345.7L213.2,343.3L214,347.2ZM238.7,342.4L237.7,338.5L249.8,336.2L250.8,340ZM214,347.2L213.2,343.3L225.5,340.9L226.4,344.8ZM226.4,344.8L225.5,340.9L237.7,338.5L238.7,342.4ZM365,329.8L361.7,324.1L368.3,322.7L371.6,328.5ZM56.7,392.4L57.4,387.6L71.1,384.9L70.5,389.7ZM70.5,389.7L71.1,384.9L84.6,382.2L84.1,386.9ZM354.4,332.4L352.4,328.7L363.1,326.6L365.2,330.2ZM506.3,357L500.7,350.5L506.2,349.2L511.8,355.8ZM343.4,334.6L341.5,330.9L352.4,328.7L354.4,332.4ZM332.4,336.9L330.6,333.1L341.5,330.9L343.4,334.6ZM368.3,335.8L365,329.8L371.6,328.5L375.1,334.4ZM321.2,339.1L319.5,335.3L330.6,333.1L332.4,336.9ZM84.9,392.8L85.5,386.6L94.2,384.9L93.6,391.1ZM309.9,341.4L308.3,337.5L319.5,335.3L321.2,339.1ZM298.5,343.7L297,339.8L308.3,337.5L309.9,341.4ZM286.9,346L285.5,342.1L297,339.8L298.5,343.7ZM-24.7,439.9L-22.9,434.1L-7.2,430.8L-8.8,436.5ZM498.7,367.3L492.9,360.1L511.8,355.8L517.9,362.8ZM275.3,348.4L274,344.4L285.5,342.1L286.9,346ZM371.7,341.9L368.3,335.8L375.1,334.4L378.6,340.5ZM84.2,399.2L84.9,392.8L93.6,391.1L93.1,397.4ZM-8.8,436.5L-7.2,430.8L8.3,427.5L6.9,433.2ZM518.2,371.1L512.3,364.1L517.9,362.8L523.9,369.7ZM6.9,433.2L8.3,427.5L23.6,424.2L22.4,429.8ZM269.6,355.1L267.9,349.8L275.3,348.4L277,353.6ZM-74.3,501.9L-70,489.9L-51.3,485.6L-55.2,497.4ZM83.6,405.8L84.2,399.2L93.1,397.4L92.6,403.9ZM375.3,348.2L371.7,341.9L378.6,340.5L382.2,346.7ZM22.4,429.8L23.6,424.2L38.7,421L37.7,426.6ZM524.4,378.3L518.2,371.1L523.9,369.7L530.1,376.9ZM37.7,426.6L38.7,421L53.7,417.9L52.8,423.3ZM271.3,360.5L269.6,355.1L277,353.6L278.8,359ZM82.9,412.5L83.6,405.8L92.6,403.9L92,410.6ZM52.8,423.3L53.7,417.9L68.4,414.7L67.7,420.1ZM530.7,385.7L524.4,378.3L530.1,376.9L536.5,384.3ZM378.9,354.7L375.3,348.2L382.2,346.7L386,353.2ZM67.7,420.1L68.4,414.7L83,411.6L82.4,417ZM273,366.1L271.3,360.5L278.8,359L280.6,364.5ZM91.6,415L92.1,409.7L106.1,406.7L105.8,412ZM82,421.5L82.9,412.5L92,410.6L91.3,419.5ZM537.2,393.4L530.7,385.7L536.5,384.3L543.1,391.9ZM105.8,412L106.1,406.7L120,403.8L119.9,408.9ZM382.7,361.4L378.9,354.7L386,353.2L389.8,359.8ZM119.9,408.9L120,403.8L133.7,400.9L133.7,406ZM274.8,371.8L273,366.1L280.6,364.5L282.4,370.1ZM133.7,406L133.7,400.9L147.3,398L147.4,403ZM486.4,368.4L483,364.1L494,361.5L497.5,365.8ZM544,401.4L537.2,393.4L543.1,391.9L550,399.8ZM147.4,403L147.3,398L160.7,395.2L161,400.1ZM161,400.1L160.7,395.2L173.9,392.3L174.4,397.3ZM81,430.8L82,421.5L91.3,419.5L90.5,428.7ZM174.4,397.3L173.9,392.3L187,389.6L187.6,394.4ZM399.2,390.7L394.7,382.8L413.2,378.5L417.9,386.3ZM187.6,394.4L187,389.6L200,386.8L200.6,391.6ZM475.2,371.1L471.9,366.7L483,364.1L486.4,368.4ZM263.7,378.1L262.4,373.6L274.5,371L275.9,375.5ZM200.6,391.6L200,386.8L212.7,384.1L213.6,388.9ZM251.4,380.8L250.2,376.2L262.4,373.6L263.7,378.1ZM213.6,388.9L212.7,384.1L225.4,381.4L226.3,386.1ZM238.9,383.4L237.9,378.8L250.2,376.2L251.4,380.8ZM226.3,386.1L225.4,381.4L237.9,378.8L238.9,383.4ZM386.6,368.3L382.7,361.4L389.8,359.8L393.8,366.7ZM277.1,379.3L274.8,371.8L282.4,370.1L284.9,377.6ZM551,409.6L544,401.4L550,399.8L557,408ZM211.2,393.6L209.9,385.5L218,383.8L219.5,391.8ZM463.8,373.7L460.6,369.3L471.9,366.7L475.2,371.1ZM80,440.5L81,430.8L90.5,428.7L89.7,438.3ZM558.2,418.1L551,409.6L557,408L564.3,416.4ZM452.3,376.4L449.2,371.9L460.6,369.3L463.8,373.7ZM390.6,375.4L386.6,368.3L393.8,366.7L397.9,373.8ZM279.5,387.1L277.1,379.3L284.9,377.6L287.5,385.4ZM212.5,401.9L211.2,393.6L219.5,391.8L221,400ZM440.7,379.2L437.6,374.6L449.2,371.9L452.3,376.4ZM565.7,426.9L558.2,418.1L564.3,416.4L571.9,425.2ZM79,450.5L80,440.5L89.7,438.3L88.8,448.3ZM428.9,381.9L426,377.3L437.6,374.6L440.7,379.2ZM394.7,382.8L390.6,375.4L397.9,373.8L402.2,381ZM417,384.7L414.1,380L426,377.3L428.9,381.9ZM573.4,436L565.7,426.9L571.9,425.2L579.7,434.2ZM282.1,395.2L279.5,387.1L287.5,385.4L290.1,393.4ZM213.9,410.4L212.5,401.9L221,400L222.5,408.5ZM77.9,460.9L79,450.5L88.8,448.3L88,458.6ZM581.4,445.4L573.4,436L579.7,434.2L587.8,443.6ZM284.7,403.5L282.1,395.2L290.1,393.4L292.8,401.7ZM215.4,419.4L213.9,410.4L222.5,408.5L224.1,417.4ZM589.8,455.2L581.4,445.4L587.8,443.6L596.2,453.3ZM87.5,463.9L88.1,457.5L103.1,454L102.7,460.3ZM76.8,471.8L77.9,460.9L88,458.6L87.1,469.3ZM403.6,398.5L399.2,390.7L406.7,388.9L411.2,396.7ZM102.7,460.3L103.1,454L117.9,450.6L117.8,456.8ZM598.4,465.4L589.8,455.2L596.2,453.3L605,463.4ZM117.8,456.8L117.9,450.6L132.6,447.2L132.6,453.3ZM287.4,412.2L284.7,403.5L292.8,401.7L295.7,410.3ZM132.6,453.3L132.6,447.2L147.1,443.8L147.2,449.9ZM216.9,428.6L215.4,419.4L224.1,417.4L225.8,426.5ZM147.2,449.9L147.1,443.8L161.4,440.5L161.7,446.5ZM75.7,483L76.8,471.8L87.1,469.3L86.1,480.5ZM408.2,406.6L403.6,398.5L411.2,396.7L415.9,404.8ZM161.7,446.5L161.4,440.5L175.5,437.2L175.9,443.1ZM175.9,443.1L175.5,437.2L189.4,434L190,439.8ZM190,439.8L189.4,434L203.2,430.8L203.9,436.6ZM203.9,436.6L203.2,430.8L216.8,427.6L217.7,433.3ZM590.7,480.3L582.4,470.2L605,463.4L613.5,473.3ZM616.4,486.7L606.8,475.3L613.5,473.3L623.2,484.5ZM290.2,421.2L287.4,412.2L295.7,410.3L298.6,419.1ZM218.5,438.2L216.9,428.6L225.8,426.5L227.5,436ZM74.5,494.8L75.7,483L86.1,480.5L85.2,492.2ZM412.9,415L408.2,406.6L415.9,404.8L420.8,413.1ZM-20.2,543.5L-18.1,535.2L0.6,530.4L-1.2,538.6ZM626.5,498.5L616.4,486.7L623.2,484.5L633.3,496.2ZM-1.2,538.6L0.6,530.4L19,525.7L17.5,533.8ZM293.1,430.5L290.2,421.2L298.6,419.1L301.7,428.4ZM636.9,510.8L626.5,498.5L633.3,496.2L643.9,508.4ZM220.1,448.1L218.5,438.2L227.5,436L229.3,445.9ZM417.8,423.7L412.9,415L420.8,413.1L425.8,421.7ZM73.2,507L74.5,494.8L85.2,492.2L84.1,504.3ZM17.5,533.8L19,525.7L37.2,521.1L35.9,529.1ZM647.8,523.6L636.9,510.8L643.9,508.4L654.9,521.2ZM35.9,529.1L37.2,521.1L55.1,516.6L54.1,524.4ZM296.1,440.1L293.1,430.5L301.7,428.4L304.8,437.9ZM659.2,537L647.8,523.6L654.9,521.2L666.4,534.5ZM54.1,524.4L55.1,516.6L72.7,512.1L71.9,519.8ZM422.8,432.7L417.8,423.7L425.8,421.7L430.9,430.6ZM221.8,458.4L220.1,448.1L229.3,445.9L231.2,456.1ZM71.9,519.8L73.2,507L84.1,504.3L83.1,517ZM671.1,551L659.2,537L666.4,534.5L678.4,548.4ZM83.1,517L83.7,509.3L100.7,505L100.2,512.5ZM683.6,565.7L671.1,551L678.4,548.4L691,562.9ZM63.4,603.1L67.3,564.7L79.3,561.4L76.2,599.4ZM428.1,442.1L422.8,432.7L430.9,430.6L436.3,439.9ZM100.2,512.5L100.7,505L117.4,500.7L117.2,508.2ZM299.2,450.1L296.1,440.1L304.8,437.9L308.1,447.9ZM70.8,530.5L71.9,519.8L83.1,517L82.2,527.5ZM223.5,469.2L221.8,458.4L231.2,456.1L233.1,466.8ZM117.2,508.2L117.4,500.7L133.8,496.6L133.8,503.9ZM696.6,581L683.6,565.7L691,562.9L704.1,578.1ZM133.8,503.9L133.8,496.6L150,492.4L150.3,499.7ZM-34.1,600.5L-31.7,590.5L-11.2,584.9L-13.3,594.6ZM710.3,597.1L696.6,581L704.1,578.1L717.9,594.1ZM150.3,499.7L150,492.4L166,488.4L166.4,495.5ZM69.7,541.5L70.8,530.5L82.2,527.5L81.3,538.4ZM433.5,451.7L428.1,442.1L436.3,439.9L441.9,449.5ZM166.4,495.5L166,488.4L181.8,484.4L182.4,491.4ZM302.4,460.5L299.2,450.1L308.1,447.9L311.5,458.2ZM-13.3,594.6L-11.2,584.9L9,579.3L7.2,588.9ZM724.6,614L710.3,597.1L717.9,594.1L732.4,610.8ZM182.4,491.4L181.8,484.4L197.4,480.4L198.2,487.4ZM225.4,480.3L223.5,469.2L233.1,466.8L235.1,477.8ZM577.4,484.4L571.1,476.4L584.2,472.4L590.7,480.3ZM198.2,487.4L197.4,480.4L212.7,476.5L213.7,483.4ZM288.1,464.2L286.3,457.8L300.5,454.2L302.4,460.5ZM213.7,483.4L212.7,476.5L227.8,472.7L229,479.4ZM273.6,467.9L272,461.5L286.3,457.8L288.1,464.2ZM739.7,631.8L724.6,614L732.4,610.8L747.6,628.4ZM229,479.4L227.8,472.7L242.8,468.9L244.1,475.5ZM259,471.7L257.5,465.2L272,461.5L273.6,467.9ZM244.1,475.5L242.8,468.9L257.5,465.2L259,471.7ZM68.6,552.9L69.7,541.5L81.3,538.4L80.3,549.7ZM7.2,588.9L9,579.3L28.8,573.9L27.3,583.3ZM470.5,517.4L464,506L486.5,499.2L493.3,510.3ZM439.2,461.8L433.5,451.7L441.9,449.5L447.7,459.4ZM321.5,527.8L312.1,497.2L323.3,494.1L333.3,524.4ZM563.9,488.6L557.7,480.5L571.1,476.4L577.4,484.4ZM746.1,654.9L730.2,635.8L747.6,628.4L763.8,647.1ZM305.1,469.2L302.4,460.5L311.5,458.2L314.3,466.8ZM27.3,583.3L28.8,573.9L48.3,568.5L47.1,577.8ZM67.3,564.7L68.6,552.9L80.3,549.7L79.3,561.4ZM47.1,577.8L48.3,568.5L67.5,563.2L66.6,572.4ZM550.2,492.8L544.2,484.6L557.7,480.5L563.9,488.6ZM445,472.2L439.2,461.8L447.7,459.4L453.7,469.7ZM428.5,471.4L425,464.8L438.8,461L442.4,467.5ZM307.9,478.1L305.1,469.2L314.3,466.8L317.2,475.6ZM730,662L720.6,650.2L736.4,643.4L746.1,654.9ZM414.4,475.3L411,468.7L425,464.8L428.5,471.4ZM536.3,497.1L530.5,488.7L544.2,484.6L550.2,492.8ZM451.1,483L445,472.2L453.7,469.7L459.9,480.5ZM400.1,479.3L396.9,472.6L411,468.7L414.4,475.3ZM310.8,487.3L307.9,478.1L317.2,475.6L320.2,484.7ZM713.7,669.2L704.4,657.2L720.6,650.2L730,662ZM385.5,483.4L382.5,476.5L396.9,472.6L400.1,479.3ZM522.2,501.4L516.5,493L530.5,488.7L536.3,497.1ZM370.8,487.5L367.9,480.5L382.5,476.5L385.5,483.4ZM457.4,494.3L451.1,483L459.9,480.5L466.4,491.6ZM697,676.6L687.9,664.3L704.4,657.2L713.7,669.2ZM313.7,496.8L310.8,487.3L320.2,484.7L323.3,494.1ZM355.9,491.6L353.1,484.6L367.9,480.5L370.8,487.5ZM507.9,505.9L502.4,497.3L516.5,493L522.2,501.4ZM340.7,495.9L338.2,488.7L353.1,484.6L355.9,491.6ZM325.3,500.2L322.9,492.9L338.2,488.7L340.7,495.9ZM76.2,599.4L77.1,587.8L97.7,581.9L97.1,593.3ZM680,684.1L671.1,671.6L687.9,664.3L697,676.6ZM493.3,510.3L488,501.6L502.4,497.3L507.9,505.9ZM464,506L457.4,494.3L466.4,491.6L473.1,503.2ZM61.7,620.3L63.4,603.1L76.2,599.4L74.7,616.4ZM97.1,593.3L97.7,581.9L117.8,576.2L117.6,587.3ZM117.6,587.3L117.8,576.2L137.7,570.5L137.7,581.4ZM662.7,691.8L653.9,679L671.1,671.6L680,684.1ZM137.7,581.4L137.7,570.5L157.2,564.9L157.6,575.6ZM59.8,638.4L61.7,620.3L74.7,616.4L73.2,634.3ZM157.6,575.6L157.2,564.9L176.3,559.4L177,569.9ZM645,699.6L636.5,686.6L653.9,679L662.7,691.8ZM177,569.9L176.3,559.4L195.2,554L196.2,564.3ZM196.2,564.3L195.2,554L213.7,548.7L215,558.9ZM477.8,530.4L470.5,517.4L479.7,514.6L487.2,527.4ZM215,558.9L213.7,548.7L231.9,543.4L233.5,553.5ZM304.5,532.8L301.9,523.4L318.7,518.5L321.5,527.8ZM233.5,553.5L231.9,543.4L249.8,538.3L251.7,548.2ZM287.2,537.8L284.8,528.3L301.9,523.4L304.5,532.8ZM57.9,657.4L59.8,638.4L73.2,634.3L71.6,653.1ZM251.7,548.2L249.8,538.3L267.5,533.2L269.6,542.9ZM269.6,542.9L267.5,533.2L284.8,528.3L287.2,537.8ZM626.9,707.6L618.6,694.3L636.5,686.6L645,699.6ZM485.4,544L477.8,530.4L487.2,527.4L495,540.9ZM327.5,540.9L323.2,527.3L333.3,524.4L337.7,537.8ZM608.5,715.7L600.4,702.2L618.6,694.3L626.9,707.6ZM55.8,677.5L57.9,657.4L71.6,653.1L70,673ZM587.3,725.1L573.2,700L593.9,691.2L608.5,715.7ZM493.4,558.2L485.4,544L495,540.9L503.1,554.9ZM331.9,555.1L327.5,540.9L337.7,537.8L342.4,551.9ZM53.7,698.7L55.8,677.5L70,673L68.2,693.9ZM568.3,733.5L560.7,719.3L579.5,711.2L587.3,725.1ZM501.7,573L493.4,558.2L503.1,554.9L511.7,569.6ZM51.4,721.2L53.7,698.7L68.2,693.9L66.3,716.1ZM548.9,742L541.6,727.6L560.7,719.3L568.3,733.5ZM336.5,569.9L331.9,555.1L342.4,551.9L347.2,566.6ZM510.5,588.6L501.7,573L511.7,569.6L520.6,585ZM529.1,750.8L522.1,736L541.6,727.6L548.9,742ZM48.9,744.9L51.4,721.2L66.3,716.1L64.4,739.6ZM508.8,759.7L502.1,744.7L522.1,736L529.1,750.8ZM341.4,585.5L336.5,569.9L347.2,566.6L352.3,582ZM519.7,604.9L510.5,588.6L520.6,585L530,601.2ZM488.2,768.9L481.8,753.5L502.1,744.7L508.8,759.7ZM46.4,770.2L48.9,744.9L64.4,739.6L62.3,764.4ZM467,778.2L460.9,762.5L481.8,753.5L488.2,768.9ZM529.3,622L519.7,604.9L530,601.2L539.8,618.1ZM346.5,601.8L341.4,585.5L352.3,582L357.6,598.2ZM445.5,787.7L439.7,771.7L460.9,762.5L467,778.2ZM43.6,797L46.4,770.2L62.3,764.4L60.1,790.9ZM423.4,797.5L418,781L439.7,771.7L445.5,787.7ZM395.2,809.9L384.6,774.1L411.9,762.6L423.4,797.5ZM539.4,640L529.3,622L539.8,618.1L550.1,635.9ZM351.8,619L346.5,601.8L357.6,598.2L363.2,615.1ZM550.1,659L539.4,640L550.1,635.9L561,654.6ZM561.3,678.9L550.1,659L561,654.6L572.5,674.4ZM357.4,637L351.8,619L363.2,615.1L369.1,633ZM573.2,700L561.3,678.9L572.5,674.4L584.6,695.2ZM363.4,656L357.4,637L369.1,633L375.3,651.7ZM369.6,676.1L363.4,656L375.3,651.7L381.8,671.5ZM376.2,697.2L369.6,676.1L381.8,671.5L388.7,692.4ZM383.2,719.6L376.2,697.2L388.7,692.4L396,714.5ZM390.5,743.2L383.2,719.6L396,714.5L403.7,737.9ZM398.4,768.4L390.5,743.2L403.7,737.9L411.9,762.6Z"/><path class="k3" d="M386.1,391.9L383.5,387.1L395.6,384.3L398.3,389.1ZM373.8,394.8L371.3,389.9L383.5,387.1L386.1,391.9ZM361.3,397.7L358.9,392.8L371.3,389.9L373.8,394.8ZM348.7,400.7L346.4,395.7L358.9,392.8L361.3,397.7ZM335.9,403.7L333.8,398.6L346.4,395.7L348.7,400.7ZM322.9,406.7L320.9,401.6L333.8,398.6L335.9,403.7ZM309.8,409.8L308,404.6L320.9,401.6L322.9,406.7ZM296.5,412.9L294.8,407.6L308,404.6L309.8,409.8ZM276.1,417.7L274.6,412.3L286.5,409.6L288.2,414.8ZM263.9,420.5L262.4,415.1L274.6,412.3L276.1,417.7ZM226.3,429.3L225.3,423.7L237.8,420.8L239,426.4ZM251.5,423.4L250.2,418L262.4,415.1L263.9,420.5ZM239,426.4L237.8,420.8L250.2,418L251.5,423.4Z"/><path class="k4" d="M-49.9,306.6L-37.8,304.7M-39.3,307.9L-51.5,309.9M-37.8,304.7L-25.8,302.8M-27.1,306L-39.3,307.9M-25.8,302.8L-13.9,300.9M-15.1,304.1L-27.1,306M400.9,239.9L397.6,235.8M397.6,235.8L406.9,234.4M406.9,234.4L410.3,238.4M410.3,238.4L400.9,239.9M-13.9,300.9L-2.1,299M-3.2,302.2L-15.1,304.1M389.3,237.2L397.6,235.8M399.4,238L391,239.4M380.9,238.5L389.3,237.2M391,239.4L382.6,240.7M12.4,296.7L13.6,296.5M13.6,296.5L12.6,299.7M12.6,299.7L11.4,299.9M-4.2,304.9L-2.1,299M-2.1,299L12.4,296.7M12.4,296.7L10.6,302.5M10.6,302.5L-4.2,304.9M372.4,239.8L380.9,238.5M382.6,240.7L374.1,242.1M409.2,242.8L406.1,239.1M410.3,238.4L413.5,242.1M363.9,241.2L372.4,239.8M374.1,242.1L365.5,243.4M355.3,242.5L363.9,241.2M365.5,243.4L356.9,244.8M346.6,243.9L355.3,242.5M356.9,244.8L348.2,246.2M412.4,246.5L409.2,242.8M413.5,242.1L416.8,245.8M337.9,245.3L346.6,243.9M348.2,246.2L339.4,247.6M329.1,246.7L337.9,245.3M339.4,247.6L330.5,249M310.2,249.7L319.1,248.3M320.4,250.6L311.5,252M321.5,252.6L319.1,248.3M319.1,248.3L329.1,246.7M329.1,246.7L331.7,251M331.7,251L321.5,252.6M12.6,299.7L13.6,296.5M13.6,296.5L24.7,294.8M23.8,297.9L12.6,299.7M301.3,251.1L310.2,249.7M311.5,252L302.5,253.5M102.8,282.5L113.4,280.8M113.3,283.6L102.5,285.3M415.7,250.4L412.4,246.5M416.8,245.8L420.1,249.7M88.7,290L89.3,284.6M89.3,284.6L102.8,282.5M102.8,282.5L102.3,287.8M102.3,287.8L88.7,290M24.7,294.8L35.7,293.1M34.9,296.1L23.8,297.9M292.3,252.5L301.3,251.1M302.5,253.5L293.4,254.9M113.4,280.8L124,279.1M123.9,281.9L113.3,283.6M283.2,253.9L292.3,252.5M293.4,254.9L284.3,256.4M124,279.1L134.5,277.4M134.5,280.3L123.9,281.9M35.7,293.1L46.7,291.3M45.9,294.4L34.9,296.1M274,255.4L283.2,253.9M284.3,256.4L275.1,257.9M134.5,277.4L144.9,275.8M145,278.6L134.5,280.3M264.8,256.8L274,255.4M275.1,257.9L265.8,259.3M144.9,275.8L155.2,274.2M155.3,276.9L145,278.6M255.5,258.3L264.8,256.8M265.8,259.3L256.4,260.8M155.2,274.2L165.4,272.6M165.6,275.3L155.3,276.9M46.7,291.3L57.5,289.6M56.9,292.6L45.9,294.4M-3.6,309.7L-1.7,304.5M5.7,303.3L3.9,308.5M246.1,259.8L255.5,258.3M256.4,260.8L246.9,262.3M165.4,272.6L175.5,271M175.8,273.7L165.6,275.3M175.5,271L185.5,269.4M185.9,272.1L175.8,273.7M185.5,269.4L195.4,267.8M195.9,270.5L185.9,272.1M224.6,263.2L234.2,261.7M235,264.2L225.3,265.8M195.4,267.8L205.2,266.3M205.8,268.9L195.9,270.5M215,264.7L224.6,263.2M225.3,265.8L215.6,267.3M205.2,266.3L215,264.7M215.6,267.3L205.8,268.9M57.5,289.6L68.2,287.9M67.7,290.9L56.9,292.6M419.1,254.4L415.7,250.4M420.1,249.7L423.5,253.6M235.6,266.4L234.2,261.7M234.2,261.7L246.1,259.8M246.1,259.8L247.6,264.5M247.6,264.5L235.6,266.4M68.2,287.9L78.8,286.2M78.4,289.2L67.7,290.9M78.8,286.2L89.3,284.6M89.3,284.6L89,287.5M89,287.5L78.4,289.2M-5.4,315.1L-3.6,309.7M3.9,308.5L2.2,313.9M422.5,258.4L419.1,254.4M423.5,253.6L427,257.7M-7.4,320.7L-5.4,315.1M2.2,313.9L0.3,319.4M323.8,256.7L321.5,252.6M327.1,251.7L329.4,255.8M426,262.6L422.5,258.4M427,257.7L430.6,261.8M95,293.6L95.5,288.9M102.3,287.8L101.9,292.5M-9.4,326.4L-7.4,320.7M0.3,319.4L-1.6,325.1M429.7,266.8L426,262.6M430.6,261.8L434.2,266M326.1,260.8L323.8,256.7M329.4,255.8L331.8,259.9M242.9,269.6L241.6,265.5M247.6,264.5L249,268.6M94.5,298.5L95,293.6M101.9,292.5L101.5,297.3M-11.4,332.3L-9.4,326.4M-1.6,325.1L-3.5,330.9M433.4,271.2L429.7,266.8M434.2,266L438,270.4M328.5,265.1L326.1,260.8M331.8,259.9L334.3,264.1M94,303.5L94.5,298.5M101.5,297.3L101.1,302.3M244.2,273.9L242.9,269.6M249,268.6L250.4,272.9M-13.6,338.3L-11.4,332.3M-3.5,330.9L-5.5,336.9M437.2,275.7L433.4,271.2M438,270.4L441.8,274.8M331,269.4L328.5,265.1M334.3,264.1L336.8,268.5M93.5,308.6L94,303.5M101.1,302.3L100.7,307.4M245.6,278.2L244.2,273.9M250.4,272.9L251.8,277.2M-15.7,344.6L-13.6,338.3M-5.5,336.9L-7.5,343.1M441.1,280.3L437.2,275.7M441.8,274.8L445.8,279.4M333.5,273.9L331,269.4M336.8,268.5L339.4,272.9M93,313.8L93.5,308.6M100.7,307.4L100.2,312.6M247,282.7L245.6,278.2M251.8,277.2L253.3,281.6M-18,351L-15.7,344.6M-7.5,343.1L-9.6,349.5M445.1,285L441.1,280.3M445.8,279.4L449.8,284.1M92.4,319.2L93,313.8M100.2,312.6L99.8,318M336.1,278.5L333.5,273.9M339.4,272.9L342,277.5M248.4,287.3L247,282.7M253.3,281.6L254.8,286.2M-20.3,357.6L-18,351M-9.6,349.5L-11.8,356.1M437.2,291.6L433.5,287.1M433.5,287.1L449.8,284.1M449.8,284.1L453.7,288.5M453.7,288.5L437.2,291.6M91.8,324.8L92.4,319.2M99.8,318L99.3,323.5M249.9,292L248.4,287.3M254.8,286.2L256.3,290.8M338.7,283.2L336.1,278.5M342,277.5L344.7,282.1M452.9,294.2L448.8,289.4M453.7,288.5L457.8,293.3M-22.7,364.4L-20.3,357.6M-11.8,356.1L-14.1,362.8M-32.4,384.2L-28.1,372M-28.1,372L-16.4,369.8M-16.4,369.8L-20.4,381.9M-20.4,381.9L-32.4,384.2M91.3,330.5L91.8,324.8M99.3,323.5L98.9,329.1M251.4,296.8L249.9,292M256.3,290.8L257.9,295.6M341.4,288L338.7,283.2M344.7,282.1L347.5,286.9M457.1,299.2L452.9,294.2M457.8,293.3L462.1,298.2M90.7,336.3L91.3,330.5M98.9,329.1L98.4,335M461.5,304.3L457.1,299.2M462.1,298.2L466.5,303.3M252.9,301.7L251.4,296.8M257.9,295.6L259.5,300.5M344.2,293L341.4,288M347.5,286.9L350.4,291.9M424.1,288.9L433.5,287.1M435.9,290.1L426.4,291.9M414.5,290.7L424.1,288.9M426.4,291.9L416.8,293.7M352.5,307.6L350,303.3M350,303.3L365.7,300.4M365.7,300.4L368.3,304.6M368.3,304.6L352.5,307.6M465.9,309.5L461.5,304.3M466.5,303.3L471,308.5M90.1,342.4L90.7,336.3M98.4,335L97.9,341M404.9,292.5L414.5,290.7M416.8,293.7L407.1,295.5M254.5,306.8L252.9,301.7M259.5,300.5L261.2,305.6M347.1,298.1L344.2,293M350.4,291.9L353.3,296.9M395.2,294.3L404.9,292.5M407.1,295.5L397.3,297.4M385.3,296.1L395.2,294.3M397.3,297.4L387.4,299.3M470.5,314.9L465.9,309.5M471,308.5L475.6,313.8M89.4,348.6L90.1,342.4M97.9,341L97.3,347.1M256.1,312L254.5,306.8M261.2,305.6L262.9,310.8M375.4,298L385.3,296.1M387.4,299.3L377.4,301.1M350,303.3L347.1,298.1M353.3,296.9L356.3,302.1M365.4,299.9L375.4,298M377.4,301.1L367.3,303M475.2,320.4L470.5,314.9M475.6,313.8L480.3,319.3M88.8,355L89.4,348.6M97.3,347.1L96.8,353.5M257.8,317.3L256.1,312M262.9,310.8L264.6,316.1M480,326.1L475.2,320.4M480.3,319.3L485.2,325M88.1,361.6L88.8,355M96.8,353.5L96.3,360M355.5,313L352.5,307.6M358.8,306.4L361.9,311.7M259.5,322.8L257.8,317.3M264.6,316.1L266.4,321.5M84.1,386.9L86,368.6M86,368.6L95.7,366.8M95.7,366.8L94.2,384.9M94.2,384.9L84.1,386.9M485,331.9L480,326.1M485.2,325L490.2,330.8M-29.7,409.8L-27.9,404.7M-27.9,404.7L-13.3,401.7M-14.8,406.9L-29.7,409.8M87.4,368.4L88.1,361.6M96.3,360L95.7,366.8M358.5,318.4L355.5,313M361.9,311.7L365.1,317.2M261.3,328.5L259.5,322.8M266.4,321.5L268.3,327.1M490.1,337.9L485,331.9M490.2,330.8L495.4,336.7M-13.3,401.7L1.2,398.9M-0.2,403.9L-14.8,406.9M266.7,350.1L261.9,334.5M261.9,334.5L270.2,332.9M270.2,332.9L275.3,348.4M275.3,348.4L266.7,350.1M1.2,398.9L15.5,396M14.3,401L-0.2,403.9M95.4,370.4L95.8,366M95.8,366L109.4,363.4M109.2,367.7L95.4,370.4M109.4,363.4L122.9,360.8M122.8,365.1L109.2,367.7M495.3,344.1L490.1,337.9M495.4,336.7L500.7,342.9M361.7,324.1L358.5,318.4M365.1,317.2L368.3,322.7M15.5,396L29.6,393.2M28.6,398.1L14.3,401M263.1,334.3L261.3,328.5M268.3,327.1L270.2,332.9M122.9,360.8L136.3,358.2M136.3,362.4L122.8,365.1M29.6,393.2L43.6,390.4M42.7,395.3L28.6,398.1M136.3,358.2L149.5,355.6M149.6,359.8L136.3,362.4M149.5,355.6L162.5,353.1M162.8,357.2L149.6,359.8M43.6,390.4L57.4,387.6M56.7,392.4L42.7,395.3M162.5,353.1L175.4,350.6M175.8,354.7L162.8,357.2M175.4,350.6L188.2,348.1M188.7,352.2L175.8,354.7M500.7,350.5L495.3,344.1M500.7,342.9L506.2,349.2M188.2,348.1L200.8,345.7M201.4,349.7L188.7,352.2M249.8,336.2L261.7,333.9M262.9,337.7L250.8,340M200.8,345.7L213.2,343.3M214,347.2L201.4,349.7M237.7,338.5L249.8,336.2M250.8,340L238.7,342.4M213.2,343.3L225.5,340.9M226.4,344.8L214,347.2M225.5,340.9L237.7,338.5M238.7,342.4L226.4,344.8M365,329.8L361.7,324.1M368.3,322.7L371.6,328.5M57.4,387.6L71.1,384.9M70.5,389.7L56.7,392.4M71.1,384.9L84.6,382.2M84.1,386.9L70.5,389.7M352.4,328.7L363.1,326.6M363.1,326.6L365.2,330.2M365.2,330.2L354.4,332.4M506.3,357L500.7,350.5M506.2,349.2L511.8,355.8M341.5,330.9L352.4,328.7M354.4,332.4L343.4,334.6M330.6,333.1L341.5,330.9M343.4,334.6L332.4,336.9M368.3,335.8L365,329.8M371.6,328.5L375.1,334.4M319.5,335.3L330.6,333.1M332.4,336.9L321.2,339.1M84.9,392.8L85.5,386.6M94.2,384.9L93.6,391.1M308.3,337.5L319.5,335.3M321.2,339.1L309.9,341.4M297,339.8L308.3,337.5M309.9,341.4L298.5,343.7M285.5,342.1L297,339.8M298.5,343.7L286.9,346M-22.9,434.1L-7.2,430.8M-8.8,436.5L-24.7,439.9M498.7,367.3L492.9,360.1M492.9,360.1L511.8,355.8M511.8,355.8L517.9,362.8M517.9,362.8L498.7,367.3M275.3,348.4L274,344.4M274,344.4L285.5,342.1M286.9,346L275.3,348.4M371.7,341.9L368.3,335.8M375.1,334.4L378.6,340.5M84.2,399.2L84.9,392.8M93.6,391.1L93.1,397.4M-7.2,430.8L8.3,427.5M6.9,433.2L-8.8,436.5M518.2,371.1L512.3,364.1M517.9,362.8L523.9,369.7M8.3,427.5L23.6,424.2M22.4,429.8L6.9,433.2M269.6,355.1L267.9,349.8M275.3,348.4L277,353.6M-74.3,501.9L-70,489.9M-70,489.9L-51.3,485.6M-51.3,485.6L-55.2,497.4M-55.2,497.4L-74.3,501.9M83.6,405.8L84.2,399.2M93.1,397.4L92.6,403.9M375.3,348.2L371.7,341.9M378.6,340.5L382.2,346.7M23.6,424.2L38.7,421M37.7,426.6L22.4,429.8M524.4,378.3L518.2,371.1M523.9,369.7L530.1,376.9M38.7,421L53.7,417.9M52.8,423.3L37.7,426.6M271.3,360.5L269.6,355.1M277,353.6L278.8,359M82.9,412.5L83.6,405.8M92.6,403.9L92,410.6M92,410.6L82.9,412.5M53.7,417.9L68.4,414.7M67.7,420.1L52.8,423.3M530.7,385.7L524.4,378.3M530.1,376.9L536.5,384.3M378.9,354.7L375.3,348.2M382.2,346.7L386,353.2M68.4,414.7L83,411.6M83,411.6L82.4,417M82.4,417L67.7,420.1M273,366.1L271.3,360.5M278.8,359L280.6,364.5M91.6,415L92.1,409.7M92.1,409.7L106.1,406.7M105.8,412L91.6,415M82,421.5L82.9,412.5M82.9,412.5L92,410.6M92,410.6L91.3,419.5M537.2,393.4L530.7,385.7M536.5,384.3L543.1,391.9M106.1,406.7L120,403.8M119.9,408.9L105.8,412M382.7,361.4L378.9,354.7M386,353.2L389.8,359.8M120,403.8L133.7,400.9M133.7,406L119.9,408.9M274.8,371.8L273,366.1M280.6,364.5L282.4,370.1M282.4,370.1L274.8,371.8M133.7,400.9L147.3,398M147.4,403L133.7,406M483,364.1L494,361.5M497.5,365.8L486.4,368.4M544,401.4L537.2,393.4M543.1,391.9L550,399.8M147.3,398L160.7,395.2M161,400.1L147.4,403M160.7,395.2L173.9,392.3M174.4,397.3L161,400.1M81,430.8L82,421.5M91.3,419.5L90.5,428.7M173.9,392.3L187,389.6M187.6,394.4L174.4,397.3M399.2,390.7L394.7,382.8M394.7,382.8L413.2,378.5M413.2,378.5L417.9,386.3M417.9,386.3L399.2,390.7M187,389.6L200,386.8M200.6,391.6L187.6,394.4M471.9,366.7L483,364.1M486.4,368.4L475.2,371.1M262.4,373.6L274.5,371M274.5,371L275.9,375.5M275.9,375.5L263.7,378.1M200,386.8L212.7,384.1M213.6,388.9L200.6,391.6M250.2,376.2L262.4,373.6M263.7,378.1L251.4,380.8M212.7,384.1L225.4,381.4M226.3,386.1L213.6,388.9M237.9,378.8L250.2,376.2M251.4,380.8L238.9,383.4M225.4,381.4L237.9,378.8M238.9,383.4L226.3,386.1M386.6,368.3L382.7,361.4M389.8,359.8L393.8,366.7M277.1,379.3L274.8,371.8M274.8,371.8L282.4,370.1M282.4,370.1L284.9,377.6M551,409.6L544,401.4M550,399.8L557,408M211.2,393.6L209.9,385.5M209.9,385.5L218,383.8M218,383.8L219.5,391.8M460.6,369.3L471.9,366.7M475.2,371.1L463.8,373.7M80,440.5L81,430.8M90.5,428.7L89.7,438.3M558.2,418.1L551,409.6M557,408L564.3,416.4M449.2,371.9L460.6,369.3M463.8,373.7L452.3,376.4M390.6,375.4L386.6,368.3M393.8,366.7L397.9,373.8M279.5,387.1L277.1,379.3M284.9,377.6L287.5,385.4M212.5,401.9L211.2,393.6M219.5,391.8L221,400M437.6,374.6L449.2,371.9M452.3,376.4L440.7,379.2M565.7,426.9L558.2,418.1M564.3,416.4L571.9,425.2M79,450.5L80,440.5M89.7,438.3L88.8,448.3M426,377.3L437.6,374.6M440.7,379.2L428.9,381.9M394.7,382.8L390.6,375.4M397.9,373.8L402.2,381M414.1,380L426,377.3M428.9,381.9L417,384.7M573.4,436L565.7,426.9M571.9,425.2L579.7,434.2M282.1,395.2L279.5,387.1M287.5,385.4L290.1,393.4M213.9,410.4L212.5,401.9M221,400L222.5,408.5M77.9,460.9L79,450.5M88.8,448.3L88,458.6M581.4,445.4L573.4,436M579.7,434.2L587.8,443.6M383.5,387.1L395.6,384.3M395.6,384.3L398.3,389.1M398.3,389.1L386.1,391.9M284.7,403.5L282.1,395.2M290.1,393.4L292.8,401.7M215.4,419.4L213.9,410.4M222.5,408.5L224.1,417.4M371.3,389.9L383.5,387.1M386.1,391.9L373.8,394.8M589.8,455.2L581.4,445.4M587.8,443.6L596.2,453.3M87.5,463.9L88.1,457.5M88.1,457.5L103.1,454M102.7,460.3L87.5,463.9M76.8,471.8L77.9,460.9M88,458.6L87.1,469.3M358.9,392.8L371.3,389.9M373.8,394.8L361.3,397.7M403.6,398.5L399.2,390.7M406.7,388.9L411.2,396.7M103.1,454L117.9,450.6M117.8,456.8L102.7,460.3M346.4,395.7L358.9,392.8M361.3,397.7L348.7,400.7M598.4,465.4L589.8,455.2M596.2,453.3L605,463.4M117.9,450.6L132.6,447.2M132.6,453.3L117.8,456.8M333.8,398.6L346.4,395.7M348.7,400.7L335.9,403.7M287.4,412.2L284.7,403.5M292.8,401.7L295.7,410.3M132.6,447.2L147.1,443.8M147.2,449.9L132.6,453.3M320.9,401.6L333.8,398.6M335.9,403.7L322.9,406.7M216.9,428.6L215.4,419.4M224.1,417.4L225.8,426.5M147.1,443.8L161.4,440.5M161.7,446.5L147.2,449.9M308,404.6L320.9,401.6M322.9,406.7L309.8,409.8M75.7,483L76.8,471.8M87.1,469.3L86.1,480.5M408.2,406.6L403.6,398.5M411.2,396.7L415.9,404.8M296.5,412.9L294.8,407.6M294.8,407.6L308,404.6M309.8,409.8L296.5,412.9M161.4,440.5L175.5,437.2M175.9,443.1L161.7,446.5M274.6,412.3L286.5,409.6M286.5,409.6L288.2,414.8M288.2,414.8L276.1,417.7M175.5,437.2L189.4,434M190,439.8L175.9,443.1M262.4,415.1L274.6,412.3M276.1,417.7L263.9,420.5M226.3,429.3L225.3,423.7M225.3,423.7L237.8,420.8M239,426.4L226.3,429.3M250.2,418L262.4,415.1M263.9,420.5L251.5,423.4M237.8,420.8L250.2,418M251.5,423.4L239,426.4M189.4,434L203.2,430.8M203.9,436.6L190,439.8M203.2,430.8L216.8,427.6M216.8,427.6L217.7,433.3M217.7,433.3L203.9,436.6M590.7,480.3L582.4,470.2M582.4,470.2L605,463.4M605,463.4L613.5,473.3M613.5,473.3L590.7,480.3M616.4,486.7L606.8,475.3M613.5,473.3L623.2,484.5M290.2,421.2L287.4,412.2M295.7,410.3L298.6,419.1M218.5,438.2L216.9,428.6M225.8,426.5L227.5,436M74.5,494.8L75.7,483M86.1,480.5L85.2,492.2M412.9,415L408.2,406.6M415.9,404.8L420.8,413.1M-18.1,535.2L0.6,530.4M-1.2,538.6L-20.2,543.5M626.5,498.5L616.4,486.7M623.2,484.5L633.3,496.2M0.6,530.4L19,525.7M17.5,533.8L-1.2,538.6M293.1,430.5L290.2,421.2M298.6,419.1L301.7,428.4M636.9,510.8L626.5,498.5M633.3,496.2L643.9,508.4M220.1,448.1L218.5,438.2M227.5,436L229.3,445.9M417.8,423.7L412.9,415M420.8,413.1L425.8,421.7M73.2,507L74.5,494.8M85.2,492.2L84.1,504.3M19,525.7L37.2,521.1M35.9,529.1L17.5,533.8M647.8,523.6L636.9,510.8M643.9,508.4L654.9,521.2M37.2,521.1L55.1,516.6M54.1,524.4L35.9,529.1M296.1,440.1L293.1,430.5M301.7,428.4L304.8,437.9M659.2,537L647.8,523.6M654.9,521.2L666.4,534.5M55.1,516.6L72.7,512.1M72.7,512.1L71.9,519.8M71.9,519.8L54.1,524.4M422.8,432.7L417.8,423.7M425.8,421.7L430.9,430.6M221.8,458.4L220.1,448.1M229.3,445.9L231.2,456.1M71.9,519.8L73.2,507M84.1,504.3L83.1,517M83.1,517L71.9,519.8M671.1,551L659.2,537M666.4,534.5L678.4,548.4M83.1,517L83.7,509.3M83.7,509.3L100.7,505M100.2,512.5L83.1,517M683.6,565.7L671.1,551M678.4,548.4L691,562.9M63.4,603.1L67.3,564.7M67.3,564.7L79.3,561.4M79.3,561.4L76.2,599.4M76.2,599.4L63.4,603.1M428.1,442.1L422.8,432.7M430.9,430.6L436.3,439.9M100.7,505L117.4,500.7M117.2,508.2L100.2,512.5M299.2,450.1L296.1,440.1M304.8,437.9L308.1,447.9M70.8,530.5L71.9,519.8M71.9,519.8L83.1,517M83.1,517L82.2,527.5M223.5,469.2L221.8,458.4M231.2,456.1L233.1,466.8M117.4,500.7L133.8,496.6M133.8,503.9L117.2,508.2M696.6,581L683.6,565.7M691,562.9L704.1,578.1M133.8,496.6L150,492.4M150.3,499.7L133.8,503.9M-31.7,590.5L-11.2,584.9M-13.3,594.6L-34.1,600.5M710.3,597.1L696.6,581M704.1,578.1L717.9,594.1M150,492.4L166,488.4M166.4,495.5L150.3,499.7M69.7,541.5L70.8,530.5M82.2,527.5L81.3,538.4M433.5,451.7L428.1,442.1M436.3,439.9L441.9,449.5M166,488.4L181.8,484.4M182.4,491.4L166.4,495.5M302.4,460.5L299.2,450.1M308.1,447.9L311.5,458.2M311.5,458.2L302.4,460.5M-11.2,584.9L9,579.3M7.2,588.9L-13.3,594.6M724.6,614L710.3,597.1M717.9,594.1L732.4,610.8M181.8,484.4L197.4,480.4M198.2,487.4L182.4,491.4M225.4,480.3L223.5,469.2M233.1,466.8L235.1,477.8M235.1,477.8L225.4,480.3M571.1,476.4L584.2,472.4M590.7,480.3L577.4,484.4M197.4,480.4L212.7,476.5M213.7,483.4L198.2,487.4M286.3,457.8L300.5,454.2M300.5,454.2L302.4,460.5M302.4,460.5L288.1,464.2M212.7,476.5L227.8,472.7M229,479.4L213.7,483.4M272,461.5L286.3,457.8M288.1,464.2L273.6,467.9M739.7,631.8L724.6,614M732.4,610.8L747.6,628.4M227.8,472.7L242.8,468.9M244.1,475.5L229,479.4M257.5,465.2L272,461.5M273.6,467.9L259,471.7M242.8,468.9L257.5,465.2M259,471.7L244.1,475.5M68.6,552.9L69.7,541.5M81.3,538.4L80.3,549.7M9,579.3L28.8,573.9M27.3,583.3L7.2,588.9M470.5,517.4L464,506M464,506L486.5,499.2M486.5,499.2L493.3,510.3M493.3,510.3L470.5,517.4M439.2,461.8L433.5,451.7M441.9,449.5L447.7,459.4M321.5,527.8L312.1,497.2M312.1,497.2L323.3,494.1M323.3,494.1L333.3,524.4M333.3,524.4L321.5,527.8M557.7,480.5L571.1,476.4M577.4,484.4L563.9,488.6M746.1,654.9L730.2,635.8M730.2,635.8L747.6,628.4M747.6,628.4L763.8,647.1M763.8,647.1L746.1,654.9M305.1,469.2L302.4,460.5M302.4,460.5L311.5,458.2M311.5,458.2L314.3,466.8M28.8,573.9L48.3,568.5M47.1,577.8L27.3,583.3M67.3,564.7L68.6,552.9M80.3,549.7L79.3,561.4M48.3,568.5L67.5,563.2M67.5,563.2L66.6,572.4M66.6,572.4L47.1,577.8M544.2,484.6L557.7,480.5M563.9,488.6L550.2,492.8M445,472.2L439.2,461.8M447.7,459.4L453.7,469.7M425,464.8L438.8,461M438.8,461L442.4,467.5M442.4,467.5L428.5,471.4M307.9,478.1L305.1,469.2M314.3,466.8L317.2,475.6M720.6,650.2L736.4,643.4M746.1,654.9L730,662M411,468.7L425,464.8M428.5,471.4L414.4,475.3M530.5,488.7L544.2,484.6M550.2,492.8L536.3,497.1M451.1,483L445,472.2M453.7,469.7L459.9,480.5M396.9,472.6L411,468.7M414.4,475.3L400.1,479.3M310.8,487.3L307.9,478.1M317.2,475.6L320.2,484.7M704.4,657.2L720.6,650.2M730,662L713.7,669.2M382.5,476.5L396.9,472.6M400.1,479.3L385.5,483.4M516.5,493L530.5,488.7M536.3,497.1L522.2,501.4M367.9,480.5L382.5,476.5M385.5,483.4L370.8,487.5M457.4,494.3L451.1,483M459.9,480.5L466.4,491.6M687.9,664.3L704.4,657.2M713.7,669.2L697,676.6M313.7,496.8L310.8,487.3M320.2,484.7L323.3,494.1M353.1,484.6L367.9,480.5M370.8,487.5L355.9,491.6M502.4,497.3L516.5,493M522.2,501.4L507.9,505.9M338.2,488.7L353.1,484.6M355.9,491.6L340.7,495.9M325.3,500.2L322.9,492.9M322.9,492.9L338.2,488.7M340.7,495.9L325.3,500.2M76.2,599.4L77.1,587.8M77.1,587.8L97.7,581.9M97.1,593.3L76.2,599.4M671.1,671.6L687.9,664.3M697,676.6L680,684.1M488,501.6L502.4,497.3M507.9,505.9L493.3,510.3M464,506L457.4,494.3M466.4,491.6L473.1,503.2M61.7,620.3L63.4,603.1M76.2,599.4L74.7,616.4M97.7,581.9L117.8,576.2M117.6,587.3L97.1,593.3M117.8,576.2L137.7,570.5M137.7,581.4L117.6,587.3M653.9,679L671.1,671.6M680,684.1L662.7,691.8M137.7,570.5L157.2,564.9M157.6,575.6L137.7,581.4M59.8,638.4L61.7,620.3M74.7,616.4L73.2,634.3M157.2,564.9L176.3,559.4M177,569.9L157.6,575.6M636.5,686.6L653.9,679M662.7,691.8L645,699.6M176.3,559.4L195.2,554M196.2,564.3L177,569.9M195.2,554L213.7,548.7M215,558.9L196.2,564.3M477.8,530.4L470.5,517.4M479.7,514.6L487.2,527.4M213.7,548.7L231.9,543.4M233.5,553.5L215,558.9M301.9,523.4L318.7,518.5M321.5,527.8L304.5,532.8M231.9,543.4L249.8,538.3M251.7,548.2L233.5,553.5M284.8,528.3L301.9,523.4M304.5,532.8L287.2,537.8M57.9,657.4L59.8,638.4M73.2,634.3L71.6,653.1M249.8,538.3L267.5,533.2M269.6,542.9L251.7,548.2M267.5,533.2L284.8,528.3M287.2,537.8L269.6,542.9M618.6,694.3L636.5,686.6M645,699.6L626.9,707.6M485.4,544L477.8,530.4M487.2,527.4L495,540.9M327.5,540.9L323.2,527.3M333.3,524.4L337.7,537.8M600.4,702.2L618.6,694.3M626.9,707.6L608.5,715.7M55.8,677.5L57.9,657.4M71.6,653.1L70,673M587.3,725.1L573.2,700M573.2,700L593.9,691.2M593.9,691.2L608.5,715.7M608.5,715.7L587.3,725.1M493.4,558.2L485.4,544M495,540.9L503.1,554.9M331.9,555.1L327.5,540.9M337.7,537.8L342.4,551.9M53.7,698.7L55.8,677.5M70,673L68.2,693.9M560.7,719.3L579.5,711.2M587.3,725.1L568.3,733.5M501.7,573L493.4,558.2M503.1,554.9L511.7,569.6M51.4,721.2L53.7,698.7M68.2,693.9L66.3,716.1M541.6,727.6L560.7,719.3M568.3,733.5L548.9,742M336.5,569.9L331.9,555.1M342.4,551.9L347.2,566.6M510.5,588.6L501.7,573M511.7,569.6L520.6,585M522.1,736L541.6,727.6M548.9,742L529.1,750.8M48.9,744.9L51.4,721.2M66.3,716.1L64.4,739.6M502.1,744.7L522.1,736M529.1,750.8L508.8,759.7M341.4,585.5L336.5,569.9M347.2,566.6L352.3,582M519.7,604.9L510.5,588.6M520.6,585L530,601.2M481.8,753.5L502.1,744.7M508.8,759.7L488.2,768.9M46.4,770.2L48.9,744.9M64.4,739.6L62.3,764.4M460.9,762.5L481.8,753.5M488.2,768.9L467,778.2M529.3,622L519.7,604.9M530,601.2L539.8,618.1M346.5,601.8L341.4,585.5M352.3,582L357.6,598.2M439.7,771.7L460.9,762.5M467,778.2L445.5,787.7M43.6,797L46.4,770.2M62.3,764.4L60.1,790.9M418,781L439.7,771.7M445.5,787.7L423.4,797.5M395.2,809.9L384.6,774.1M384.6,774.1L411.9,762.6M411.9,762.6L423.4,797.5M423.4,797.5L395.2,809.9M539.4,640L529.3,622M539.8,618.1L550.1,635.9M351.8,619L346.5,601.8M357.6,598.2L363.2,615.1M550.1,659L539.4,640M550.1,635.9L561,654.6M561.3,678.9L550.1,659M561,654.6L572.5,674.4M357.4,637L351.8,619M363.2,615.1L369.1,633M573.2,700L561.3,678.9M572.5,674.4L584.6,695.2M363.4,656L357.4,637M369.1,633L375.3,651.7M369.6,676.1L363.4,656M375.3,651.7L381.8,671.5M376.2,697.2L369.6,676.1M381.8,671.5L388.7,692.4M383.2,719.6L376.2,697.2M388.7,692.4L396,714.5M390.5,743.2L383.2,719.6M396,714.5L403.7,737.9M398.4,768.4L390.5,743.2M403.7,737.9L411.9,762.6"/><path d="M171.2,390.3L178.4,429.3L170.2,433.4M84.7,517.0L138.7,519.6M89.9,528.6L138.7,519.6M84.7,527.3L113.0,578.7M123.3,528.6L123.3,576.1M138.7,519.6L140.0,573.5M143.8,515.8L154.1,517.6L155.4,514.0L165.6,515.8L166.9,511.9L177.2,513.2L179.8,508.1L190.0,509.3L192.1,504.2L200.3,505.5M146.4,520.1L202.9,528.6M200.3,504.2L241.4,540.2M195.2,502.9L205.4,550.4M205.4,529.9L238.8,522.2M206.7,537.6L240.1,529.9M208.0,545.3L241.4,537.6M202.9,517.0L223.4,497.8M205.4,524.7L231.1,504.2M238.8,517.0L244.0,540.2" stroke="#0c9038" stroke-width="0.9" fill="none"/><path d="M130.7,422.6L167.6,387.2M131.7,424.4L168.4,389.0M129.1,437.5L168.4,402.8M130.2,439.3L169.0,404.6M91.2,415.4L99.4,428.3L131.2,421.6M101.4,432.9L131.7,425.2M100.4,429.3L104.5,451.9M167.1,387.2L171.2,395.4L170.7,429.3M102.5,451.9L128.1,447.8M86.6,493.5L94.3,473.0L96.8,474.3L105.2,493.5L104.5,499.9M86.6,496.1L95.5,506.3M105.2,490.3L116.1,488.4L121.2,493.5M118.6,496.1L126.3,486.5L128.3,487.7L119.9,497.4M131.5,489.7L145.0,485.6L146.2,494.2M146.9,489.0L155.9,486.5L157.2,491.6M189.2,475.5L223.9,471.7M189.9,478.7L223.9,474.3M191.2,475.5L191.8,482.0M104.5,498.6L128.9,505.7M123.8,498.6L131.5,519.2" stroke="#000" stroke-width="1" fill="none"/><path d="M105.0,434.4L107.1,451.9M109.1,433.4L112.2,450.8M113.7,432.4L116.8,448.8M118.9,431.3L122.5,447.8M123.5,430.3L126.1,445.7M132.7,425.2L136.3,442.6M138.4,421.1L141.0,440.6M144.0,417.0L146.6,438.0M149.7,411.8L152.8,436.0M155.8,407.7L158.9,434.4M161.0,402.6L164.1,432.4M165.6,397.5L168.7,428.3M89.1,475.5L96.8,505.1M91.7,474.3L99.4,503.8M94.3,474.3L101.3,502.5M97.5,476.2L103.9,499.9M120.6,493.5L125.7,503.8M123.8,491.6L128.9,501.2M127.6,489.7L132.8,498.6M130.2,489.0L135.3,497.4" stroke="#000" stroke-width="1.8" fill="none"/><path d="M672,672L657,650M655,647L654,657L660,653Z" stroke="#b88a40" stroke-width="2" fill="#b88a40"/><path d="M654,735L663,740L658,733Z" stroke="#b88a40" stroke-width="1.5" fill="#b88a40"/></svg><style>.k0{fill:#00ff4c;shape-rendering:crispEdges}.k1{fill:none;stroke:#10a040;stroke-width:0.9px}.k2{fill:#6c8a34;shape-rendering:crispEdges}.k3{fill:#ff0000;shape-rendering:crispEdges}.k4{fill:none;stroke:#000;stroke-width:1.1px}.k5{fill:none;stroke:#000;stroke-width:1.2px}</style>
<div id="sep"></div>

<div style="position:absolute;left:830px;top:5px;color:#ff0a0a;font-size:12px;white-space:nowrap;letter-spacing:0px" id="title">Tüm yetersizlikler - Deneme Sürümü</div>
<div style="position:absolute;left:829px;top:31px;width:25px;height:80px;background:#ff0000"></div>
<div style="position:absolute;left:829px;top:111px;width:25px;height:80px;background:#00f850"></div>
<div style="position:absolute;left:856px;top:64px;color:#e6e6e6;font-size:11px;white-space:nowrap" id="l1">YETERSİZ</div>
<div style="position:absolute;left:856px;top:144px;color:#e6e6e6;font-size:11px;white-space:nowrap" id="l2">YETERLİ</div>
<svg style="position:absolute;left:0;top:0" width="1630" height="20">
 <g id="btns">
 <rect x="802" y="1" width="18" height="16" fill="#3a3a3a"/>
 <rect x="803" y="2" width="15" height="13" fill="#fff"/>
 <rect x="804" y="3" width="14" height="12" fill="#d4d4d4"/>
 <path d="M805.5,13.5L810.5,4.2L815.8,13.5" fill="none" stroke="#000" stroke-width="1.1"/>
 <rect x="1582" y="1" width="48" height="16" fill="#3a3a3a"/>
 <rect x="1583" y="2" width="16" height="13" fill="#fff"/><rect x="1584" y="3" width="15" height="12" fill="#d4d4d4"/>
 <rect x="1601" y="2" width="16" height="13" fill="#fff"/><rect x="1602" y="3" width="15" height="12" fill="#d4d4d4"/>
 <rect x="1619" y="2" width="11" height="13" fill="#fff"/><rect x="1620" y="3" width="10" height="12" fill="#d4d4d4"/>
 <path d="M1584.5,3.6H1598L1591.5,9.3V13.2L1589.5,14.5V9.3Z" fill="none" stroke="#000" stroke-width="1"/>
 <path d="M1609.5,3.5V13.6M1609.5,3.5L1607,6.6" fill="none" stroke="#000" stroke-width="1.2"/>
 <path d="M1621.3,13.6L1626.5,4.4L1631,12" fill="none" stroke="#000" stroke-width="1.1"/>
 </g>
</svg>
<div id="dlg" style="position:absolute;left:0;top:29px;width:122px;height:93px;background:#eef3fb">
 <div style="position:absolute;left:0;top:4px;width:118px;height:23px;background:#b9c1cc"></div>
 <div style="position:absolute;left:-1px;top:9px;font-size:11.5px;color:#38404a;font-weight:bold;white-space:nowrap;letter-spacing:-0.3px">utusu</div>
 <svg style="position:absolute;left:104px;top:10px" width="12" height="12"><path d="M2,2L10,10M10,2L2,10" stroke="#606870" stroke-width="1.2"/></svg>
 <div style="position:absolute;left:0;top:27px;width:118px;height:66px;background:#f0f0f0"></div>
 <div style="position:absolute;left:0;top:28px;width:26px;height:18px;background:#fff;border-bottom:1px solid #9aa"></div>
 <div style="position:absolute;left:54px;top:28px;width:62px;height:18px;background:#fff;border-bottom:1px solid #9aa"></div>
 <div style="position:absolute;left:0;top:49px;width:26px;height:18px;background:#fff;border-bottom:1px solid #9aa"></div>
 <div style="position:absolute;left:54px;top:49px;width:62px;height:18px;background:#fff;border-bottom:1px solid #9aa"></div>
 <div style="position:absolute;left:0;top:70px;width:26px;height:18px;background:#ececec;border-bottom:1px solid #9aa"></div>
 <div style="position:absolute;left:-1px;top:31px;font-size:10.7px;color:#101010;white-space:nowrap">76 cm</div>
 <div style="position:absolute;left:32px;top:31px;font-size:10.7px;color:#101010">L</div>
 <div style="position:absolute;left:59px;top:31px;font-size:10.7px;color:#101010;white-space:nowrap">3318.4 cm</div>
 <div style="position:absolute;left:1px;top:52px;font-size:10.7px;color:#101010;white-space:nowrap">3 cm</div>
 <div style="position:absolute;left:32px;top:52px;font-size:10.7px;color:#101010">A</div>
 <div style="position:absolute;left:59px;top:52px;font-size:10.7px;color:#101010;white-space:nowrap">329.523</div>
 <div style="position:absolute;left:-1px;top:73px;font-size:10.7px;color:#101010;white-space:nowrap">m</div>
</div>

</body></html>
